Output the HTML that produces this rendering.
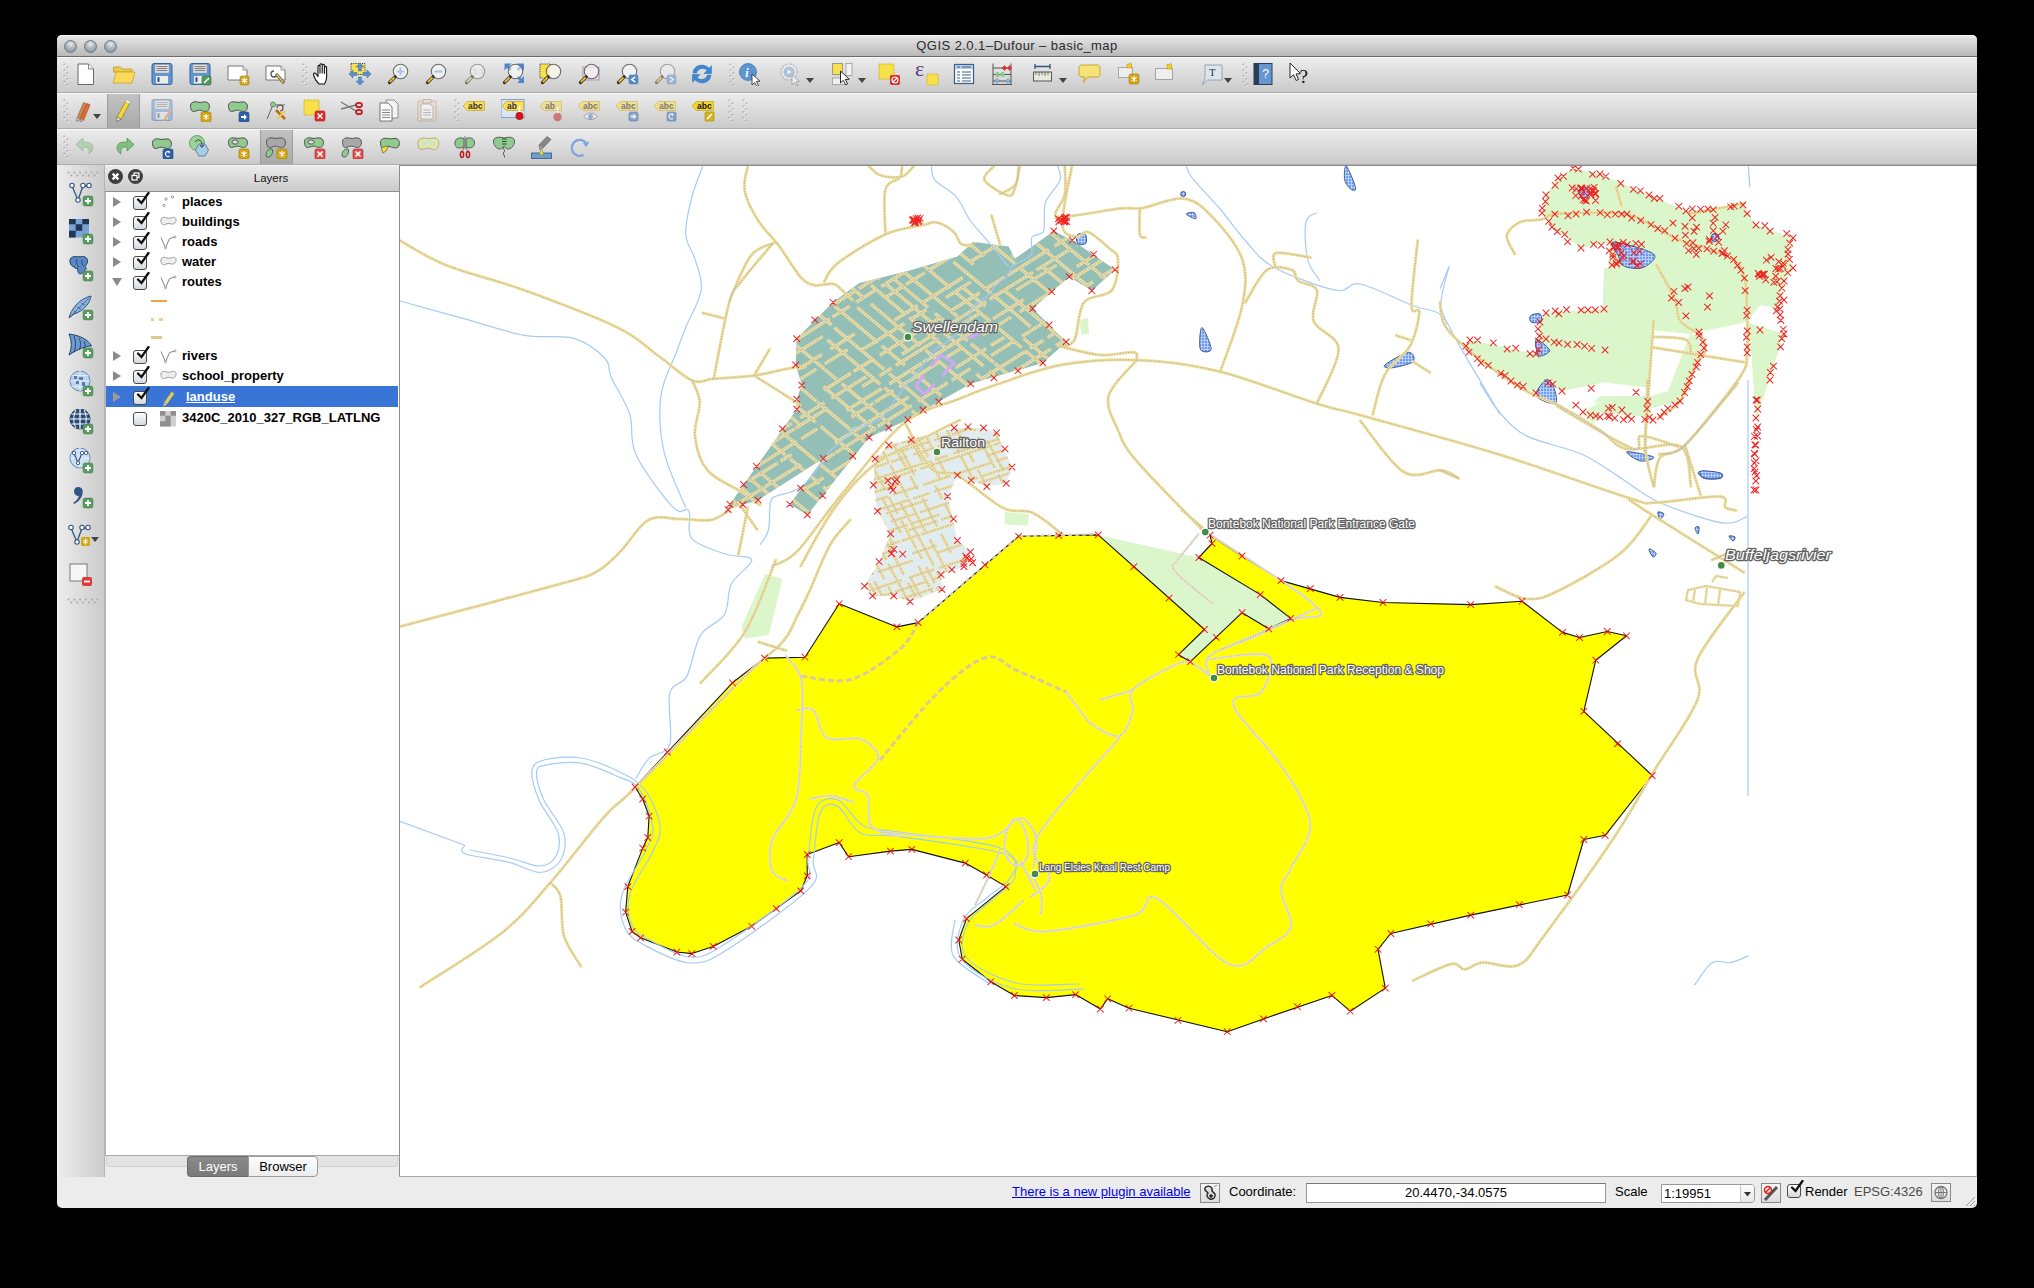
<!DOCTYPE html><html><head><meta charset="utf-8"><style>
*{margin:0;padding:0;box-sizing:border-box}
html,body{width:2034px;height:1288px;overflow:hidden}
body{background:#000;position:relative;font-family:"Liberation Sans", sans-serif;color:#000}
.a{position:absolute}
.tb{position:absolute;left:57px;width:1920px;height:36px;border-top:1px solid #f7f7f7;border-bottom:1px solid #adadad;background:linear-gradient(#ececec,#cacaca)}
.grip{position:absolute;width:4px;height:22px;background-image:radial-gradient(circle at 1px 1px,#9a9a9a 0.9px,transparent 1.1px);background-size:3px 3px}
.ico{position:absolute;width:26px;height:26px;overflow:visible}
.lay{position:absolute;left:182px;font-weight:bold;font-size:13px;line-height:16px;color:#000;white-space:nowrap}
.chk{position:absolute;left:133px;width:14px;height:14px;border:1px solid #6f6f6f;border-radius:3px;background:linear-gradient(#fdfdfd,#d9d9d9)}
.tri{position:absolute;left:113px;width:0;height:0;border-top:5px solid transparent;border-bottom:5px solid transparent;border-left:8px solid #8a8a8a}
.lbl{position:absolute;white-space:nowrap;color:#6d6d6d;text-shadow:0 0 1px #fff,0 0 1px #fff,1px 0 0 #fff,-1px 0 0 #fff,0 1px 0 #fff,0 -1px 0 #fff,1px 1px 1px #777,-1px -1px 1px #777}
</style></head><body><div class="a" style="left:57px;top:35px;width:1920px;height:1173px;background:#ececec;border-radius:5px"></div>
<div class="a" style="left:57px;top:35px;width:1920px;height:22px;border-radius:5px 5px 0 0;border-top:1px solid #f8f8f8;border-bottom:1px solid #6b6b6b;background:linear-gradient(#e6e6e6,#b8b8b8)"></div>
<div class="a" style="left:64px;top:40px;width:13px;height:13px;border-radius:50%;border:1px solid #6f7880;background:radial-gradient(circle at 50% 30%,#e9eef2 0,#aeb6bd 45%,#7d8790 100%)"></div>
<div class="a" style="left:84px;top:40px;width:13px;height:13px;border-radius:50%;border:1px solid #6f7880;background:radial-gradient(circle at 50% 30%,#e9eef2 0,#aeb6bd 45%,#7d8790 100%)"></div>
<div class="a" style="left:104px;top:40px;width:13px;height:13px;border-radius:50%;border:1px solid #6f7880;background:radial-gradient(circle at 50% 30%,#e9eef2 0,#aeb6bd 45%,#7d8790 100%)"></div>
<div class="a" style="left:57px;top:38px;width:1920px;text-align:center;font-size:13px;letter-spacing:0.44px;line-height:16px;color:#2a2a2a">QGIS 2.0.1&#8211;Dufour &#8211; basic_map</div>
<div class="tb" style="top:57px"></div>
<div class="tb" style="top:93px"></div>
<div class="tb" style="top:129px"></div>
<div class="a" style="left:107px;top:94px;width:33px;height:34px;background:linear-gradient(#c2c2c2,#a9a9a9);border-left:1px solid #9c9c9c;border-right:1px solid #9c9c9c"></div>
<div class="a" style="left:260px;top:130px;width:33px;height:34px;background:linear-gradient(#c2c2c2,#a9a9a9);border-left:1px solid #9c9c9c;border-right:1px solid #9c9c9c"></div>
<svg class="a" style="left:63px;top:63px" width="8" height="24" viewBox="0 0 8 24"><rect x="0.6" y="0.6" width="1.8" height="1.8" fill="#a9a9a9"/><rect x="1.4" y="1.6" width="1.4" height="1.4" fill="#fff" opacity=".8"/><rect x="3.6" y="3.5000000000000004" width="1.8" height="1.8" fill="#a9a9a9"/><rect x="4.4" y="4.5" width="1.4" height="1.4" fill="#fff" opacity=".8"/><rect x="0.6" y="6.3999999999999995" width="1.8" height="1.8" fill="#a9a9a9"/><rect x="1.4" y="7.3999999999999995" width="1.4" height="1.4" fill="#fff" opacity=".8"/><rect x="3.6" y="9.299999999999999" width="1.8" height="1.8" fill="#a9a9a9"/><rect x="4.4" y="10.299999999999999" width="1.4" height="1.4" fill="#fff" opacity=".8"/><rect x="0.6" y="12.2" width="1.8" height="1.8" fill="#a9a9a9"/><rect x="1.4" y="13.2" width="1.4" height="1.4" fill="#fff" opacity=".8"/><rect x="3.6" y="15.1" width="1.8" height="1.8" fill="#a9a9a9"/><rect x="4.4" y="16.1" width="1.4" height="1.4" fill="#fff" opacity=".8"/><rect x="0.6" y="18.0" width="1.8" height="1.8" fill="#a9a9a9"/><rect x="1.4" y="19.0" width="1.4" height="1.4" fill="#fff" opacity=".8"/><rect x="3.6" y="20.900000000000002" width="1.8" height="1.8" fill="#a9a9a9"/><rect x="4.4" y="21.900000000000002" width="1.4" height="1.4" fill="#fff" opacity=".8"/></svg>
<svg class="a" style="left:302px;top:63px" width="8" height="24" viewBox="0 0 8 24"><rect x="0.6" y="0.6" width="1.8" height="1.8" fill="#a9a9a9"/><rect x="1.4" y="1.6" width="1.4" height="1.4" fill="#fff" opacity=".8"/><rect x="3.6" y="3.5000000000000004" width="1.8" height="1.8" fill="#a9a9a9"/><rect x="4.4" y="4.5" width="1.4" height="1.4" fill="#fff" opacity=".8"/><rect x="0.6" y="6.3999999999999995" width="1.8" height="1.8" fill="#a9a9a9"/><rect x="1.4" y="7.3999999999999995" width="1.4" height="1.4" fill="#fff" opacity=".8"/><rect x="3.6" y="9.299999999999999" width="1.8" height="1.8" fill="#a9a9a9"/><rect x="4.4" y="10.299999999999999" width="1.4" height="1.4" fill="#fff" opacity=".8"/><rect x="0.6" y="12.2" width="1.8" height="1.8" fill="#a9a9a9"/><rect x="1.4" y="13.2" width="1.4" height="1.4" fill="#fff" opacity=".8"/><rect x="3.6" y="15.1" width="1.8" height="1.8" fill="#a9a9a9"/><rect x="4.4" y="16.1" width="1.4" height="1.4" fill="#fff" opacity=".8"/><rect x="0.6" y="18.0" width="1.8" height="1.8" fill="#a9a9a9"/><rect x="1.4" y="19.0" width="1.4" height="1.4" fill="#fff" opacity=".8"/><rect x="3.6" y="20.900000000000002" width="1.8" height="1.8" fill="#a9a9a9"/><rect x="4.4" y="21.900000000000002" width="1.4" height="1.4" fill="#fff" opacity=".8"/></svg>
<svg class="a" style="left:729px;top:63px" width="8" height="24" viewBox="0 0 8 24"><rect x="0.6" y="0.6" width="1.8" height="1.8" fill="#a9a9a9"/><rect x="1.4" y="1.6" width="1.4" height="1.4" fill="#fff" opacity=".8"/><rect x="3.6" y="3.5000000000000004" width="1.8" height="1.8" fill="#a9a9a9"/><rect x="4.4" y="4.5" width="1.4" height="1.4" fill="#fff" opacity=".8"/><rect x="0.6" y="6.3999999999999995" width="1.8" height="1.8" fill="#a9a9a9"/><rect x="1.4" y="7.3999999999999995" width="1.4" height="1.4" fill="#fff" opacity=".8"/><rect x="3.6" y="9.299999999999999" width="1.8" height="1.8" fill="#a9a9a9"/><rect x="4.4" y="10.299999999999999" width="1.4" height="1.4" fill="#fff" opacity=".8"/><rect x="0.6" y="12.2" width="1.8" height="1.8" fill="#a9a9a9"/><rect x="1.4" y="13.2" width="1.4" height="1.4" fill="#fff" opacity=".8"/><rect x="3.6" y="15.1" width="1.8" height="1.8" fill="#a9a9a9"/><rect x="4.4" y="16.1" width="1.4" height="1.4" fill="#fff" opacity=".8"/><rect x="0.6" y="18.0" width="1.8" height="1.8" fill="#a9a9a9"/><rect x="1.4" y="19.0" width="1.4" height="1.4" fill="#fff" opacity=".8"/><rect x="3.6" y="20.900000000000002" width="1.8" height="1.8" fill="#a9a9a9"/><rect x="4.4" y="21.900000000000002" width="1.4" height="1.4" fill="#fff" opacity=".8"/></svg>
<svg class="a" style="left:1242px;top:63px" width="8" height="24" viewBox="0 0 8 24"><rect x="0.6" y="0.6" width="1.8" height="1.8" fill="#a9a9a9"/><rect x="1.4" y="1.6" width="1.4" height="1.4" fill="#fff" opacity=".8"/><rect x="3.6" y="3.5000000000000004" width="1.8" height="1.8" fill="#a9a9a9"/><rect x="4.4" y="4.5" width="1.4" height="1.4" fill="#fff" opacity=".8"/><rect x="0.6" y="6.3999999999999995" width="1.8" height="1.8" fill="#a9a9a9"/><rect x="1.4" y="7.3999999999999995" width="1.4" height="1.4" fill="#fff" opacity=".8"/><rect x="3.6" y="9.299999999999999" width="1.8" height="1.8" fill="#a9a9a9"/><rect x="4.4" y="10.299999999999999" width="1.4" height="1.4" fill="#fff" opacity=".8"/><rect x="0.6" y="12.2" width="1.8" height="1.8" fill="#a9a9a9"/><rect x="1.4" y="13.2" width="1.4" height="1.4" fill="#fff" opacity=".8"/><rect x="3.6" y="15.1" width="1.8" height="1.8" fill="#a9a9a9"/><rect x="4.4" y="16.1" width="1.4" height="1.4" fill="#fff" opacity=".8"/><rect x="0.6" y="18.0" width="1.8" height="1.8" fill="#a9a9a9"/><rect x="1.4" y="19.0" width="1.4" height="1.4" fill="#fff" opacity=".8"/><rect x="3.6" y="20.900000000000002" width="1.8" height="1.8" fill="#a9a9a9"/><rect x="4.4" y="21.900000000000002" width="1.4" height="1.4" fill="#fff" opacity=".8"/></svg>
<svg class="a" style="left:63px;top:99px" width="8" height="24" viewBox="0 0 8 24"><rect x="0.6" y="0.6" width="1.8" height="1.8" fill="#a9a9a9"/><rect x="1.4" y="1.6" width="1.4" height="1.4" fill="#fff" opacity=".8"/><rect x="3.6" y="3.5000000000000004" width="1.8" height="1.8" fill="#a9a9a9"/><rect x="4.4" y="4.5" width="1.4" height="1.4" fill="#fff" opacity=".8"/><rect x="0.6" y="6.3999999999999995" width="1.8" height="1.8" fill="#a9a9a9"/><rect x="1.4" y="7.3999999999999995" width="1.4" height="1.4" fill="#fff" opacity=".8"/><rect x="3.6" y="9.299999999999999" width="1.8" height="1.8" fill="#a9a9a9"/><rect x="4.4" y="10.299999999999999" width="1.4" height="1.4" fill="#fff" opacity=".8"/><rect x="0.6" y="12.2" width="1.8" height="1.8" fill="#a9a9a9"/><rect x="1.4" y="13.2" width="1.4" height="1.4" fill="#fff" opacity=".8"/><rect x="3.6" y="15.1" width="1.8" height="1.8" fill="#a9a9a9"/><rect x="4.4" y="16.1" width="1.4" height="1.4" fill="#fff" opacity=".8"/><rect x="0.6" y="18.0" width="1.8" height="1.8" fill="#a9a9a9"/><rect x="1.4" y="19.0" width="1.4" height="1.4" fill="#fff" opacity=".8"/><rect x="3.6" y="20.900000000000002" width="1.8" height="1.8" fill="#a9a9a9"/><rect x="4.4" y="21.900000000000002" width="1.4" height="1.4" fill="#fff" opacity=".8"/></svg>
<svg class="a" style="left:454px;top:99px" width="8" height="24" viewBox="0 0 8 24"><rect x="0.6" y="0.6" width="1.8" height="1.8" fill="#a9a9a9"/><rect x="1.4" y="1.6" width="1.4" height="1.4" fill="#fff" opacity=".8"/><rect x="3.6" y="3.5000000000000004" width="1.8" height="1.8" fill="#a9a9a9"/><rect x="4.4" y="4.5" width="1.4" height="1.4" fill="#fff" opacity=".8"/><rect x="0.6" y="6.3999999999999995" width="1.8" height="1.8" fill="#a9a9a9"/><rect x="1.4" y="7.3999999999999995" width="1.4" height="1.4" fill="#fff" opacity=".8"/><rect x="3.6" y="9.299999999999999" width="1.8" height="1.8" fill="#a9a9a9"/><rect x="4.4" y="10.299999999999999" width="1.4" height="1.4" fill="#fff" opacity=".8"/><rect x="0.6" y="12.2" width="1.8" height="1.8" fill="#a9a9a9"/><rect x="1.4" y="13.2" width="1.4" height="1.4" fill="#fff" opacity=".8"/><rect x="3.6" y="15.1" width="1.8" height="1.8" fill="#a9a9a9"/><rect x="4.4" y="16.1" width="1.4" height="1.4" fill="#fff" opacity=".8"/><rect x="0.6" y="18.0" width="1.8" height="1.8" fill="#a9a9a9"/><rect x="1.4" y="19.0" width="1.4" height="1.4" fill="#fff" opacity=".8"/><rect x="3.6" y="20.900000000000002" width="1.8" height="1.8" fill="#a9a9a9"/><rect x="4.4" y="21.900000000000002" width="1.4" height="1.4" fill="#fff" opacity=".8"/></svg>
<svg class="a" style="left:728px;top:99px" width="8" height="24" viewBox="0 0 8 24"><rect x="0.6" y="0.6" width="1.8" height="1.8" fill="#a9a9a9"/><rect x="1.4" y="1.6" width="1.4" height="1.4" fill="#fff" opacity=".8"/><rect x="3.6" y="3.5000000000000004" width="1.8" height="1.8" fill="#a9a9a9"/><rect x="4.4" y="4.5" width="1.4" height="1.4" fill="#fff" opacity=".8"/><rect x="0.6" y="6.3999999999999995" width="1.8" height="1.8" fill="#a9a9a9"/><rect x="1.4" y="7.3999999999999995" width="1.4" height="1.4" fill="#fff" opacity=".8"/><rect x="3.6" y="9.299999999999999" width="1.8" height="1.8" fill="#a9a9a9"/><rect x="4.4" y="10.299999999999999" width="1.4" height="1.4" fill="#fff" opacity=".8"/><rect x="0.6" y="12.2" width="1.8" height="1.8" fill="#a9a9a9"/><rect x="1.4" y="13.2" width="1.4" height="1.4" fill="#fff" opacity=".8"/><rect x="3.6" y="15.1" width="1.8" height="1.8" fill="#a9a9a9"/><rect x="4.4" y="16.1" width="1.4" height="1.4" fill="#fff" opacity=".8"/><rect x="0.6" y="18.0" width="1.8" height="1.8" fill="#a9a9a9"/><rect x="1.4" y="19.0" width="1.4" height="1.4" fill="#fff" opacity=".8"/><rect x="3.6" y="20.900000000000002" width="1.8" height="1.8" fill="#a9a9a9"/><rect x="4.4" y="21.900000000000002" width="1.4" height="1.4" fill="#fff" opacity=".8"/></svg>
<svg class="a" style="left:742px;top:99px" width="8" height="24" viewBox="0 0 8 24"><rect x="0.6" y="0.6" width="1.8" height="1.8" fill="#a9a9a9"/><rect x="1.4" y="1.6" width="1.4" height="1.4" fill="#fff" opacity=".8"/><rect x="3.6" y="3.5000000000000004" width="1.8" height="1.8" fill="#a9a9a9"/><rect x="4.4" y="4.5" width="1.4" height="1.4" fill="#fff" opacity=".8"/><rect x="0.6" y="6.3999999999999995" width="1.8" height="1.8" fill="#a9a9a9"/><rect x="1.4" y="7.3999999999999995" width="1.4" height="1.4" fill="#fff" opacity=".8"/><rect x="3.6" y="9.299999999999999" width="1.8" height="1.8" fill="#a9a9a9"/><rect x="4.4" y="10.299999999999999" width="1.4" height="1.4" fill="#fff" opacity=".8"/><rect x="0.6" y="12.2" width="1.8" height="1.8" fill="#a9a9a9"/><rect x="1.4" y="13.2" width="1.4" height="1.4" fill="#fff" opacity=".8"/><rect x="3.6" y="15.1" width="1.8" height="1.8" fill="#a9a9a9"/><rect x="4.4" y="16.1" width="1.4" height="1.4" fill="#fff" opacity=".8"/><rect x="0.6" y="18.0" width="1.8" height="1.8" fill="#a9a9a9"/><rect x="1.4" y="19.0" width="1.4" height="1.4" fill="#fff" opacity=".8"/><rect x="3.6" y="20.900000000000002" width="1.8" height="1.8" fill="#a9a9a9"/><rect x="4.4" y="21.900000000000002" width="1.4" height="1.4" fill="#fff" opacity=".8"/></svg>
<svg class="a" style="left:63px;top:135px" width="8" height="24" viewBox="0 0 8 24"><rect x="0.6" y="0.6" width="1.8" height="1.8" fill="#a9a9a9"/><rect x="1.4" y="1.6" width="1.4" height="1.4" fill="#fff" opacity=".8"/><rect x="3.6" y="3.5000000000000004" width="1.8" height="1.8" fill="#a9a9a9"/><rect x="4.4" y="4.5" width="1.4" height="1.4" fill="#fff" opacity=".8"/><rect x="0.6" y="6.3999999999999995" width="1.8" height="1.8" fill="#a9a9a9"/><rect x="1.4" y="7.3999999999999995" width="1.4" height="1.4" fill="#fff" opacity=".8"/><rect x="3.6" y="9.299999999999999" width="1.8" height="1.8" fill="#a9a9a9"/><rect x="4.4" y="10.299999999999999" width="1.4" height="1.4" fill="#fff" opacity=".8"/><rect x="0.6" y="12.2" width="1.8" height="1.8" fill="#a9a9a9"/><rect x="1.4" y="13.2" width="1.4" height="1.4" fill="#fff" opacity=".8"/><rect x="3.6" y="15.1" width="1.8" height="1.8" fill="#a9a9a9"/><rect x="4.4" y="16.1" width="1.4" height="1.4" fill="#fff" opacity=".8"/><rect x="0.6" y="18.0" width="1.8" height="1.8" fill="#a9a9a9"/><rect x="1.4" y="19.0" width="1.4" height="1.4" fill="#fff" opacity=".8"/><rect x="3.6" y="20.900000000000002" width="1.8" height="1.8" fill="#a9a9a9"/><rect x="4.4" y="21.900000000000002" width="1.4" height="1.4" fill="#fff" opacity=".8"/></svg>
<svg class="a" style="left:74px;top:62px" width="24" height="24" viewBox="0 0 24 24"><path d="M4 2h10.5l5 5V22.5H4z" fill="#fff" stroke="#6a6a6a"/><path d="M14.5 2v5h5" fill="#f2f2f2" stroke="#6a6a6a" stroke-width=".8"/></svg>
<svg class="a" style="left:112px;top:62px" width="24" height="24" viewBox="0 0 24 24"><path d="M1.5 5h7l1.8 2H20v3H1.5z" fill="#efc846" stroke="#c39c2e" stroke-width=".8"/><path d="M1 21l3.2-11H23l-3 11z" fill="#fcd95a" stroke="#c9a234" stroke-width=".8"/></svg>
<svg class="a" style="left:150px;top:62px" width="24" height="24" viewBox="0 0 24 24"><rect x="2" y="1.5" width="20" height="21" rx="2" fill="#6196d6" stroke="#35649f"/><rect x="5" y="2.5" width="14" height="8.5" fill="#e9e9e9" stroke="#8a8a8a" stroke-width=".5"/><path d="M6.5 4.6h11M6.5 6.6h11M6.5 8.6h11" stroke="#555" stroke-width=".8"/><rect x="6" y="14" width="12" height="7.5" fill="#ececec"/><rect x="7.5" y="15.3" width="2" height="4.6" fill="#2b4f80"/></svg>
<svg class="a" style="left:188px;top:62px" width="24" height="24" viewBox="0 0 24 24"><rect x="2" y="1.5" width="20" height="21" rx="2" fill="#6196d6" stroke="#35649f"/><rect x="5" y="2.5" width="14" height="8.5" fill="#e9e9e9" stroke="#8a8a8a" stroke-width=".5"/><path d="M6.5 4.6h11M6.5 6.6h11M6.5 8.6h11" stroke="#555" stroke-width=".8"/><rect x="6" y="14" width="12" height="7.5" fill="#ececec"/><rect x="7.5" y="15.3" width="2" height="4.6" fill="#2b4f80"/><rect x="14" y="14" width="9" height="9" rx="1.6" fill="#4f9a58" stroke="#357040" stroke-width=".6"/><path d="M16.0 21.0L21.0 16.0" stroke="#fff" stroke-width="1.6"/></svg>
<svg class="a" style="left:226px;top:62px" width="24" height="24" viewBox="0 0 24 24"><path d="M2 4h15l4 4v10H2z" fill="#fff" stroke="#6a6a6a" stroke-width=".9"/><path d="M17 4v4h4" fill="#eee" stroke="#6a6a6a" stroke-width=".7"/><rect x="14" y="14" width="9" height="9" rx="1.6" fill="#d4a514" stroke="#a88000" stroke-width=".6"/><path d="M18.5 15.5V21.5M15.9 17.0L21.1 20.0M15.9 20.0L21.1 17.0" stroke="#fff" stroke-width="1.1"/><circle cx="18.5" cy="18.5" r="1.2" fill="#fff"/></svg>
<svg class="a" style="left:264px;top:62px" width="24" height="24" viewBox="0 0 24 24"><path d="M2 4h15l4 4v10H2z" fill="#fff" stroke="#6a6a6a" stroke-width=".9"/><path d="M17 4v4h4" fill="#eee" stroke="#6a6a6a" stroke-width=".7"/><path d="M10 9a3 3 0 1 0 3 3" fill="none" stroke="#555" stroke-width="1.3"/><path d="M12 12L20 21" stroke="#444" stroke-width="3"/><path d="M12.5 12.5L19.5 20.5" stroke="#e8c44a" stroke-width="1.8"/></svg>
<svg class="a" style="left:311px;top:62px" width="24" height="24" viewBox="0 0 24 24"><path d="M8 22C5 19 3 15 2.5 12.5C2.3 11 4 10.5 5 11.8L7 14.5V4.5C7 3 9 3 9 4.5V11V2.8C9 1.3 11.2 1.3 11.2 2.8V11V3.5C11.2 2 13.4 2 13.4 3.5V11.5V5.5C13.4 4 15.6 4 15.6 5.5V15C15.6 18.5 14 20.5 13.5 22Z" fill="#fff" stroke="#111" stroke-width="1.1" stroke-linejoin="round"/></svg>
<svg class="a" style="left:348px;top:62px" width="24" height="24" viewBox="0 0 24 24"><rect x="3" y="1.5" width="14" height="11" fill="#f7e04a" stroke="#222" stroke-width=".8" stroke-dasharray="1.2 1"/><path d="M12 1l4 4h-2.5v4h-3V5H8z M12 23l4-4h-2.5v-4h-3v4H8z M1 12l4-4v2.5h4v3H5V16z M23 12l-4-4v2.5h-4v3h4V16z" fill="#5b8fce" stroke="#3d6eaa" stroke-width=".5"/></svg>
<svg class="a" style="left:386px;top:62px" width="24" height="24" viewBox="0 0 24 24"><g opacity="1"><path d="M14.5 5.5v8M10.5 9.5h8" stroke="#4a7fc4" stroke-width="2.2"/><circle cx="14.5" cy="9.5" r="7.2" fill="#fff" fill-opacity=".55" stroke="#6b6b6b" stroke-width="1.1"/><path d="M9.2 14.8L3.5 20.5" stroke="#333" stroke-width="3.2" stroke-linecap="round"/><path d="M8.5 15.5L3.8 20.2" stroke="#f2c21f" stroke-width="1.8"/></g></svg>
<svg class="a" style="left:424px;top:62px" width="24" height="24" viewBox="0 0 24 24"><g opacity="1"><path d="M10.5 9.5h8" stroke="#4a7fc4" stroke-width="2.2"/><circle cx="14.5" cy="9.5" r="7.2" fill="#fff" fill-opacity=".55" stroke="#6b6b6b" stroke-width="1.1"/><path d="M9.2 14.8L3.5 20.5" stroke="#333" stroke-width="3.2" stroke-linecap="round"/><path d="M8.5 15.5L3.8 20.2" stroke="#f2c21f" stroke-width="1.8"/></g></svg>
<svg class="a" style="left:463px;top:62px" width="24" height="24" viewBox="0 0 24 24"><g opacity="0.6"><text x="10" y="12.3" font-family="Liberation Sans" font-size="7.5" font-weight="bold" fill="#999">1:1</text><circle cx="14.5" cy="9.5" r="7.2" fill="#fff" fill-opacity=".55" stroke="#6b6b6b" stroke-width="1.1"/><path d="M9.2 14.8L3.5 20.5" stroke="#333" stroke-width="3.2" stroke-linecap="round"/><path d="M8.5 15.5L3.8 20.2" stroke="#e8d08a" stroke-width="1.8"/></g></svg>
<svg class="a" style="left:501px;top:62px" width="24" height="24" viewBox="0 0 24 24"><path d="M3.5 1.5h7l-2.5 2.5 3 3-2 2-3-3-2.5 2.5z M23 1.5v7l-2.5-2.5-3 3-2-2 3-3-2.5-2.5z M23 21v-7l-2.5 2.5-3-3-2 2 3 3-2.5 2.5z" fill="#4f86cc"/><g opacity="1"><circle cx="14.5" cy="9.5" r="7.2" fill="#fff" fill-opacity=".55" stroke="#6b6b6b" stroke-width="1.1"/><path d="M9.2 14.8L3.5 20.5" stroke="#333" stroke-width="3.2" stroke-linecap="round"/><path d="M8.5 15.5L3.8 20.2" stroke="#f2c21f" stroke-width="1.8"/></g></svg>
<svg class="a" style="left:539px;top:62px" width="24" height="24" viewBox="0 0 24 24"><rect x="1" y="2" width="11" height="14" fill="#f7e04a" stroke="#222" stroke-width=".8" stroke-dasharray="1.2 1"/><g opacity="1"><rect x="11" y="4" width="8" height="10" fill="#e8e4cc" /><circle cx="14.5" cy="9.5" r="7.2" fill="#fff" fill-opacity=".55" stroke="#6b6b6b" stroke-width="1.1"/><path d="M9.2 14.8L3.5 20.5" stroke="#333" stroke-width="3.2" stroke-linecap="round"/><path d="M8.5 15.5L3.8 20.2" stroke="#f2c21f" stroke-width="1.8"/></g></svg>
<svg class="a" style="left:577px;top:62px" width="24" height="24" viewBox="0 0 24 24"><rect x="6" y="5" width="16" height="13" fill="#e3d6e3" stroke="#9b8a9b" stroke-width=".8"/><g opacity="1"><circle cx="14.5" cy="9.5" r="7.2" fill="#fff" fill-opacity=".55" stroke="#6b6b6b" stroke-width="1.1"/><path d="M9.2 14.8L3.5 20.5" stroke="#333" stroke-width="3.2" stroke-linecap="round"/><path d="M8.5 15.5L3.8 20.2" stroke="#f2c21f" stroke-width="1.8"/></g></svg>
<svg class="a" style="left:615px;top:62px" width="24" height="24" viewBox="0 0 24 24"><g opacity="1"><circle cx="14.5" cy="9.5" r="7.2" fill="#fff" fill-opacity=".55" stroke="#6b6b6b" stroke-width="1.1"/><path d="M9.2 14.8L3.5 20.5" stroke="#333" stroke-width="3.2" stroke-linecap="round"/><path d="M8.5 15.5L3.8 20.2" stroke="#f2c21f" stroke-width="1.8"/></g><rect x="14" y="13" width="9" height="9" rx="1.6" fill="#4f86cc" stroke="#6080b0" stroke-width=".6"/><path d="M20.3 14.8L16.8 17.5L20.3 20.2" fill="none" stroke="#fff" stroke-width="1.5"/></svg>
<svg class="a" style="left:653px;top:62px" width="24" height="24" viewBox="0 0 24 24"><g opacity=".55"><g opacity="1"><circle cx="14.5" cy="9.5" r="7.2" fill="#fff" fill-opacity=".55" stroke="#6b6b6b" stroke-width="1.1"/><path d="M9.2 14.8L3.5 20.5" stroke="#333" stroke-width="3.2" stroke-linecap="round"/><path d="M8.5 15.5L3.8 20.2" stroke="#f2c21f" stroke-width="1.8"/></g><rect x="14" y="13" width="9" height="9" rx="1.6" fill="#6b96d0" stroke="#6080b0" stroke-width=".6"/><path d="M16.8 14.8L20.3 17.5L16.8 20.2" fill="none" stroke="#fff" stroke-width="1.5"/></g></svg>
<svg class="a" style="left:690px;top:62px" width="24" height="24" viewBox="0 0 24 24"><path d="M3 11C3.5 5 9 2 14.5 3.5C16.5 4 18 5 19 6.2L21.5 3.8V11.5H14L17 8.5C15 6.2 11 5.8 8.5 8C7.3 9 6.8 10.2 6.8 11Z" fill="#3f86d4" stroke="#2f6fb5" stroke-width=".5"/><path d="M21 13C20.5 19 15 22 9.5 20.5C7.5 20 6 19 5 17.8L2.5 20.2V12.5H10L7 15.5C9 17.8 13 18.2 15.5 16C16.7 15 17.2 13.8 17.2 13Z" fill="#3f86d4" stroke="#2f6fb5" stroke-width=".5"/></svg>
<svg class="a" style="left:738px;top:62px" width="24" height="24" viewBox="0 0 24 24"><circle cx="10" cy="10" r="8.5" fill="#5d94d2" stroke="#3b6fae" stroke-width=".7"/><text x="7.3" y="15" font-family="Liberation Serif" font-size="12" font-style="italic" font-weight="bold" fill="#fff">i</text><path d="M14 12L14 23L16.6 20.4L18.8 24.5L20.6 23.6L18.5 19.5L22 19.2Z" fill="#fff" stroke="#222" stroke-width=".8"/></svg>
<svg class="a" style="left:779px;top:62px" width="24" height="24" viewBox="0 0 24 24"><g opacity=".6"><circle cx="10" cy="10" r="8" fill="#eee" stroke="#999" stroke-width="1.2" stroke-dasharray="2 1"/><circle cx="10" cy="10" r="5" fill="#8fb2dd" stroke="#6c90c0" stroke-width=".7"/><path d="M8.5 7.5v5l4-2.5z" fill="#fff"/><path d="M13 13L13 23L15.5 20.5L17.5 24L19 23.2L17 19.7L20.5 19.5Z" fill="#fff" stroke="#777" stroke-width=".8"/></g></svg>
<svg class="a" style="left:831px;top:62px" width="24" height="24" viewBox="0 0 24 24"><rect x="1.5" y="1.5" width="10" height="11" fill="#f7e04a" stroke="#8a8a8a" stroke-width=".8"/><rect x="15" y="1.5" width="6" height="12" fill="#f2f2f2" stroke="#9a9a9a" stroke-width=".8"/><rect x="1.5" y="16" width="13" height="6.5" fill="#f2f2f2" stroke="#9a9a9a" stroke-width=".8"/><path d="M9.5 9L9.5 21L12.3 18.4L14.6 22.8L16.6 21.8L14.4 17.6L18.2 17.2Z" fill="#fff" stroke="#111" stroke-width=".9"/></svg>
<svg class="a" style="left:877px;top:62px" width="24" height="24" viewBox="0 0 24 24"><rect x="2" y="2" width="15" height="15" fill="#f7e04a" stroke="#c8a800" stroke-width=".9" stroke-dasharray="1.3 1"/><rect x="13" y="13" width="10" height="10" rx="1.8" fill="#dd2a2a"/><circle cx="18" cy="18" r="3" fill="none" stroke="#fff" stroke-width="1.2"/><path d="M16 20L20 16" stroke="#fff" stroke-width="1.2"/></svg>
<svg class="a" style="left:915px;top:62px" width="24" height="24" viewBox="0 0 24 24"><text x="0" y="14" font-family="Liberation Serif" font-size="22" fill="#5c3a80">&#949;</text><rect x="12" y="12" width="11" height="11" fill="#f7e04a" stroke="#c8a800" stroke-width=".8" stroke-dasharray="1.2 1"/></svg>
<svg class="a" style="left:952px;top:62px" width="24" height="24" viewBox="0 0 24 24"><rect x="2.5" y="2.5" width="19" height="19" fill="#fff" stroke="#3d6288" stroke-width="1.3"/><rect x="3" y="3" width="18" height="4" fill="#b5cde6"/><path d="M5 5h3M10 5h9M5 10h3M10 10h9M5 13h3M10 13h9M5 16h3M10 16h9M5 19h3M10 19h9" stroke="#3d6288" stroke-width="1.1"/></svg>
<svg class="a" style="left:990px;top:62px" width="24" height="24" viewBox="0 0 24 24"><path d="M3 1.5V22.5M21 1.5V22.5M2 22.5h20M3 6h18M3 12.5h18M3 19h18" stroke="#555" stroke-width="1"/><path d="M14.5 3.5l2.3 2.5-2.3 2.5-2.3-2.5zM19.5 3.5l2 2.5-2 2.5-2-2.5z" fill="#e33" stroke="#900" stroke-width=".4"/><path d="M7.5 10l2.3 2.5-2.3 2.5-2.3-2.5zM12.5 10l2.3 2.5-2.3 2.5-2.3-2.5z" fill="#8fd28f" stroke="#3a8a3a" stroke-width=".4"/><path d="M7 16.5l2.3 2.5-2.3 2.5-2.3-2.5zM18 16.5l2.3 2.5-2.3 2.5-2.3-2.5z" fill="#8fb8e6" stroke="#3a6aa8" stroke-width=".4"/></svg>
<svg class="a" style="left:1032px;top:62px" width="24" height="24" viewBox="0 0 24 24"><path d="M3 4.5h15M3 2v5M18 2v5" stroke="#2f5580" stroke-width="1.3"/><rect x="1.5" y="10" width="18" height="9" fill="#e8e8dd" stroke="#555" stroke-width="1"/><path d="M4 10v3M7 10v4M10 10v3M13 10v4M16 10v3" stroke="#555" stroke-width=".8"/></svg>
<svg class="a" style="left:1078px;top:62px" width="24" height="24" viewBox="0 0 24 24"><path d="M4 3h15c2 0 3 1 3 3v6c0 2-1 3-3 3H10L5.5 20.5L7 15H4c-2 0-3-1-3-3V6c0-2 1-3 3-3z" fill="#f5e27a" stroke="#c9a726" stroke-width="1"/></svg>
<svg class="a" style="left:1117px;top:62px" width="24" height="24" viewBox="0 0 24 24"><rect x="1.5" y="5.5" width="14" height="10" fill="#eee" stroke="#444" stroke-width=".8" stroke-dasharray="1 1"/><path d="M10 2h2.5l1-1.2 1 1.2V6h-4.5z" fill="#f1cf2e" stroke="#a88a00" stroke-width=".5"/><rect x="12" y="12" width="10" height="10" rx="1.6" fill="#d4a514" stroke="#a88000" stroke-width=".6"/><path d="M17.0 14.0V20.0M14.4 15.5L19.6 18.5M14.4 18.5L19.6 15.5" stroke="#fff" stroke-width="1.1"/><circle cx="17.0" cy="17.0" r="1.2" fill="#fff"/></svg>
<svg class="a" style="left:1154px;top:62px" width="24" height="24" viewBox="0 0 24 24"><rect x="1.5" y="6.5" width="17" height="11" fill="#eee" stroke="#444" stroke-width=".8" stroke-dasharray="1 1"/><path d="M13 2.5h2.5l1-1.2 1 1.2V7h-4.5z" fill="#f1cf2e" stroke="#a88a00" stroke-width=".5"/></svg>
<svg class="a" style="left:1200px;top:62px" width="24" height="24" viewBox="0 0 24 24"><path d="M5 3h17v15H7.5L2.5 22.5L4.5 17.5H5z" fill="#dde6ee" stroke="#8c9cab" stroke-width=".9"/><text x="9" y="14" font-family="Liberation Serif" font-size="11" fill="#333">T</text></svg>
<svg class="a" style="left:1251px;top:62px" width="24" height="24" viewBox="0 0 24 24"><rect x="3" y="1.5" width="18" height="21" fill="#6696d0" stroke="#2b3e58" stroke-width="1"/><rect x="3" y="1.5" width="5" height="21" fill="#2b3e58"/><text x="11.3" y="16" font-family="Liberation Sans" font-size="12" fill="#fff">?</text></svg>
<svg class="a" style="left:1288px;top:62px" width="24" height="24" viewBox="0 0 24 24"><path d="M2 1L2 16L5.5 12.8L8.2 18.5L10.5 17.4L8 12L12.5 11.6Z" fill="#fff" stroke="#111" stroke-width=".9"/><text x="11.5" y="21" font-family="Liberation Serif" font-size="19" fill="#111">?</text></svg>
<svg class="a" style="left:74px;top:98px" width="24" height="24" viewBox="0 0 24 24"><path d="M3 20L9.5 4.5L12.5 5.8L6 21.5Z" fill="#c9875a" stroke="#8a5a3a" stroke-width=".6"/><path d="M6.5 21L13 5.5L16 6.8L9.5 22.5Z" fill="#e8692d" stroke="#9a4a1a" stroke-width=".6"/><path d="M3 20L2.5 23.5L6 21.5M6.5 21L6 24L9.5 22.5" fill="#ccc" stroke="#666" stroke-width=".6"/></svg>
<svg class="a" style="left:111px;top:98px" width="24" height="24" viewBox="0 0 24 24"><path d="M6 19L14.5 3.5L18.5 5.7L10 21.2Z" fill="#f1da3a" stroke="#8a7a20" stroke-width=".7"/><path d="M6 19L5.5 23.5L10 21.2Z" fill="#eee" stroke="#555" stroke-width=".6"/><path d="M14.5 3.5L15.5 1.8L19.5 4L18.5 5.7" fill="#fff" stroke="#999" stroke-width=".5"/></svg>
<svg class="a" style="left:150px;top:98px" width="24" height="24" viewBox="0 0 24 24"><g opacity=".45"><rect x="2" y="1.5" width="20" height="21" rx="2" fill="#6196d6" stroke="#35649f"/><rect x="5" y="2.5" width="14" height="8.5" fill="#e9e9e9" stroke="#8a8a8a" stroke-width=".5"/><path d="M6.5 4.6h11M6.5 6.6h11M6.5 8.6h11" stroke="#555" stroke-width=".8"/><rect x="6" y="14" width="12" height="7.5" fill="#ececec"/><rect x="7.5" y="15.3" width="2" height="4.6" fill="#2b4f80"/><path d="M13 22L20 11L22 12.2L15 23.2Z" fill="#e87d3a"/></g></svg>
<svg class="a" style="left:188px;top:98px" width="24" height="24" viewBox="0 0 24 24"><path d="M2.5 7.5C2 3.5 6 2 10 3.2C13 4 15 2.5 18 3C21.5 3.8 22 7.5 20.8 10.5C19.5 13 16.5 12.8 13.5 11.5C10.5 10.2 8 12.5 5.5 12.5C3.5 12.5 2.8 10.5 2.5 7.5Z" fill="#8fca8f" stroke="#505050" stroke-width="1" transform="translate(0,1)"/><rect x="13" y="14" width="10" height="10" rx="1.6" fill="#d4a514" stroke="#a88000" stroke-width=".6"/><path d="M18.0 16.0V22.0M15.4 17.5L20.6 20.5M15.4 20.5L20.6 17.5" stroke="#fff" stroke-width="1.1"/><circle cx="18.0" cy="19.0" r="1.2" fill="#fff"/></svg>
<svg class="a" style="left:226px;top:98px" width="24" height="24" viewBox="0 0 24 24"><path d="M2.5 7.5C2 3.5 6 2 10 3.2C13 4 15 2.5 18 3C21.5 3.8 22 7.5 20.8 10.5C19.5 13 16.5 12.8 13.5 11.5C10.5 10.2 8 12.5 5.5 12.5C3.5 12.5 2.8 10.5 2.5 7.5Z" fill="#8fca8f" stroke="#505050" stroke-width="1" transform="translate(0,1)"/><rect x="13" y="14" width="10" height="10" rx="1.6" fill="#2f5fa8" stroke="#1f447d" stroke-width=".6"/><path d="M15.0 18.0h3v-2l3 3l-3 3v-2h-3z" fill="#fff"/></svg>
<svg class="a" style="left:264px;top:98px" width="24" height="24" viewBox="0 0 24 24"><path d="M3 21L9 7L21 7" fill="none" stroke="#444" stroke-width=".8"/><circle cx="9" cy="6.5" r="2.5" fill="#8fca8f" stroke="#4a7a4a" stroke-width=".7"/><path d="M12 12L21 21" stroke="#c06a10" stroke-width="2.5"/><path d="M21 13L13 21" stroke="#e8d24a" stroke-width="2.2"/><path d="M13 10a3 3 0 1 1 3 3" fill="none" stroke="#555" stroke-width="1.2"/></svg>
<svg class="a" style="left:302px;top:98px" width="24" height="24" viewBox="0 0 24 24"><rect x="2" y="2" width="15" height="15" fill="#f7e04a" stroke="#c8a800" stroke-width=".9" stroke-dasharray="1.3 1"/><rect x="13" y="13" width="10" height="10" rx="1.6" fill="#dd2a2a" stroke="#b01c1c" stroke-width=".6"/><path d="M15.5 15.5L20.5 20.5M20.5 15.5L15.5 20.5" stroke="#fff" stroke-width="1.6"/></svg>
<svg class="a" style="left:340px;top:98px" width="24" height="24" viewBox="0 0 24 24"><path d="M1 4L16 13M1 11L16 7" stroke="#777" stroke-width="1.4"/><ellipse cx="19" cy="7" rx="3" ry="2.2" fill="none" stroke="#c4161c" stroke-width="1.8"/><ellipse cx="19" cy="14" rx="3" ry="2.2" fill="none" stroke="#c4161c" stroke-width="1.8"/></svg>
<svg class="a" style="left:377px;top:98px" width="24" height="24" viewBox="0 0 24 24"><path d="M9 2h8l4 4v14H9z" fill="#f4f4f4" stroke="#777" stroke-width=".8"/><path d="M3 5h8l4 4v14H3z" fill="#fff" stroke="#666" stroke-width=".9"/><path d="M5 12h8M5 14.5h8M5 17h8M5 19.5h8" stroke="#666" stroke-width=".8"/></svg>
<svg class="a" style="left:415px;top:98px" width="24" height="24" viewBox="0 0 24 24"><g opacity=".6"><rect x="3" y="3" width="18" height="20" rx="1" fill="#e8dccb" stroke="#b8946a" stroke-width=".9"/><rect x="8" y="1.5" width="8" height="3.5" fill="#e8dccb" stroke="#b8946a" stroke-width=".9"/><path d="M6 6h9l3 3v12H6z" fill="#fff" stroke="#777" stroke-width=".7"/><path d="M8 12h8M8 14.5h8M8 17h8" stroke="#777" stroke-width=".7"/></g></svg>
<svg class="a" style="left:462px;top:98px" width="24" height="24" viewBox="0 0 24 24"><g opacity="1"><path d="M1 8L5.5 3.5H22.5V12.5H5.5Z" fill="#f9df5a" stroke="#c9a726" stroke-width=".8"/><text x="6" y="11.3" font-family="Liberation Sans" font-size="8.5" font-weight="bold" fill="#333">abc</text></g></svg>
<svg class="a" style="left:501px;top:98px" width="24" height="24" viewBox="0 0 24 24"><rect x="0" y="1.5" width="24" height="18" fill="#dbe3ec" stroke="#7aa0d8" stroke-width="1"/><g opacity="1"><path d="M1 8L5.5 3.5H22.5V12.5H5.5Z" fill="#f9df5a" stroke="#c9a726" stroke-width=".8"/><text x="6" y="11.3" font-family="Liberation Sans" font-size="8.5" font-weight="bold" fill="#333">ab</text></g><circle cx="18.5" cy="18" r="4" fill="#c81a1a"/><path d="M18.5 14V8" stroke="#fff" stroke-width="1.5"/></svg>
<svg class="a" style="left:539px;top:98px" width="24" height="24" viewBox="0 0 24 24"><g opacity=".6"><g opacity="1"><path d="M1 8L5.5 3.5H22.5V12.5H5.5Z" fill="#f9df5a" stroke="#c9a726" stroke-width=".8"/><text x="6" y="11.3" font-family="Liberation Sans" font-size="8.5" font-weight="bold" fill="#333">ab</text></g><circle cx="18.5" cy="19" r="4.2" fill="#c83a3a"/><path d="M18.5 15V9" stroke="#fff" stroke-width="1.5"/></g></svg>
<svg class="a" style="left:577px;top:98px" width="24" height="24" viewBox="0 0 24 24"><g opacity=".6"><g opacity="1"><path d="M1 8L5.5 3.5H22.5V12.5H5.5Z" fill="#f9df5a" stroke="#c9a726" stroke-width=".8"/><text x="6" y="11.3" font-family="Liberation Sans" font-size="8.5" font-weight="bold" fill="#333">abc</text></g><path d="M7 18.5C10 14 17 14 20 18.5C17 22.5 10 22.5 7 18.5Z" fill="#fff" stroke="#555" stroke-width=".8"/><circle cx="13.5" cy="18.5" r="2.5" fill="#5b8fd0"/></g></svg>
<svg class="a" style="left:615px;top:98px" width="24" height="24" viewBox="0 0 24 24"><g opacity=".6"><g opacity="1"><path d="M1 8L5.5 3.5H22.5V12.5H5.5Z" fill="#f9df5a" stroke="#c9a726" stroke-width=".8"/><text x="6" y="11.3" font-family="Liberation Sans" font-size="8.5" font-weight="bold" fill="#333">abc</text></g><rect x="14" y="14" width="9" height="9" rx="1.6" fill="#4f7fc0" stroke="#1f447d" stroke-width=".6"/><path d="M15.5 17.5h3v-2l3 3l-3 3v-2h-3z" fill="#fff"/></g></svg>
<svg class="a" style="left:653px;top:98px" width="24" height="24" viewBox="0 0 24 24"><g opacity=".6"><g opacity="1"><path d="M1 8L5.5 3.5H22.5V12.5H5.5Z" fill="#f9df5a" stroke="#c9a726" stroke-width=".8"/><text x="6" y="11.3" font-family="Liberation Sans" font-size="8.5" font-weight="bold" fill="#333">abc</text></g><rect x="14" y="14" width="9" height="9" rx="1.6" fill="#4f7fc0" stroke="#1f447d" stroke-width=".6"/><path d="M20.5 17.0A2.5 2.5 0 1 0 20.0 20.5" fill="none" stroke="#fff" stroke-width="1.1"/><path d="M17.5 16.0h2v2" fill="none" stroke="#fff" stroke-width=".9"/></g></svg>
<svg class="a" style="left:691px;top:98px" width="24" height="24" viewBox="0 0 24 24"><g opacity="1"><path d="M1 8L5.5 3.5H22.5V12.5H5.5Z" fill="#f5d62a" stroke="#c9a726" stroke-width=".8"/><text x="6" y="11.3" font-family="Liberation Sans" font-size="8.5" font-weight="bold" fill="#111">abc</text></g><rect x="14" y="14" width="9" height="9" rx="1" fill="#d8b41a" stroke="#a88a00" stroke-width=".6"/><path d="M16 21L21 16" stroke="#fff" stroke-width="1.6"/></svg>
<svg class="a" style="left:74px;top:135px" width="24" height="24" viewBox="0 0 24 24"><g opacity=".45"><path d="M9 3L2 9.5L9 16V12C14 11.5 16 13.5 15 19C19.5 16 20 11 17 8.5C15 7 12 7 9 7.2Z" fill="#7cc27c" stroke="#4a8a4a" stroke-width=".7"/></g></svg>
<svg class="a" style="left:112px;top:135px" width="24" height="24" viewBox="0 0 24 24"><path d="M15 3L22 9.5L15 16V12C10 11.5 8 13.5 9 19C4.5 16 4 11 7 8.5C9 7 12 7 15 7.2Z" fill="#7cc27c" stroke="#4a8a4a" stroke-width=".7"/></svg>
<svg class="a" style="left:150px;top:135px" width="24" height="24" viewBox="0 0 24 24"><path d="M2.5 7.5C2 3.5 6 2 10 3.2C13 4 15 2.5 18 3C21.5 3.8 22 7.5 20.8 10.5C19.5 13 16.5 12.8 13.5 11.5C10.5 10.2 8 12.5 5.5 12.5C3.5 12.5 2.8 10.5 2.5 7.5Z" fill="#8fca8f" stroke="#505050" stroke-width="1" transform="translate(0,1)"/><rect x="13" y="14" width="10" height="10" rx="1.6" fill="#2f5fa8" stroke="#1f447d" stroke-width=".6"/><path d="M20.0 17.5A2.5 2.5 0 1 0 19.5 21.0" fill="none" stroke="#fff" stroke-width="1.1"/><path d="M17.0 16.5h2v2" fill="none" stroke="#fff" stroke-width=".9"/></svg>
<svg class="a" style="left:188px;top:135px" width="24" height="24" viewBox="0 0 24 24"><circle cx="9" cy="8" r="7.5" fill="#9ad49a" stroke="#5a8a5a" stroke-width=".8"/><path d="M11 9L17 9L20.5 15L17 21L11 21L7.5 15Z" fill="#a9cbe3" stroke="#4d7ea8" stroke-width=".9"/><path d="M7 7C10 3 15 5 14 12" fill="none" stroke="#333" stroke-width=".9"/><path d="M12 10l2 2.5 2-2.5" fill="none" stroke="#333" stroke-width=".9"/></svg>
<svg class="a" style="left:226px;top:135px" width="24" height="24" viewBox="0 0 24 24"><path d="M2.5 7.5C2 3.5 6 2 10 3.2C13 4 15 2.5 18 3C21.5 3.8 22 7.5 20.8 10.5C19.5 13 16.5 12.8 13.5 11.5C10.5 10.2 8 12.5 5.5 12.5C3.5 12.5 2.8 10.5 2.5 7.5ZM6 7C6 5 9 4.5 11 5.5C13 6.5 12 9 9.5 9C7 9 6 8.5 6 7Z" fill="#8fca8f" fill-rule="evenodd" stroke="#505050" stroke-width="1"/><rect x="13" y="14" width="10" height="10" rx="1.6" fill="#d4a514" stroke="#a88000" stroke-width=".6"/><path d="M18.0 16.0V22.0M15.4 17.5L20.6 20.5M15.4 20.5L20.6 17.5" stroke="#fff" stroke-width="1.1"/><circle cx="18.0" cy="19.0" r="1.2" fill="#fff"/></svg>
<svg class="a" style="left:264px;top:135px" width="24" height="24" viewBox="0 0 24 24"><path d="M2.5 7.5C2 3.5 6 2 10 3.2C13 4 15 2.5 18 3C21.5 3.8 22 7.5 20.8 10.5C19.5 13 16.5 12.8 13.5 11.5C10.5 10.2 8 12.5 5.5 12.5C3.5 12.5 2.8 10.5 2.5 7.5Z" fill="#a8a8a8" stroke="#555" stroke-width="1" transform=""/><path d="M2 20C2 16 5 13.5 8 14C9.5 16 8 21 5 22C3 22.5 2 21.5 2 20Z" fill="#8fca8f" stroke="#505050" stroke-width=".9"/><rect x="13" y="14" width="10" height="10" rx="1.6" fill="#d4a514" stroke="#a88000" stroke-width=".6"/><path d="M18.0 16.0V22.0M15.4 17.5L20.6 20.5M15.4 20.5L20.6 17.5" stroke="#fff" stroke-width="1.1"/><circle cx="18.0" cy="19.0" r="1.2" fill="#fff"/></svg>
<svg class="a" style="left:302px;top:135px" width="24" height="24" viewBox="0 0 24 24"><path d="M2.5 7.5C2 3.5 6 2 10 3.2C13 4 15 2.5 18 3C21.5 3.8 22 7.5 20.8 10.5C19.5 13 16.5 12.8 13.5 11.5C10.5 10.2 8 12.5 5.5 12.5C3.5 12.5 2.8 10.5 2.5 7.5ZM6 7C6 5 9 4.5 11 5.5C13 6.5 12 9 9.5 9C7 9 6 8.5 6 7Z" fill="#8fca8f" fill-rule="evenodd" stroke="#505050" stroke-width="1"/><rect x="13" y="14" width="10" height="10" rx="1.6" fill="#e05050" stroke="#b01c1c" stroke-width=".6"/><path d="M15.5 16.5L20.5 21.5M20.5 16.5L15.5 21.5" stroke="#fff" stroke-width="1.6"/></svg>
<svg class="a" style="left:340px;top:135px" width="24" height="24" viewBox="0 0 24 24"><path d="M2.5 7.5C2 3.5 6 2 10 3.2C13 4 15 2.5 18 3C21.5 3.8 22 7.5 20.8 10.5C19.5 13 16.5 12.8 13.5 11.5C10.5 10.2 8 12.5 5.5 12.5C3.5 12.5 2.8 10.5 2.5 7.5Z" fill="#a8a8a8" stroke="#555" stroke-width="1" transform=""/><path d="M2 20C2 16 5 13.5 8 14C9.5 16 8 21 5 22C3 22.5 2 21.5 2 20Z" fill="#8fca8f" stroke="#505050" stroke-width=".9"/><rect x="13" y="14" width="10" height="10" rx="1.6" fill="#e05050" stroke="#b01c1c" stroke-width=".6"/><path d="M15.5 16.5L20.5 21.5M20.5 16.5L15.5 21.5" stroke="#fff" stroke-width="1.6"/></svg>
<svg class="a" style="left:378px;top:135px" width="24" height="24" viewBox="0 0 24 24"><path d="M2.5 8C2 4 6 2.5 10 3.7C13 4.5 15 3 18 3.5C21.5 4.3 22 8 20.8 11C19.5 13.5 16.5 13.3 13.5 12C10.5 10.7 8 13 5.5 13C3.5 13 2.8 11 2.5 8Z" fill="#8fca8f" stroke="#505050" stroke-width="1"/><path d="M3 12.5L11 10.8L8 16L5 18Z" fill="#f4e02a" stroke="#555" stroke-width=".7"/></svg>
<svg class="a" style="left:416px;top:135px" width="24" height="24" viewBox="0 0 24 24"><path d="M2 9C1.5 4 6 2 11 3.5C14 4.5 16 2.5 19 3C23 3.8 23.5 8.5 22 12C20.5 15 17 15 14 13.5C10.5 12 8 14.5 5 14.5C3 14.5 2.2 12 2 9Z" fill="#f0e39a" stroke="#999" stroke-width=".8"/><path d="M4.5 8.5C4.5 6 8 5 11 6C13.5 7 15.5 5.5 18 5.8C20.5 6.3 20.5 9 19.5 10.5C18 12 16 11.5 13.5 10.5C10.5 9.5 8 11.5 6 11.5C5 11.5 4.5 10 4.5 8.5Z" fill="#c9e6c9"/></svg>
<svg class="a" style="left:453px;top:135px" width="24" height="24" viewBox="0 0 24 24"><path d="M2 8C2 3 7 2 11 3.5V12C8 13 5.5 13.5 4 12.5C2.5 11.5 2 10 2 8Z" fill="#8fca8f" stroke="#505050" stroke-width=".9"/><path d="M13 3.5C16 2 21 3 21.5 7C22 10.5 19.5 13 16 13L13 12Z" fill="#8fca8f" stroke="#505050" stroke-width=".9"/><path d="M12 1V14M9.5 16L11.5 11M14.5 16L12.5 11" stroke="#777" stroke-width="1"/><ellipse cx="9" cy="19.5" rx="1.6" ry="3" fill="none" stroke="#c4161c" stroke-width="1.5"/><ellipse cx="15" cy="19.5" rx="1.6" ry="3" fill="none" stroke="#c4161c" stroke-width="1.5"/></svg>
<svg class="a" style="left:492px;top:135px" width="24" height="24" viewBox="0 0 24 24"><path d="M1.5 6C1.5 2 7 1.5 12 3C17 1.5 22.5 2 22.5 6C22.5 11 19 14 16 14C14 14 12.5 12 12 11C11.5 12 10 14 8 14C5 14 1.5 11 1.5 6Z" fill="#8fca8f" stroke="#505050" stroke-width=".9"/><path d="M10 4h4.5M10 6.5h4.5M10 9h4.5M11.5 12C10 14 14 15 12 17C10 19 13 20 12.5 22.5" fill="none" stroke="#333" stroke-width=".9"/></svg>
<svg class="a" style="left:530px;top:135px" width="24" height="24" viewBox="0 0 24 24"><path d="M9 10L17 1.5L21 4.5L13 13Z" fill="#888" stroke="#555" stroke-width=".6"/><path d="M9 10L10 15L13 13" fill="#aaa" stroke="#555" stroke-width=".6"/><rect x="1.5" y="18" width="20" height="5.5" fill="#6f9ec8" stroke="#2f5580" stroke-width=".8"/><path d="M11.5 14.5L13.5 18.5L11.5 20.5L9.5 18.5Z" fill="#f4e02a" stroke="#555" stroke-width=".4"/></svg>
<svg class="a" style="left:568px;top:135px" width="24" height="24" viewBox="0 0 24 24"><path d="M18.5 8.5A8 8 0 1 0 15.5 20" fill="none" stroke="#7fa6e0" stroke-width="2.4"/><path d="M21.5 6.5L18.5 12L14.5 8.5Z" fill="#7fa6e0"/></svg>
<svg class="a" style="left:806px;top:78px" width="8" height="6" viewBox="0 0 8 6"><path d="M0 0h8l-4 5z" fill="#444"/></svg>
<svg class="a" style="left:858px;top:78px" width="8" height="6" viewBox="0 0 8 6"><path d="M0 0h8l-4 5z" fill="#444"/></svg>
<svg class="a" style="left:1059px;top:78px" width="8" height="6" viewBox="0 0 8 6"><path d="M0 0h8l-4 5z" fill="#444"/></svg>
<svg class="a" style="left:1224px;top:78px" width="8" height="6" viewBox="0 0 8 6"><path d="M0 0h8l-4 5z" fill="#444"/></svg>
<svg class="a" style="left:93px;top:114px" width="8" height="6" viewBox="0 0 8 6"><path d="M0 0h8l-4 5z" fill="#444"/></svg>
<div class="a" style="left:57px;top:165px;width:48px;height:1012px;border-left:1px solid #f5f5f5;border-right:1px solid #b3b3b3;background:linear-gradient(to right,#ececec,#cbcbcb)"></div>
<svg class="a" style="left:67px;top:171px" width="32" height="8" viewBox="0 0 32 8"><rect x="0.6" y="0.6" width="1.8" height="1.8" fill="#a9a9a9"/><rect x="3.5000000000000004" y="3.6" width="1.8" height="1.8" fill="#a9a9a9"/><rect x="6.3999999999999995" y="0.6" width="1.8" height="1.8" fill="#a9a9a9"/><rect x="9.299999999999999" y="3.6" width="1.8" height="1.8" fill="#a9a9a9"/><rect x="12.2" y="0.6" width="1.8" height="1.8" fill="#a9a9a9"/><rect x="15.1" y="3.6" width="1.8" height="1.8" fill="#a9a9a9"/><rect x="18.0" y="0.6" width="1.8" height="1.8" fill="#a9a9a9"/><rect x="20.900000000000002" y="3.6" width="1.8" height="1.8" fill="#a9a9a9"/><rect x="23.8" y="0.6" width="1.8" height="1.8" fill="#a9a9a9"/><rect x="26.7" y="3.6" width="1.8" height="1.8" fill="#a9a9a9"/><rect x="29.6" y="0.6" width="1.8" height="1.8" fill="#a9a9a9"/><rect x="32.5" y="3.6" width="1.8" height="1.8" fill="#a9a9a9"/><rect x="35.4" y="0.6" width="1.8" height="1.8" fill="#a9a9a9"/><rect x="38.3" y="3.6" width="1.8" height="1.8" fill="#a9a9a9"/></svg>
<svg class="a" style="left:68px;top:181px" width="26" height="26" viewBox="0 0 26 26"><path d="M4 5L10 19L15 5L21 5" fill="none" stroke="#2f5580" stroke-width="1.3"/><circle cx="4" cy="4.5" r="2.2" fill="#fff" stroke="#2f5580" stroke-width="1.1"/><circle cx="15" cy="4.5" r="2.2" fill="#fff" stroke="#2f5580" stroke-width="1.1"/><circle cx="21" cy="4.5" r="2.2" fill="#fff" stroke="#2f5580" stroke-width="1.1"/><circle cx="10" cy="19" r="2.2" fill="#fff" stroke="#2f5580" stroke-width="1.1"/>
<rect x="15" y="15" width="10" height="10" rx="2" fill="#5b9a60" stroke="#4a7f4e" stroke-width=".5"/><path d="M20 17V23M17 20H23" stroke="#fff" stroke-width="1.8"/>
</svg>
<svg class="a" style="left:68px;top:219px" width="26" height="26" viewBox="0 0 26 26"><rect x="1" y="-1.5" width="20" height="20" fill="#7aa2d2"/><path d="M1 -1.5h6.7v6.7H1zM14.3 -1.5H21v6.7h-6.7zM7.7 5.2h6.6v6.6H7.7zM1 11.8h6.7v6.7H1z" fill="#1f3656"/><path d="M14.3 11.8H21v6.7h-6.7z" fill="#7aa2d2"/>
<rect x="15" y="15" width="10" height="10" rx="2" fill="#5b9a60" stroke="#4a7f4e" stroke-width=".5"/><path d="M20 17V23M17 20H23" stroke="#fff" stroke-width="1.8"/>
</svg>
<svg class="a" style="left:68px;top:256px" width="26" height="26" viewBox="0 0 26 26"><path d="M2 6C1 1.5 6 -0.5 10 1C13 -0.5 19 0 19.5 4.5C20 8 17.5 9 17 11C19 12 19 13.5 17 13.5C15.5 17 13 18.5 11 17.5C9.5 16.5 10 14 9.5 12C8 13 6.5 12.5 6.5 11C4 10.5 2.5 9 2 6Z" fill="#5b88c2" stroke="#1e3f66" stroke-width="1"/><path d="M9 3C8 6 8.5 9 11 11M14 4C13.5 7 14 9 16 10" fill="none" stroke="#1e3f66" stroke-width=".8"/>
<rect x="15" y="15" width="10" height="10" rx="2" fill="#5b9a60" stroke="#4a7f4e" stroke-width=".5"/><path d="M20 17V23M17 20H23" stroke="#fff" stroke-width="1.8"/>
</svg>
<svg class="a" style="left:68px;top:295px" width="26" height="26" viewBox="0 0 26 26"><path d="M1 23C3 15 10 4 23 1C22 8 16 16 6 19Z" fill="#8eb2e0" stroke="#2f5580" stroke-width="1"/><path d="M1.5 22.5L21 3M6 16L9 18M9 12L13 14M13 8L17 10" stroke="#2f5580" stroke-width=".7"/>
<rect x="15" y="15" width="10" height="10" rx="2" fill="#5b9a60" stroke="#4a7f4e" stroke-width=".5"/><path d="M20 17V23M17 20H23" stroke="#fff" stroke-width="1.8"/>
</svg>
<svg class="a" style="left:68px;top:333px" width="26" height="26" viewBox="0 0 26 26"><path d="M1 1C10 2 20 6 23.5 13C18 13 10 16 1 22C4 15 4 8 1 1Z" fill="#6f9ad0" stroke="#1e3f66" stroke-width="1"/><path d="M6 3C8 8 8 14 6 19M11 5C13 9 13 14 11 17M16 8C17.5 11 17.5 13 16 15" fill="none" stroke="#1e3f66" stroke-width=".9"/>
<rect x="15" y="15" width="10" height="10" rx="2" fill="#5b9a60" stroke="#4a7f4e" stroke-width=".5"/><path d="M20 17V23M17 20H23" stroke="#fff" stroke-width="1.8"/>
</svg>
<svg class="a" style="left:68px;top:371px" width="26" height="26" viewBox="0 0 26 26"><circle cx="12" cy="10" r="10" fill="#bcd3ee" stroke="#5b88c0" stroke-width="1"/><path d="M2 10h20M12 0v20M4 4.5h16M4 15.5h16" stroke="#eef4fb" stroke-width=".8"/><path d="M6 5h3v3H6zM11 6h4v3h-4zM8 10h3v3H8zM14 11h3v4h-3z" fill="#3a5f90" opacity=".75"/>
<rect x="15" y="15" width="10" height="10" rx="2" fill="#5b9a60" stroke="#4a7f4e" stroke-width=".5"/><path d="M20 17V23M17 20H23" stroke="#fff" stroke-width="1.8"/>
</svg>
<svg class="a" style="left:68px;top:409px" width="26" height="26" viewBox="0 0 26 26"><circle cx="12" cy="10" r="10" fill="#2a4c7a" stroke="#1e3f66" stroke-width="1"/><path d="M2 10h20M12 0v20M3.5 5h17M3.5 15h17" stroke="#fff" stroke-width="1.2"/><path d="M8 1C5 6 5 14 8 19M16 1C19 6 19 14 16 19" fill="none" stroke="#fff" stroke-width="1"/>
<rect x="15" y="15" width="10" height="10" rx="2" fill="#5b9a60" stroke="#4a7f4e" stroke-width=".5"/><path d="M20 17V23M17 20H23" stroke="#fff" stroke-width="1.8"/>
</svg>
<svg class="a" style="left:68px;top:448px" width="26" height="26" viewBox="0 0 26 26"><circle cx="12" cy="10" r="10" fill="#cfe0f3" stroke="#5b88c0" stroke-width="1"/><path d="M2 10h20M12 0v20" stroke="#eef4fb" stroke-width=".8"/><path d="M6 5L10 15L14 5L18 5" fill="none" stroke="#2f5580" stroke-width="1.2"/><circle cx="6" cy="5" r="1.7" fill="#fff" stroke="#2f5580" stroke-width=".9"/><circle cx="14" cy="5" r="1.7" fill="#fff" stroke="#2f5580" stroke-width=".9"/><circle cx="18" cy="5" r="1.7" fill="#fff" stroke="#2f5580" stroke-width=".9"/><circle cx="10" cy="15" r="1.7" fill="#fff" stroke="#2f5580" stroke-width=".9"/>
<rect x="15" y="15" width="10" height="10" rx="2" fill="#5b9a60" stroke="#4a7f4e" stroke-width=".5"/><path d="M20 17V23M17 20H23" stroke="#fff" stroke-width="1.8"/>
</svg>
<svg class="a" style="left:68px;top:483px" width="26" height="26" viewBox="0 0 26 26"><path d="M10 4C13.5 4 15.5 6.5 14.5 11C13.5 15.5 10 19 6 21L5.3 19.8C8.5 17.8 10.5 15.3 10.8 13C8 13 6 11.2 6 8.5C6 5.8 7.8 4 10 4Z" fill="#2f5580"/>
<rect x="15" y="15" width="10" height="10" rx="2" fill="#5b9a60" stroke="#4a7f4e" stroke-width=".5"/><path d="M20 17V23M17 20H23" stroke="#fff" stroke-width="1.8"/>
</svg>
<svg class="a" style="left:68px;top:523px" width="26" height="26" viewBox="0 0 26 26"><path d="M3 5L9 19L14 5L20 5" fill="none" stroke="#2f5580" stroke-width="1.3"/><circle cx="3" cy="4.5" r="2.2" fill="#fff" stroke="#2f5580" stroke-width="1.1"/><circle cx="14" cy="4.5" r="2.2" fill="#fff" stroke="#2f5580" stroke-width="1.1"/><circle cx="20" cy="4.5" r="2.2" fill="#fff" stroke="#2f5580" stroke-width="1.1"/><circle cx="9" cy="19" r="2.2" fill="#fff" stroke="#2f5580" stroke-width="1.1"/>
<rect x="13" y="14" width="9" height="9" rx="1.5" fill="#d4a514"/><path d="M17.5 15.5V21.5M15 17L20 20M15 20L20 17" stroke="#fff" stroke-width="1"/>
</svg>
<svg class="a" style="left:68px;top:562px" width="26" height="26" viewBox="0 0 26 26"><rect x="2" y="2" width="17" height="17" fill="#f6f6f6" stroke="#7a7a7a" stroke-width="1"/>
<rect x="14" y="15" width="10" height="9" rx="2" fill="#dd3a3a"/><path d="M16 19.5h6" stroke="#fff" stroke-width="1.8"/>
</svg>
<svg class="a" style="left:91px;top:537px" width="8" height="6" viewBox="0 0 8 6"><path d="M0 0h8l-4 5z" fill="#444"/></svg>
<svg class="a" style="left:67px;top:598px" width="32" height="8" viewBox="0 0 32 8"><rect x="0.6" y="0.6" width="1.8" height="1.8" fill="#a9a9a9"/><rect x="3.5000000000000004" y="3.6" width="1.8" height="1.8" fill="#a9a9a9"/><rect x="6.3999999999999995" y="0.6" width="1.8" height="1.8" fill="#a9a9a9"/><rect x="9.299999999999999" y="3.6" width="1.8" height="1.8" fill="#a9a9a9"/><rect x="12.2" y="0.6" width="1.8" height="1.8" fill="#a9a9a9"/><rect x="15.1" y="3.6" width="1.8" height="1.8" fill="#a9a9a9"/><rect x="18.0" y="0.6" width="1.8" height="1.8" fill="#a9a9a9"/><rect x="20.900000000000002" y="3.6" width="1.8" height="1.8" fill="#a9a9a9"/><rect x="23.8" y="0.6" width="1.8" height="1.8" fill="#a9a9a9"/><rect x="26.7" y="3.6" width="1.8" height="1.8" fill="#a9a9a9"/><rect x="29.6" y="0.6" width="1.8" height="1.8" fill="#a9a9a9"/><rect x="32.5" y="3.6" width="1.8" height="1.8" fill="#a9a9a9"/><rect x="35.4" y="0.6" width="1.8" height="1.8" fill="#a9a9a9"/><rect x="38.3" y="3.6" width="1.8" height="1.8" fill="#a9a9a9"/></svg>
<div class="a" style="left:105px;top:165px;width:295px;height:1012px;background:#ececec"></div>
<div class="a" style="left:105px;top:165px;width:294px;height:27px;border-top:1px solid #f6f6f6;border-bottom:1px solid #8f8f8f;background:linear-gradient(#ebebeb,#cbcbcb)"></div>
<div class="a" style="left:108px;top:169px;width:15px;height:15px;border-radius:50%;background:#3f3f3f"></div>
<svg class="a" style="left:108px;top:169px" width="15" height="15"><path d="M4.6 4.6L10.4 10.4M10.4 4.6L4.6 10.4" stroke="#fff" stroke-width="2.2"/></svg>
<div class="a" style="left:128px;top:169px;width:15px;height:15px;border-radius:50%;background:#3f3f3f"></div>
<svg class="a" style="left:128px;top:169px" width="15" height="15"><rect x="6" y="4" width="5" height="4.5" fill="none" stroke="#fff" stroke-width="1.2"/><rect x="4" y="6.5" width="5" height="4.5" fill="#3f3f3f" stroke="#fff" stroke-width="1.2"/></svg>
<div class="a" style="left:105px;top:171px;width:294px;text-align:center;font-size:11.5px;line-height:14px;color:#111;padding-left:38px">Layers</div>
<div class="a" style="left:105px;top:192px;width:294px;height:964px;background:#fff;border-left:1px solid #b9b9b9;border-bottom:1px solid #a9a9a9"></div>
<div class="a" style="left:106px;top:1156px;width:292px;height:11px;background:#e3e3e3;border:1px solid #d0d0d0;border-top:none;border-radius:0 0 4px 4px"></div>
<div class="a" style="left:187px;top:1156px;width:61px;height:21px;border:1px solid #6a6a6a;border-right:none;border-radius:4px 0 0 4px;background:linear-gradient(#8a8a8a,#7a7a7a);color:#fff;font-size:13px;line-height:19px;text-align:center">Layers</div>
<div class="a" style="left:248px;top:1156px;width:70px;height:21px;border:1px solid #9a9a9a;border-radius:0 4px 4px 0;background:linear-gradient(#fefefe,#ececec);color:#000;font-size:13px;line-height:19px;text-align:center">Browser</div>
<div class="a" style="left:106px;top:386px;width:292px;height:21px;background:#3875d7"></div>
<svg class="a" style="left:113px;top:197px" width="8" height="10"><path d="M0 0v10l8-5z" fill="#8a8a8a"/></svg>
<div class="a" style="left:133px;top:196px;width:14px;height:14px;border:1px solid #4a4a4a;border-radius:3px;background:linear-gradient(#ffffff,#d3d8de)"></div>
<svg class="a" style="left:135px;top:192px" width="15" height="14" viewBox="0 0 15 14"><path d="M3 7.5L6.5 11L13.5 1" fill="none" stroke="#111" stroke-width="2.3" stroke-linecap="round"/></svg>
<svg class="a" style="left:160px;top:195px" width="18" height="17" viewBox="0 0 18 16"><circle cx="4" cy="10" r="1.2" fill="none" stroke="#777" stroke-width=".7"/><circle cx="6" cy="3.5" r="1.2" fill="none" stroke="#777" stroke-width=".7"/><circle cx="12.5" cy="1.5" r="1.2" fill="none" stroke="#777" stroke-width=".7"/></svg>
<div class="lay" style="top:194px">places</div>
<svg class="a" style="left:113px;top:217px" width="8" height="10"><path d="M0 0v10l8-5z" fill="#8a8a8a"/></svg>
<div class="a" style="left:133px;top:216px;width:14px;height:14px;border:1px solid #4a4a4a;border-radius:3px;background:linear-gradient(#ffffff,#d3d8de)"></div>
<svg class="a" style="left:135px;top:212px" width="15" height="14" viewBox="0 0 15 14"><path d="M3 7.5L6.5 11L13.5 1" fill="none" stroke="#111" stroke-width="2.3" stroke-linecap="round"/></svg>
<svg class="a" style="left:160px;top:215px" width="18" height="17" viewBox="0 0 18 16"><path d="M1 6C0 2 4 1 7 2.5C10 3.5 13 0.5 15.5 2.5C17 4 15.5 8 13.5 8.5C11 9 9 7 6 8.5C3.5 10 1.5 9 1 6Z" fill="#eee" stroke="#888" stroke-width=".8"/></svg>
<div class="lay" style="top:214px">buildings</div>
<svg class="a" style="left:113px;top:237px" width="8" height="10"><path d="M0 0v10l8-5z" fill="#8a8a8a"/></svg>
<div class="a" style="left:133px;top:236px;width:14px;height:14px;border:1px solid #4a4a4a;border-radius:3px;background:linear-gradient(#ffffff,#d3d8de)"></div>
<svg class="a" style="left:135px;top:232px" width="15" height="14" viewBox="0 0 15 14"><path d="M3 7.5L6.5 11L13.5 1" fill="none" stroke="#111" stroke-width="2.3" stroke-linecap="round"/></svg>
<svg class="a" style="left:160px;top:235px" width="18" height="17" viewBox="0 0 18 16"><path d="M1 2L5.5 12.5L9.5 3L15 1.5" fill="none" stroke="#777" stroke-width=".9"/><circle cx="15" cy="1.5" r="1" fill="#fff" stroke="#777" stroke-width=".6"/><circle cx="5.5" cy="12.5" r="1" fill="#fff" stroke="#777" stroke-width=".6"/></svg>
<div class="lay" style="top:234px">roads</div>
<svg class="a" style="left:113px;top:257px" width="8" height="10"><path d="M0 0v10l8-5z" fill="#8a8a8a"/></svg>
<div class="a" style="left:133px;top:256px;width:14px;height:14px;border:1px solid #4a4a4a;border-radius:3px;background:linear-gradient(#ffffff,#d3d8de)"></div>
<svg class="a" style="left:135px;top:252px" width="15" height="14" viewBox="0 0 15 14"><path d="M3 7.5L6.5 11L13.5 1" fill="none" stroke="#111" stroke-width="2.3" stroke-linecap="round"/></svg>
<svg class="a" style="left:160px;top:255px" width="18" height="17" viewBox="0 0 18 16"><path d="M1 6C0 2 4 1 7 2.5C10 3.5 13 0.5 15.5 2.5C17 4 15.5 8 13.5 8.5C11 9 9 7 6 8.5C3.5 10 1.5 9 1 6Z" fill="#eee" stroke="#888" stroke-width=".8"/></svg>
<div class="lay" style="top:254px">water</div>
<svg class="a" style="left:112px;top:278px" width="10" height="8"><path d="M0 0h10l-5 8z" fill="#8a8a8a"/></svg>
<div class="a" style="left:133px;top:276px;width:14px;height:14px;border:1px solid #4a4a4a;border-radius:3px;background:linear-gradient(#ffffff,#d3d8de)"></div>
<svg class="a" style="left:135px;top:272px" width="15" height="14" viewBox="0 0 15 14"><path d="M3 7.5L6.5 11L13.5 1" fill="none" stroke="#111" stroke-width="2.3" stroke-linecap="round"/></svg>
<svg class="a" style="left:160px;top:275px" width="18" height="17" viewBox="0 0 18 16"><path d="M1 2L5.5 12.5L9.5 3L15 1.5" fill="none" stroke="#777" stroke-width=".9"/><circle cx="15" cy="1.5" r="1" fill="#fff" stroke="#777" stroke-width=".6"/><circle cx="5.5" cy="12.5" r="1" fill="#fff" stroke="#777" stroke-width=".6"/></svg>
<div class="lay" style="top:274px">routes</div>
<svg class="a" style="left:113px;top:351px" width="8" height="10"><path d="M0 0v10l8-5z" fill="#8a8a8a"/></svg>
<div class="a" style="left:133px;top:350px;width:14px;height:14px;border:1px solid #4a4a4a;border-radius:3px;background:linear-gradient(#ffffff,#d3d8de)"></div>
<svg class="a" style="left:135px;top:346px" width="15" height="14" viewBox="0 0 15 14"><path d="M3 7.5L6.5 11L13.5 1" fill="none" stroke="#111" stroke-width="2.3" stroke-linecap="round"/></svg>
<svg class="a" style="left:160px;top:349px" width="18" height="17" viewBox="0 0 18 16"><path d="M1 2L5.5 12.5L9.5 3L15 1.5" fill="none" stroke="#777" stroke-width=".9"/><circle cx="15" cy="1.5" r="1" fill="#fff" stroke="#777" stroke-width=".6"/><circle cx="5.5" cy="12.5" r="1" fill="#fff" stroke="#777" stroke-width=".6"/></svg>
<div class="lay" style="top:348px">rivers</div>
<svg class="a" style="left:113px;top:371px" width="8" height="10"><path d="M0 0v10l8-5z" fill="#8a8a8a"/></svg>
<div class="a" style="left:133px;top:370px;width:14px;height:14px;border:1px solid #4a4a4a;border-radius:3px;background:linear-gradient(#ffffff,#d3d8de)"></div>
<svg class="a" style="left:135px;top:366px" width="15" height="14" viewBox="0 0 15 14"><path d="M3 7.5L6.5 11L13.5 1" fill="none" stroke="#111" stroke-width="2.3" stroke-linecap="round"/></svg>
<svg class="a" style="left:160px;top:369px" width="18" height="17" viewBox="0 0 18 16"><path d="M1 6C0 2 4 1 7 2.5C10 3.5 13 0.5 15.5 2.5C17 4 15.5 8 13.5 8.5C11 9 9 7 6 8.5C3.5 10 1.5 9 1 6Z" fill="#eee" stroke="#888" stroke-width=".8"/></svg>
<div class="lay" style="top:368px">school_property</div>
<svg class="a" style="left:113px;top:392px" width="8" height="10"><path d="M0 0v10l8-5z" fill="#9a9a9a"/></svg>
<div class="a" style="left:133px;top:391px;width:14px;height:14px;border:1px solid #4a4a4a;border-radius:3px;background:linear-gradient(#ffffff,#d3d8de)"></div>
<svg class="a" style="left:135px;top:387px" width="15" height="14" viewBox="0 0 15 14"><path d="M3 7.5L6.5 11L13.5 1" fill="none" stroke="#111" stroke-width="2.3" stroke-linecap="round"/></svg>
<svg class="a" style="left:160px;top:390px" width="18" height="17" viewBox="0 0 18 16"><path d="M4 12L11.5 1L14.5 3L7 14Z" fill="#d8d070" stroke="#8a8040" stroke-width=".6"/><path d="M4 12L3 16L7 14Z" fill="#ddd" stroke="#777" stroke-width=".5"/></svg>
<div class="lay" style="left:186px;top:389px;color:#fff;text-decoration:underline">landuse</div>
<div class="a" style="left:133px;top:412px;width:14px;height:14px;border:1px solid #4a4a4a;border-radius:3px;background:linear-gradient(#ffffff,#d3d8de)"></div>
<svg class="a" style="left:160px;top:411px" width="18" height="17" viewBox="0 0 18 16"><g transform="translate(0,-1)"><rect x="0" y="0" width="16" height="16" fill="#cfcfcf"/><path d="M0 0h5.3v5.3H0zM10.7 0H16v5.3h-5.3zM5.3 5.3h5.4v5.4H5.3zM0 10.7h5.3V16H0zM5.3 10.7h5.4V16H5.3z" fill="#8f8f8f"/></g></svg>
<div class="lay" style="top:410px">3420C_2010_327_RGB_LATLNG</div>
<div class="a" style="left:151px;top:300px;width:16px;height:1.5px;background:#eba44a"></div>
<div class="a" style="left:151px;top:318px;width:3px;height:3px;background:#e3d29a"></div><div class="a" style="left:159px;top:318px;width:4px;height:3px;background:#e3d29a"></div>
<div class="a" style="left:151px;top:336px;width:11px;height:3px;background:#dccb8e"></div>
<div class="a" style="left:399px;top:165px;width:1578px;height:1012px;background:#8e8e8e"></div>
<svg class="a" style="left:400px;top:166px" width="1577" height="1010" viewBox="400 166 1577 1010">
<defs><pattern id="hatch" width="3" height="3" patternUnits="userSpaceOnUse"><rect width="3" height="3" fill="#6f9ef0"/><path d="M0 1.5H3M1.5 0V3" stroke="#d9e6ff" stroke-width="0.6"/></pattern></defs>
<rect x="400" y="166" width="1577" height="1010" fill="#fff"/>
<polygon points="1573.0,168.0 1600.0,174.0 1649.0,195.0 1686.0,211.0 1743.0,205.0 1756.0,225.0 1793.0,238.0 1788.0,254.0 1793.0,268.0 1784.0,281.0 1780.0,309.0 1760.0,305.0 1747.0,322.0 1690.0,334.0 1650.0,330.0 1610.0,330.0 1608.0,273.0 1610.0,242.0 1581.0,248.0 1552.0,227.0 1542.0,213.0 1546.0,195.0 1558.0,178.0" fill="#dcf6cc"/>
<polygon points="1604.0,268.0 1651.0,268.0 1651.0,388.0 1600.0,382.0" fill="#dcf6cc"/>
<polygon points="1546.0,313.0 1604.0,309.0 1601.0,383.0 1562.0,391.0 1548.0,383.0 1536.0,393.0 1511.0,381.0 1481.0,363.0 1466.0,346.0 1470.0,340.0 1536.0,354.0 1540.0,322.0" fill="#dcf6cc"/>
<polygon points="1583.0,412.0 1593.0,402.0 1651.0,408.0 1678.0,402.0 1702.0,350.0 1698.0,336.0 1690.0,334.0 1668.0,391.0 1651.0,396.0 1600.0,396.0" fill="#dcf6cc"/>
<polygon points="1583.0,412.0 1600.0,402.0 1651.0,406.0 1651.0,417.0 1600.0,413.0 1593.0,424.0" fill="#dcf6cc"/>
<polygon points="1747.0,322.0 1784.0,334.0 1756.0,420.0 1751.0,350.0" fill="#dcf6cc"/>
<polygon points="765.4,573.7 782.5,578.8 768.9,635.1 744.9,638.6 741.5,626.6" fill="#dcf6cc"/>
<polygon points="1004.7,511.9 1029.2,514.4 1027.5,525.8 1004.7,524.2" fill="#dcf6cc"/>
<polygon points="980.8,358.2 993.2,344.2 1007.2,353.6 996.3,363.7 987.0,363.7" fill="#dcf6cc"/>
<polygon points="1098.2,534.9 1198.8,557.5 1260.3,594.6 1290.7,618.4 1268.7,628.8 1242.1,612.7 1190.4,661.7 1178.5,654.7 1204.4,629.5" fill="#dcf6cc"/>
<polygon points="888.9,445.1 954.2,427.9 983.5,427.9 996.6,432.8 1012.0,467.1 1006.3,483.4 986.8,486.6 957.4,475.2 947.6,496.4 957.4,540.5 970.5,551.9 963.9,566.6 941.1,574.7 941.9,589.4 910.1,601.6 893.8,595.9 872.6,595.9 864.5,586.1 879.1,561.7 890.6,533.9 877.5,511.1 873.4,485.0 875.1,458.9" fill="#e0ecf0"/>
<polygon points="859.3,283.1 907.7,271.0 957.5,256.5 973.0,241.7 1008.7,246.4 1014.9,258.8 1053.8,230.9 1072.4,240.2 1115.1,269.7 1091.8,290.7 1069.3,276.7 1032.8,308.5 1066.2,341.9 1042.9,362.9 970.7,383.8 938.8,401.7 907.8,419.7 869.1,437.4 807.4,514.9 789.8,504.3 823.3,458.5 758.1,500.1 728.1,509.6 729.9,504.3 796.8,409.2 796.7,399.2 801.8,385.1 795.7,364.9 796.7,338.6 833.0,302.3" fill="#93bfb7"/>
<clipPath id="cteal"><polygon points="859.3,283.1 907.7,271.0 957.5,256.5 973.0,241.7 1008.7,246.4 1014.9,258.8 1053.8,230.9 1072.4,240.2 1115.1,269.7 1091.8,290.7 1069.3,276.7 1032.8,308.5 1066.2,341.9 1042.9,362.9 970.7,383.8 938.8,401.7 907.8,419.7 869.1,437.4 807.4,514.9 789.8,504.3 823.3,458.5 758.1,500.1 728.1,509.6 729.9,504.3 796.8,409.2 796.7,399.2 801.8,385.1 795.7,364.9 796.7,338.6 833.0,302.3"/></clipPath>
<clipPath id="crail"><polygon points="888.9,445.1 954.2,427.9 983.5,427.9 996.6,432.8 1012.0,467.1 1006.3,483.4 986.8,486.6 957.4,475.2 947.6,496.4 957.4,540.5 970.5,551.9 963.9,566.6 941.1,574.7 941.9,589.4 910.1,601.6 893.8,595.9 872.6,595.9 864.5,586.1 879.1,561.7 890.6,533.9 877.5,511.1 873.4,485.0 875.1,458.9"/></clipPath>
<g clip-path="url(#cteal)"><path d="M892.3 26.6L946.6 72.1 M948.4 73.6L986.5 105.6 M1042.7 152.8L1096.5 197.9 M1101.7 202.3L1117.1 215.2 M1122.1 219.4L1147.9 241.1 M1174.6 263.5L1233.1 312.5 M883.0 37.7L909.0 59.6 M910.5 60.8L947.0 91.4 M947.1 91.5L1001.0 136.7 M1005.4 140.4L1029.3 160.4 M1035.2 165.4L1056.1 182.9 M1061.0 187.1L1109.0 227.4 M1112.0 229.8L1165.4 274.7 M1167.5 276.5L1209.8 312.0 M1215.7 316.9L1254.2 349.2 M1254.5 349.4L1280.9 371.6 M875.6 46.5L923.2 86.5 M925.8 88.7L961.3 118.5 M966.7 123.0L1006.0 155.9 M1030.9 176.8L1091.4 227.6 M1094.1 229.9L1117.2 249.3 M1124.0 255.0L1174.7 297.5 M1180.7 302.5L1206.7 324.3 M1213.2 329.8L1255.1 365.0 M865.7 58.4L881.3 71.5 M886.9 76.2L943.0 123.2 M948.5 127.9L987.7 160.8 M990.6 163.2L1008.5 178.3 M1012.5 181.6L1037.0 202.1 M1040.3 204.9L1072.0 231.5 M1075.8 234.7L1119.7 271.6 M1122.9 274.2L1139.5 288.1 M1140.7 289.2L1182.9 324.6 M1188.4 329.2L1240.4 372.8 M875.5 85.8L925.5 127.8 M926.3 128.4L970.3 165.4 M970.8 165.8L993.5 184.8 M994.6 185.7L1022.5 209.1 M1025.6 211.7L1055.7 237.0 M1055.9 237.2L1089.0 264.9 M1090.3 266.0L1110.6 283.1 M1114.1 286.0L1139.1 306.9 M1215.2 370.8L1261.7 409.8 M845.2 82.8L884.2 115.6 M888.7 119.3L922.2 147.4 M970.8 188.2L1030.6 238.4 M1032.7 240.2L1087.5 286.1 M1094.0 291.6L1143.5 333.1 M1145.2 334.6L1160.9 347.7 M1161.2 348.0L1214.2 392.4 M1218.1 395.7L1241.3 415.2 M836.4 93.3L869.1 120.7 M870.5 121.9L916.8 160.8 M918.1 161.9L938.2 178.8 M940.3 180.5L978.6 212.6 M1042.6 266.4L1073.0 291.9 M1114.0 326.3L1167.8 371.4 M1170.2 373.4L1226.0 420.3 M938.5 199.5L981.5 235.5 M984.0 237.7L1014.9 263.6 M1020.9 268.7L1064.0 304.8 M1070.1 309.9L1091.7 328.0 M1115.5 348.0L1167.0 391.2 M1169.4 393.2L1213.0 429.8 M817.3 116.0L836.4 132.0 M842.5 137.2L883.8 171.8 M887.0 174.4L915.0 198.0 M920.7 202.8L936.6 216.1 M937.3 216.6L957.9 233.9 M958.1 234.2L984.5 256.3 M1065.5 324.2L1098.2 351.7 M1104.4 356.9L1133.3 381.1 M1136.6 383.9L1156.5 400.6 M1156.8 400.8L1172.6 414.1 M1174.6 415.8L1217.4 451.7 M808.8 126.2L868.7 176.5 M869.4 177.1L894.6 198.3 M901.4 203.9L941.7 237.7 M946.2 241.5L973.5 264.4 M1004.2 290.2L1064.7 340.9 M1069.2 344.7L1114.1 382.4 M1116.8 384.6L1146.2 409.3 M1148.4 411.2L1202.6 456.7 M801.8 134.5L843.7 169.7 M845.4 171.2L861.6 184.8 M903.3 219.8L947.8 257.1 M953.3 261.7L991.3 293.6 M992.4 294.5L1030.7 326.7 M1095.6 381.1L1156.1 431.9 M1158.3 433.8L1178.6 450.7 M793.1 144.9L814.9 163.2 M815.1 163.4L845.0 188.4 M850.5 193.1L907.5 240.9 M962.7 287.2L985.3 306.2 M1023.4 338.2L1075.9 382.2 M1079.6 385.3L1134.1 431.0 M1136.8 433.3L1167.7 459.2 M1167.9 459.4L1212.9 497.2 M811.1 171.0L864.6 215.8 M867.3 218.2L910.8 254.6 M910.9 254.7L950.5 287.9 M955.0 291.7L990.4 321.4 M995.5 325.7L1021.7 347.7 M1025.0 350.5L1050.7 372.0 M1054.6 375.3L1111.6 423.1 M1159.0 462.9L1197.8 495.5 M776.5 164.7L806.1 189.5 M812.0 194.4L844.4 221.6 M849.5 225.9L892.1 261.7 M898.3 266.9L957.8 316.8 M1044.6 389.6L1092.9 430.1 M1096.4 433.1L1119.3 452.3 M1119.6 452.6L1180.0 503.3 M833.5 228.2L887.5 273.6 M892.4 277.6L928.1 307.6 M934.8 313.2L967.7 340.9 M970.7 343.4L993.6 362.6 M994.5 363.3L1051.6 411.2 M1052.4 411.9L1095.3 447.9 M1096.1 448.6L1125.0 472.9 M762.9 180.9L806.0 217.1 M807.5 218.3L835.9 242.1 M837.8 243.7L880.0 279.2 M884.7 283.1L936.4 326.5 M943.1 332.1L983.5 366.0 M989.4 370.9L1040.1 413.5 M1076.7 444.2L1097.4 461.6 M1101.2 464.7L1160.8 514.8 M756.1 188.9L797.7 223.9 M801.2 226.8L832.9 253.4 M832.9 253.4L868.6 283.3 M870.7 285.1L904.4 313.4 M909.1 317.3L947.0 349.2 M976.2 373.7L1019.1 409.6 M1024.8 414.4L1063.6 446.9 M1066.8 449.6L1120.4 494.7 M1125.6 499.0L1186.3 549.9 M781.4 229.0L816.3 258.3 M822.2 263.2L864.4 298.6 M870.6 303.8L920.3 345.6 M925.4 349.9L970.2 387.4 M974.5 391.1L1008.6 419.6 M1012.9 423.3L1071.3 472.3 M1077.2 477.2L1127.8 519.6 M739.5 208.8L787.4 248.9 M791.1 252.1L813.4 270.8 M857.1 307.4L906.6 349.0 M958.1 392.2L1016.9 441.5 M1019.7 443.8L1066.6 483.3 M1068.1 484.5L1092.9 505.3 M1094.8 506.9L1113.6 522.6 M784.4 264.2L832.6 304.6 M834.4 306.1L877.8 342.5 M881.6 345.8L904.9 365.3 M910.8 370.3L941.3 395.8 M948.0 401.4L995.8 441.5 M996.0 441.7L1052.6 489.3 M1054.8 491.1L1090.0 520.6 M1095.4 525.1L1119.4 545.3 M720.2 231.7L777.5 279.8 M781.7 283.3L809.0 306.3 M810.0 307.1L831.7 325.3 M834.1 327.4L884.0 369.2 M889.0 373.3L937.3 413.9 M938.0 414.5L971.6 442.7 M1056.7 514.1L1104.4 554.1 M769.9 291.5L789.6 308.1 M827.3 339.7L880.3 384.2 M884.3 387.5L909.4 408.6 M911.6 410.5L954.3 446.2 M961.1 452.0L978.6 466.6 M984.5 471.6L1014.5 496.8 M1018.5 500.1L1076.0 548.4 M753.7 290.3L775.0 308.2 M914.9 425.6L959.6 463.0 M964.3 467.0L1018.5 512.5 M1021.2 514.7L1065.5 551.9 M695.6 261.0L738.8 297.2 M742.4 300.3L760.5 315.5 M763.3 317.8L787.8 338.4 M790.7 340.8L836.5 379.2 M841.6 383.5L890.1 424.2 M958.4 481.5L1013.0 527.3 M1013.3 527.6L1032.8 544.0 M1036.1 546.7L1068.4 573.8 M1068.7 574.1L1108.4 607.4 M746.0 321.8L765.4 338.2 M766.0 338.7L782.9 352.9 M823.2 386.6L875.6 430.6 M877.7 432.4L912.5 461.6 M916.4 464.8L946.9 490.4 M952.3 494.9L1011.5 544.7 M1012.3 545.3L1057.6 583.3 M676.5 283.8L724.1 323.7 M730.3 328.9L783.8 373.8 M784.9 374.7L817.2 401.9 M817.9 402.4L849.1 428.6 M849.4 428.9L902.2 473.1 M904.3 475.0L933.4 499.3 M935.6 501.2L985.3 542.9 M989.0 546.0L1011.1 564.6 M1050.5 597.6L1087.9 629.0 M665.9 296.5L723.7 345.1 M729.2 349.7L750.7 367.7 M754.7 371.1L815.7 422.2 M820.5 426.3L870.1 467.9 M876.6 473.4L921.5 511.0 M924.7 513.7L985.1 564.4 M986.2 565.3L1008.4 583.9 M658.2 305.7L678.0 322.4 M679.9 323.9L700.1 340.9 M744.5 378.1L798.9 423.8 M857.6 473.0L911.9 518.5 M913.8 520.2L970.1 567.4 M976.1 572.4L1032.4 619.7 M647.0 319.0L699.0 362.6 M704.6 367.3L765.8 418.7 M767.2 419.9L816.8 461.5 M820.4 464.5L858.1 496.1 M864.2 501.2L916.1 544.8 M916.4 545.0L970.8 590.7 M972.1 591.8L1001.2 616.2 M1001.2 616.2L1022.1 633.7 M637.2 330.7L677.5 364.5 M681.3 367.7L720.7 400.8 M726.4 405.5L785.5 455.2 M789.9 458.8L819.3 483.5 M822.8 486.5L865.1 521.9 M871.8 527.6L894.6 546.7 M901.5 552.5L950.6 593.7 M953.2 595.9L987.0 624.2 M993.2 629.4L1039.3 668.1 M628.5 341.0L665.2 371.8 M667.7 373.9L717.5 415.7 M794.1 480.0L821.4 502.9 M825.5 506.3L854.0 530.2 M855.8 531.7L894.7 564.4 M899.5 568.4L934.7 598.0 M938.1 600.8L986.3 641.2 M618.2 353.3L634.7 367.2 M638.0 369.9L697.1 419.5 M760.0 472.3L821.1 523.5 M824.8 526.6L856.0 552.9 M862.7 558.5L882.8 575.3 M933.7 618.0L961.8 641.6 M967.3 646.2L1022.0 692.2 M610.9 362.0L657.0 400.6 M723.3 456.3L743.5 473.2 M749.7 478.5L774.3 499.1 M777.1 501.5L833.3 548.6 M835.3 550.3L873.2 582.1 M877.0 585.3L902.2 606.4 M949.0 645.7L994.5 683.9 M602.8 371.6L638.4 401.4 M644.2 406.3L670.0 428.0 M710.5 461.9L751.6 496.4 M758.2 502.0L798.0 535.4 M799.0 536.2L833.4 565.1 M868.3 594.4L905.3 625.4 M909.4 628.9L933.1 648.7 M593.1 383.3L645.7 427.4 M647.9 429.2L685.9 461.1 M686.8 461.9L708.5 480.1 M709.2 480.7L749.2 514.3 M753.1 517.5L799.9 556.8 M801.3 558.0L842.7 592.7 M908.4 647.8L955.0 686.9 M957.3 688.9L1000.3 724.9 M586.4 391.2L613.3 413.7 M640.2 436.3L660.2 453.1 M680.7 470.2L714.3 498.5 M718.7 502.2L745.2 524.4 M747.1 526.0L786.1 558.7 M792.6 564.2L824.1 590.6 M828.6 594.3L882.6 639.7 M888.6 644.7L922.6 673.2 M926.9 676.8L966.4 710.0 M576.3 403.3L620.7 440.5 M661.2 474.6L696.5 504.2 M698.2 505.6L726.0 528.9 M765.7 562.2L811.1 600.3 M814.9 603.5L869.0 648.9 M873.7 652.8L890.4 666.9 M895.1 670.8L917.6 689.7 M630.4 268.1L671.1 242.7 M676.7 239.1L698.1 225.8 M738.3 200.7L762.8 185.3 M771.3 180.1L816.1 152.1 M840.0 137.1L867.2 120.2 M870.4 118.1L913.1 91.5 M939.4 75.0L954.5 65.6 M590.9 306.0L634.1 279.0 M640.8 274.8L663.9 260.4 M672.0 255.3L688.1 245.2 M694.2 241.4L721.2 224.6 M725.3 222.0L769.2 194.5 M776.3 190.1L799.3 175.7 M807.0 170.9L834.0 154.1 M841.8 149.2L878.3 126.3 M880.2 125.2L902.2 111.4 M954.7 78.7L976.1 65.2 M982.1 61.5L1010.7 43.6 M595.8 313.8L613.5 302.7 M661.3 272.9L698.0 250.0 M770.0 205.0L784.1 196.2 M817.9 175.0L843.5 159.1 M872.9 140.7L886.1 132.5 M966.6 82.1L1002.0 60.0 M641.7 298.0L653.0 291.0 M659.5 286.9L696.6 263.7 M703.0 259.7L744.7 233.7 M748.7 231.2L767.1 219.7 M769.7 218.0L783.6 209.3 M791.1 204.7L805.9 195.4 M846.3 170.1L865.9 157.9 M869.5 155.6L880.3 148.9 M895.1 139.6L908.8 131.1 M913.1 128.4L959.2 99.6 M967.6 94.4L986.2 82.7 M988.4 81.4L1020.1 61.5 M606.9 331.7L632.5 315.7 M632.6 315.7L644.1 308.5 M701.1 272.9L730.2 254.7 M774.1 227.2L819.4 198.9 M823.1 196.6L851.9 178.6 M852.4 178.3L877.8 162.5 M879.3 161.5L892.9 153.0 M896.0 151.1L925.1 132.9 M930.3 129.6L951.0 116.7 M954.2 114.7L965.1 107.9 M965.9 107.4L987.3 94.0 M993.0 90.5L1003.7 83.8 M611.4 338.8L635.2 323.9 M678.4 296.9L702.8 281.7 M734.8 261.7L747.9 253.5 M753.4 250.1L798.5 221.8 M798.8 221.7L833.0 200.3 M839.1 196.5L867.4 178.8 M915.1 149.0L942.7 131.8 M949.5 127.5L993.7 99.9 M996.2 98.4L1014.8 86.7 M1017.0 85.3L1042.8 69.2 M618.3 349.9L632.0 341.4 M640.4 336.1L656.0 326.4 M656.5 326.0L669.9 317.7 M714.6 289.8L733.2 278.1 M739.0 274.5L765.1 258.1 M766.1 257.6L796.0 238.9 M802.4 234.9L816.1 226.3 M822.2 222.5L841.7 210.3 M845.6 207.9L881.4 185.5 M889.9 180.2L928.6 156.0 M1007.8 106.5L1035.6 89.2 M624.9 360.4L652.3 343.2 M655.1 341.5L692.4 318.1 M745.4 285.0L770.3 269.5 M815.8 241.0L851.9 218.5 M905.4 185.1L942.2 162.1 M757.4 288.0L798.1 262.6 M804.5 258.6L832.4 241.2 M835.2 239.4L855.2 226.9 M855.4 226.8L868.5 218.6 M869.9 217.7L907.5 194.2 M910.9 192.1L945.7 170.4 M998.6 137.3L1029.1 118.3 M1032.2 116.3L1062.0 97.7 M636.4 378.9L670.3 357.7 M725.3 323.3L746.6 310.0 M753.4 305.8L787.4 284.5 M794.5 280.1L808.1 271.6 M811.4 269.5L840.9 251.1 M847.7 246.9L880.8 226.2 M964.0 174.2L988.0 159.2 M990.7 157.5L1003.7 149.3 M1039.0 127.3L1082.8 99.9 M658.6 380.1L693.5 358.3 M742.6 327.6L775.8 306.9 M782.8 302.5L805.5 288.3 M813.3 283.4L841.8 265.6 M849.9 260.6L887.1 237.3 M894.5 232.7L938.8 205.0 M947.1 199.8L967.9 186.8 M973.6 183.3L997.2 168.5 M998.7 167.6L1043.8 139.4 M647.1 396.0L670.1 381.6 M677.9 376.8L720.2 350.3 M790.8 306.2L806.4 296.4 M829.7 281.9L849.0 269.8 M875.8 253.0L908.3 232.8 M950.8 206.2L992.0 180.4 M998.6 176.3L1013.7 166.9 M1020.8 162.4L1043.3 148.4 M1048.5 145.1L1073.1 129.8 M653.8 406.8L675.6 393.2 M680.6 390.0L712.3 370.3 M720.6 365.0L766.9 336.1 M770.7 333.7L795.9 318.0 M796.3 317.8L810.4 308.9 M811.5 308.2L855.9 280.5 M863.6 275.7L876.6 267.6 M919.0 241.1L932.6 232.6 M938.1 229.2L950.1 221.7 M952.1 220.4L979.8 203.1 M1011.2 183.5L1054.9 156.2 M1059.3 153.4L1094.3 131.5 M689.9 394.3L722.8 373.7 M730.5 368.9L766.8 346.2 M833.9 304.3L854.9 291.2 M858.5 288.9L883.2 273.5 M890.1 269.2L920.8 250.0 M923.2 248.5L961.3 224.7 M963.2 223.5L999.1 201.1 M1004.6 197.6L1015.9 190.5 M1017.6 189.5L1034.9 178.7 M1040.4 175.3L1073.4 154.7 M663.7 422.5L702.0 398.5 M742.7 373.1L756.9 364.3 M761.5 361.4L778.5 350.8 M786.8 345.6L829.7 318.7 M832.2 317.2L850.0 306.1 M855.9 302.3L876.2 289.7 M881.1 286.7L906.3 270.9 M912.4 267.1L939.2 250.3 M983.7 222.5L1001.7 211.3 M1006.3 208.4L1030.8 193.1 M1038.6 188.2L1056.1 177.3 M1062.0 173.6L1100.8 149.3 M693.2 417.5L710.4 406.7 M788.6 357.9L822.8 336.5 M885.6 297.3L903.0 286.4 M905.7 284.7L925.2 272.5 M928.1 270.7L954.3 254.3 M961.4 249.9L972.2 243.1 M973.3 242.4L989.0 232.6 M992.2 230.6L1004.7 222.8 M1012.5 218.0L1046.2 196.9 M677.5 444.7L695.1 433.7 M702.5 429.0L734.3 409.2 M797.7 369.6L822.1 354.3 M830.4 349.2L854.8 333.9 M969.4 262.3L994.2 246.8 M995.0 246.3L1023.8 228.3 M1030.4 224.1L1061.8 204.5 M682.5 452.7L716.3 431.6 M782.1 390.5L816.4 369.0 M824.4 364.0L847.5 349.6 M894.3 320.4L917.7 305.7 M923.1 302.4L962.6 277.7 M1061.7 215.8L1108.3 186.6 M686.8 459.4L719.2 439.2 M762.1 412.4L793.9 392.5 M861.7 350.2L904.5 323.4 M912.2 318.6L926.4 309.7 M945.7 297.6L970.7 282.0 M1011.4 256.6L1040.8 238.2 M1048.5 233.4L1063.3 224.1 M1067.2 221.7L1091.0 206.8 M1095.9 203.8L1124.9 185.7 M733.0 447.0L747.8 437.7 M748.0 437.6L783.9 415.1 M824.0 390.1L851.1 373.1 M853.4 371.7L871.6 360.4 M879.7 355.3L919.8 330.2 M920.0 330.1L941.2 316.8 M949.5 311.7L979.6 292.8 M985.4 289.2L1004.6 277.2 M1007.7 275.3L1048.8 249.6 M1054.4 246.1L1084.9 227.1 M1088.8 224.6L1133.7 196.6 M699.9 480.5L737.3 457.1 M745.5 452.0L759.9 443.0 M765.2 439.7L792.0 423.0 M800.2 417.9L824.6 402.6 M831.1 398.5L866.6 376.3 M901.9 354.3L935.8 333.1 M940.0 330.5L986.2 301.6 M989.7 299.4L1033.1 272.3 M1036.5 270.2L1070.3 249.1 M1077.9 244.3L1112.5 222.7 M703.3 485.9L717.6 476.9 M720.7 475.0L752.9 454.8 M754.4 453.9L795.0 428.5 M795.7 428.1L827.7 408.1 M862.1 386.6L873.4 379.6 M879.4 375.8L891.5 368.2 M895.5 365.7L938.4 338.9 M945.9 334.3L979.3 313.3 M1016.3 290.2L1056.7 265.0 M709.6 496.0L728.6 484.1 M734.7 480.3L753.1 468.8 M755.1 467.5L796.8 441.5 M801.1 438.8L817.2 428.8 M846.2 410.6L881.9 388.3 M889.1 383.8L921.7 363.4 M922.8 362.7L940.7 351.6 M940.7 351.6L953.9 343.3 M955.6 342.3L972.5 331.7 M979.6 327.2L990.2 320.7 M992.7 319.0L1023.7 299.7 M1076.7 266.6L1119.0 240.2 M748.5 481.2L777.9 462.8 M780.3 461.3L791.5 454.3 M851.1 417.1L873.6 403.0 M874.9 402.2L893.4 390.7 M898.8 387.3L938.3 362.6 M945.5 358.1L961.3 348.2 M982.6 334.9L1011.2 317.0 M1019.5 311.8L1064.4 283.8 M1067.4 281.9L1112.4 253.8 M721.0 514.3L762.6 488.3 M763.8 487.6L800.9 464.4 M834.8 443.2L867.8 422.6 M868.8 421.9L908.9 396.9 M955.5 367.8L986.3 348.5 M990.8 345.7L1004.3 337.3 M1067.7 297.6L1092.9 281.9 M1099.9 277.5L1122.3 263.5 M725.6 521.6L760.7 499.6 M804.7 472.2L834.6 453.5 M835.3 453.0L875.9 427.7 M877.4 426.7L911.7 405.3 M917.7 401.5L947.5 382.9 M951.7 380.3L970.6 368.5 M991.0 355.7L1015.5 340.4 M1021.9 336.4L1041.5 324.2 M1070.9 305.8L1115.1 278.2 M757.2 519.1L781.2 504.1 M804.7 489.4L823.4 477.8 M830.3 473.5L851.7 460.1 M855.8 457.5L896.7 432.0 M905.1 426.7L921.5 416.4 M924.0 414.9L955.2 395.4 M982.1 378.6L1026.1 351.1 M1030.0 348.7L1043.4 340.3 M1047.7 337.6L1075.0 320.5 M1076.4 319.7L1094.5 308.3 M1100.7 304.5L1146.8 275.7 M826.9 488.8L863.9 465.7 M909.4 437.3L952.3 410.4 M954.9 408.8L1001.4 379.8 M1008.1 375.6L1051.0 348.8 M1055.9 345.7L1096.1 320.6 M1118.8 306.4L1151.6 285.9 M744.2 551.4L761.5 540.6 M764.0 539.0L809.1 510.9 M833.0 495.9L878.7 467.3 M999.1 392.1L1020.0 379.0 M1021.5 378.1L1060.5 353.8 M1067.5 349.4L1113.0 320.9 M1113.2 320.8L1136.7 306.1 M1142.2 302.7L1180.1 279.0 M782.3 541.7L800.0 530.6 M807.1 526.2L845.4 502.3 M857.0 495.0L888.6 475.3 M896.2 470.5L910.2 461.7 M915.9 458.2L950.1 436.8 M952.1 435.6L994.6 409.0 M1053.8 372.1L1088.3 350.5 M1141.0 317.6L1172.4 297.9 M824.4 530.2L837.6 521.9 M883.0 493.6L928.2 465.3 M954.1 449.1L988.3 427.8 M991.3 425.9L1036.6 397.6 M1045.0 392.3L1070.7 376.3 M1071.6 375.7L1101.3 357.2 M1140.1 332.9L1172.4 312.7 M760.8 578.0L794.8 556.8 M796.5 555.7L819.0 541.7 M820.2 540.9L851.8 521.1 M854.6 519.4L864.8 513.0 M886.3 499.6L930.6 471.9 M974.1 444.8L988.3 435.8 M993.4 432.7L1026.4 412.1 M1077.8 379.9L1121.5 352.6 M1122.2 352.2L1158.4 329.6 M1162.9 326.7L1182.9 314.3 M822.0 553.5L856.0 532.3 M859.9 529.8L893.6 508.8 M900.7 504.3L946.3 475.8 M949.1 474.1L961.9 466.1 M964.2 464.6L1002.1 441.0 M1003.5 440.1L1020.8 429.3 M1027.9 424.8L1069.2 399.0 M1071.5 397.6L1104.4 377.0 M1146.4 350.8L1172.7 334.3 M1178.3 330.9L1200.1 317.2 M773.3 597.9L807.8 576.3 M815.2 571.7L854.9 546.9 M907.6 514.0L937.0 495.6 M938.0 494.9L958.7 482.0 M966.2 477.3L1012.3 448.5 M1066.0 415.0L1107.8 388.8 M1110.2 387.4L1145.9 365.0 M1149.6 362.8L1186.4 339.7 M780.1 608.9L799.6 596.7 M801.1 595.8L829.5 578.0 M830.2 577.6L856.1 561.4 M950.6 502.4L979.8 484.1 M1036.3 448.8L1065.7 430.4 M785.8 618.0L818.2 597.8 M821.6 595.7L867.3 567.1 M890.3 552.8L935.3 524.6 M1004.1 481.6L1032.0 464.2 M1038.0 460.4L1069.9 440.5 M1104.3 419.0L1144.1 394.2 M1150.2 390.4L1185.1 368.5 M792.4 628.5L836.1 601.1 M839.7 598.9L872.2 578.6 M874.6 577.1L912.5 553.4 M930.9 541.9L949.0 530.6 M949.7 530.1L992.5 503.4 M1028.6 480.8L1049.7 467.7 M1056.7 463.3L1076.2 451.1 M1124.0 421.2L1153.1 403.0 M1157.8 400.1L1183.8 383.9 M1187.1 381.8L1233.6 352.8 M836.3 612.9L862.9 596.2 M865.2 594.8L908.8 567.6 M908.9 567.5L937.3 549.8 M992.2 515.5L1002.7 508.9 M1004.9 507.5L1016.0 500.6 M1024.3 495.4L1058.4 474.1 M1061.8 472.0L1081.0 460.0 M1087.9 455.7L1107.8 443.2 M1110.1 441.8L1130.0 429.4 M1147.6 418.3L1178.6 399.0 M1184.5 395.3L1227.1 368.7 M801.4 642.9L815.9 633.9 M818.2 632.4L864.3 603.6 M870.0 600.1L895.5 584.1 M927.3 564.2L967.3 539.3 M973.2 535.5L1013.1 510.6 M1016.7 508.4L1035.6 496.6 M1039.8 494.0L1059.9 481.4 M1067.3 476.8L1113.3 448.0 M1136.7 433.4L1180.4 406.1 M1202.6 392.2L1225.3 378.0 M807.3 652.3L820.2 644.2 M824.7 641.4L847.2 627.3 M854.4 622.8L872.9 611.2 M877.1 608.6L904.7 591.4 M911.3 587.2L933.8 573.2 M937.7 570.7L948.9 563.7 M953.4 560.9L970.3 550.4 M1005.6 528.3L1025.8 515.7 M1073.3 486.0L1108.8 463.8 M1113.3 461.0L1154.6 435.2 M1159.5 432.1L1185.5 415.9 M1192.3 411.7L1227.1 389.9 M847.4 636.9L884.1 614.0 M930.3 585.1L960.6 566.1 M964.0 564.0L996.0 544.0 M1003.3 539.4L1025.3 525.7 M1030.6 522.4L1065.8 500.4 M1138.1 455.2L1164.8 438.5 M1217.1 405.8L1242.7 389.9 M817.5 668.7L832.7 659.2 M903.0 615.2L940.7 591.7 M1019.7 542.3L1038.7 530.4 M1042.4 528.1L1057.6 518.6 M1057.6 518.6L1086.0 500.8 M1094.5 495.5L1139.7 467.3 M1166.3 450.7L1201.4 428.8 M1201.7 428.6L1226.7 412.9 M1230.0 410.9L1268.0 387.2 M824.0 679.0L862.9 654.7 M871.2 649.5L908.3 626.3 M915.4 621.9L947.9 601.6 M953.0 598.4L990.6 574.9 M994.5 572.5L1033.4 548.2 M1039.6 544.3L1083.2 517.1 M1129.4 488.2L1141.3 480.8 M1229.6 425.6L1245.2 415.8 M827.3 684.4L845.1 673.2 M858.1 665.1L894.9 642.1 M927.8 621.5L946.8 609.7 M955.2 604.4L974.2 592.6 M977.9 590.3L1007.5 571.7 M1049.6 545.5L1068.5 533.7 M1072.5 531.1L1104.4 511.2 M1105.4 510.6L1129.5 495.5 M1133.5 493.0L1152.5 481.1 M1160.7 476.0L1194.4 455.0 M1195.7 454.1L1223.4 436.9 M1226.1 435.2L1252.2 418.9 M833.6 694.4L877.4 667.0 M971.9 607.9L995.2 593.4 M1190.1 471.6L1221.5 452.0 M1223.6 450.7L1260.1 427.9 M874.3 682.5L895.6 669.2 M897.4 668.1L910.2 660.0 M914.9 657.1L949.6 635.4 M952.7 633.5L990.6 609.8 M991.8 609.1L1023.3 589.4 M1084.0 551.4L1108.8 535.9 M1109.9 535.3L1138.8 517.2 M1213.4 470.6L1251.9 446.5" stroke="#f6e394" stroke-width="3.2" fill="none"/><path d="M892.3 26.6L946.6 72.1 M948.4 73.6L986.5 105.6 M1042.7 152.8L1096.5 197.9 M1101.7 202.3L1117.1 215.2 M1122.1 219.4L1147.9 241.1 M1174.6 263.5L1233.1 312.5 M883.0 37.7L909.0 59.6 M910.5 60.8L947.0 91.4 M947.1 91.5L1001.0 136.7 M1005.4 140.4L1029.3 160.4 M1035.2 165.4L1056.1 182.9 M1061.0 187.1L1109.0 227.4 M1112.0 229.8L1165.4 274.7 M1167.5 276.5L1209.8 312.0 M1215.7 316.9L1254.2 349.2 M1254.5 349.4L1280.9 371.6 M875.6 46.5L923.2 86.5 M925.8 88.7L961.3 118.5 M966.7 123.0L1006.0 155.9 M1030.9 176.8L1091.4 227.6 M1094.1 229.9L1117.2 249.3 M1124.0 255.0L1174.7 297.5 M1180.7 302.5L1206.7 324.3 M1213.2 329.8L1255.1 365.0 M865.7 58.4L881.3 71.5 M886.9 76.2L943.0 123.2 M948.5 127.9L987.7 160.8 M990.6 163.2L1008.5 178.3 M1012.5 181.6L1037.0 202.1 M1040.3 204.9L1072.0 231.5 M1075.8 234.7L1119.7 271.6 M1122.9 274.2L1139.5 288.1 M1140.7 289.2L1182.9 324.6 M1188.4 329.2L1240.4 372.8 M875.5 85.8L925.5 127.8 M926.3 128.4L970.3 165.4 M970.8 165.8L993.5 184.8 M994.6 185.7L1022.5 209.1 M1025.6 211.7L1055.7 237.0 M1055.9 237.2L1089.0 264.9 M1090.3 266.0L1110.6 283.1 M1114.1 286.0L1139.1 306.9 M1215.2 370.8L1261.7 409.8 M845.2 82.8L884.2 115.6 M888.7 119.3L922.2 147.4 M970.8 188.2L1030.6 238.4 M1032.7 240.2L1087.5 286.1 M1094.0 291.6L1143.5 333.1 M1145.2 334.6L1160.9 347.7 M1161.2 348.0L1214.2 392.4 M1218.1 395.7L1241.3 415.2 M836.4 93.3L869.1 120.7 M870.5 121.9L916.8 160.8 M918.1 161.9L938.2 178.8 M940.3 180.5L978.6 212.6 M1042.6 266.4L1073.0 291.9 M1114.0 326.3L1167.8 371.4 M1170.2 373.4L1226.0 420.3 M938.5 199.5L981.5 235.5 M984.0 237.7L1014.9 263.6 M1020.9 268.7L1064.0 304.8 M1070.1 309.9L1091.7 328.0 M1115.5 348.0L1167.0 391.2 M1169.4 393.2L1213.0 429.8 M817.3 116.0L836.4 132.0 M842.5 137.2L883.8 171.8 M887.0 174.4L915.0 198.0 M920.7 202.8L936.6 216.1 M937.3 216.6L957.9 233.9 M958.1 234.2L984.5 256.3 M1065.5 324.2L1098.2 351.7 M1104.4 356.9L1133.3 381.1 M1136.6 383.9L1156.5 400.6 M1156.8 400.8L1172.6 414.1 M1174.6 415.8L1217.4 451.7 M808.8 126.2L868.7 176.5 M869.4 177.1L894.6 198.3 M901.4 203.9L941.7 237.7 M946.2 241.5L973.5 264.4 M1004.2 290.2L1064.7 340.9 M1069.2 344.7L1114.1 382.4 M1116.8 384.6L1146.2 409.3 M1148.4 411.2L1202.6 456.7 M801.8 134.5L843.7 169.7 M845.4 171.2L861.6 184.8 M903.3 219.8L947.8 257.1 M953.3 261.7L991.3 293.6 M992.4 294.5L1030.7 326.7 M1095.6 381.1L1156.1 431.9 M1158.3 433.8L1178.6 450.7 M793.1 144.9L814.9 163.2 M815.1 163.4L845.0 188.4 M850.5 193.1L907.5 240.9 M962.7 287.2L985.3 306.2 M1023.4 338.2L1075.9 382.2 M1079.6 385.3L1134.1 431.0 M1136.8 433.3L1167.7 459.2 M1167.9 459.4L1212.9 497.2 M811.1 171.0L864.6 215.8 M867.3 218.2L910.8 254.6 M910.9 254.7L950.5 287.9 M955.0 291.7L990.4 321.4 M995.5 325.7L1021.7 347.7 M1025.0 350.5L1050.7 372.0 M1054.6 375.3L1111.6 423.1 M1159.0 462.9L1197.8 495.5 M776.5 164.7L806.1 189.5 M812.0 194.4L844.4 221.6 M849.5 225.9L892.1 261.7 M898.3 266.9L957.8 316.8 M1044.6 389.6L1092.9 430.1 M1096.4 433.1L1119.3 452.3 M1119.6 452.6L1180.0 503.3 M833.5 228.2L887.5 273.6 M892.4 277.6L928.1 307.6 M934.8 313.2L967.7 340.9 M970.7 343.4L993.6 362.6 M994.5 363.3L1051.6 411.2 M1052.4 411.9L1095.3 447.9 M1096.1 448.6L1125.0 472.9 M762.9 180.9L806.0 217.1 M807.5 218.3L835.9 242.1 M837.8 243.7L880.0 279.2 M884.7 283.1L936.4 326.5 M943.1 332.1L983.5 366.0 M989.4 370.9L1040.1 413.5 M1076.7 444.2L1097.4 461.6 M1101.2 464.7L1160.8 514.8 M756.1 188.9L797.7 223.9 M801.2 226.8L832.9 253.4 M832.9 253.4L868.6 283.3 M870.7 285.1L904.4 313.4 M909.1 317.3L947.0 349.2 M976.2 373.7L1019.1 409.6 M1024.8 414.4L1063.6 446.9 M1066.8 449.6L1120.4 494.7 M1125.6 499.0L1186.3 549.9 M781.4 229.0L816.3 258.3 M822.2 263.2L864.4 298.6 M870.6 303.8L920.3 345.6 M925.4 349.9L970.2 387.4 M974.5 391.1L1008.6 419.6 M1012.9 423.3L1071.3 472.3 M1077.2 477.2L1127.8 519.6 M739.5 208.8L787.4 248.9 M791.1 252.1L813.4 270.8 M857.1 307.4L906.6 349.0 M958.1 392.2L1016.9 441.5 M1019.7 443.8L1066.6 483.3 M1068.1 484.5L1092.9 505.3 M1094.8 506.9L1113.6 522.6 M784.4 264.2L832.6 304.6 M834.4 306.1L877.8 342.5 M881.6 345.8L904.9 365.3 M910.8 370.3L941.3 395.8 M948.0 401.4L995.8 441.5 M996.0 441.7L1052.6 489.3 M1054.8 491.1L1090.0 520.6 M1095.4 525.1L1119.4 545.3 M720.2 231.7L777.5 279.8 M781.7 283.3L809.0 306.3 M810.0 307.1L831.7 325.3 M834.1 327.4L884.0 369.2 M889.0 373.3L937.3 413.9 M938.0 414.5L971.6 442.7 M1056.7 514.1L1104.4 554.1 M769.9 291.5L789.6 308.1 M827.3 339.7L880.3 384.2 M884.3 387.5L909.4 408.6 M911.6 410.5L954.3 446.2 M961.1 452.0L978.6 466.6 M984.5 471.6L1014.5 496.8 M1018.5 500.1L1076.0 548.4 M753.7 290.3L775.0 308.2 M914.9 425.6L959.6 463.0 M964.3 467.0L1018.5 512.5 M1021.2 514.7L1065.5 551.9 M695.6 261.0L738.8 297.2 M742.4 300.3L760.5 315.5 M763.3 317.8L787.8 338.4 M790.7 340.8L836.5 379.2 M841.6 383.5L890.1 424.2 M958.4 481.5L1013.0 527.3 M1013.3 527.6L1032.8 544.0 M1036.1 546.7L1068.4 573.8 M1068.7 574.1L1108.4 607.4 M746.0 321.8L765.4 338.2 M766.0 338.7L782.9 352.9 M823.2 386.6L875.6 430.6 M877.7 432.4L912.5 461.6 M916.4 464.8L946.9 490.4 M952.3 494.9L1011.5 544.7 M1012.3 545.3L1057.6 583.3 M676.5 283.8L724.1 323.7 M730.3 328.9L783.8 373.8 M784.9 374.7L817.2 401.9 M817.9 402.4L849.1 428.6 M849.4 428.9L902.2 473.1 M904.3 475.0L933.4 499.3 M935.6 501.2L985.3 542.9 M989.0 546.0L1011.1 564.6 M1050.5 597.6L1087.9 629.0 M665.9 296.5L723.7 345.1 M729.2 349.7L750.7 367.7 M754.7 371.1L815.7 422.2 M820.5 426.3L870.1 467.9 M876.6 473.4L921.5 511.0 M924.7 513.7L985.1 564.4 M986.2 565.3L1008.4 583.9 M658.2 305.7L678.0 322.4 M679.9 323.9L700.1 340.9 M744.5 378.1L798.9 423.8 M857.6 473.0L911.9 518.5 M913.8 520.2L970.1 567.4 M976.1 572.4L1032.4 619.7 M647.0 319.0L699.0 362.6 M704.6 367.3L765.8 418.7 M767.2 419.9L816.8 461.5 M820.4 464.5L858.1 496.1 M864.2 501.2L916.1 544.8 M916.4 545.0L970.8 590.7 M972.1 591.8L1001.2 616.2 M1001.2 616.2L1022.1 633.7 M637.2 330.7L677.5 364.5 M681.3 367.7L720.7 400.8 M726.4 405.5L785.5 455.2 M789.9 458.8L819.3 483.5 M822.8 486.5L865.1 521.9 M871.8 527.6L894.6 546.7 M901.5 552.5L950.6 593.7 M953.2 595.9L987.0 624.2 M993.2 629.4L1039.3 668.1 M628.5 341.0L665.2 371.8 M667.7 373.9L717.5 415.7 M794.1 480.0L821.4 502.9 M825.5 506.3L854.0 530.2 M855.8 531.7L894.7 564.4 M899.5 568.4L934.7 598.0 M938.1 600.8L986.3 641.2 M618.2 353.3L634.7 367.2 M638.0 369.9L697.1 419.5 M760.0 472.3L821.1 523.5 M824.8 526.6L856.0 552.9 M862.7 558.5L882.8 575.3 M933.7 618.0L961.8 641.6 M967.3 646.2L1022.0 692.2 M610.9 362.0L657.0 400.6 M723.3 456.3L743.5 473.2 M749.7 478.5L774.3 499.1 M777.1 501.5L833.3 548.6 M835.3 550.3L873.2 582.1 M877.0 585.3L902.2 606.4 M949.0 645.7L994.5 683.9 M602.8 371.6L638.4 401.4 M644.2 406.3L670.0 428.0 M710.5 461.9L751.6 496.4 M758.2 502.0L798.0 535.4 M799.0 536.2L833.4 565.1 M868.3 594.4L905.3 625.4 M909.4 628.9L933.1 648.7 M593.1 383.3L645.7 427.4 M647.9 429.2L685.9 461.1 M686.8 461.9L708.5 480.1 M709.2 480.7L749.2 514.3 M753.1 517.5L799.9 556.8 M801.3 558.0L842.7 592.7 M908.4 647.8L955.0 686.9 M957.3 688.9L1000.3 724.9 M586.4 391.2L613.3 413.7 M640.2 436.3L660.2 453.1 M680.7 470.2L714.3 498.5 M718.7 502.2L745.2 524.4 M747.1 526.0L786.1 558.7 M792.6 564.2L824.1 590.6 M828.6 594.3L882.6 639.7 M888.6 644.7L922.6 673.2 M926.9 676.8L966.4 710.0 M576.3 403.3L620.7 440.5 M661.2 474.6L696.5 504.2 M698.2 505.6L726.0 528.9 M765.7 562.2L811.1 600.3 M814.9 603.5L869.0 648.9 M873.7 652.8L890.4 666.9 M895.1 670.8L917.6 689.7 M630.4 268.1L671.1 242.7 M676.7 239.1L698.1 225.8 M738.3 200.7L762.8 185.3 M771.3 180.1L816.1 152.1 M840.0 137.1L867.2 120.2 M870.4 118.1L913.1 91.5 M939.4 75.0L954.5 65.6 M590.9 306.0L634.1 279.0 M640.8 274.8L663.9 260.4 M672.0 255.3L688.1 245.2 M694.2 241.4L721.2 224.6 M725.3 222.0L769.2 194.5 M776.3 190.1L799.3 175.7 M807.0 170.9L834.0 154.1 M841.8 149.2L878.3 126.3 M880.2 125.2L902.2 111.4 M954.7 78.7L976.1 65.2 M982.1 61.5L1010.7 43.6 M595.8 313.8L613.5 302.7 M661.3 272.9L698.0 250.0 M770.0 205.0L784.1 196.2 M817.9 175.0L843.5 159.1 M872.9 140.7L886.1 132.5 M966.6 82.1L1002.0 60.0 M641.7 298.0L653.0 291.0 M659.5 286.9L696.6 263.7 M703.0 259.7L744.7 233.7 M748.7 231.2L767.1 219.7 M769.7 218.0L783.6 209.3 M791.1 204.7L805.9 195.4 M846.3 170.1L865.9 157.9 M869.5 155.6L880.3 148.9 M895.1 139.6L908.8 131.1 M913.1 128.4L959.2 99.6 M967.6 94.4L986.2 82.7 M988.4 81.4L1020.1 61.5 M606.9 331.7L632.5 315.7 M632.6 315.7L644.1 308.5 M701.1 272.9L730.2 254.7 M774.1 227.2L819.4 198.9 M823.1 196.6L851.9 178.6 M852.4 178.3L877.8 162.5 M879.3 161.5L892.9 153.0 M896.0 151.1L925.1 132.9 M930.3 129.6L951.0 116.7 M954.2 114.7L965.1 107.9 M965.9 107.4L987.3 94.0 M993.0 90.5L1003.7 83.8 M611.4 338.8L635.2 323.9 M678.4 296.9L702.8 281.7 M734.8 261.7L747.9 253.5 M753.4 250.1L798.5 221.8 M798.8 221.7L833.0 200.3 M839.1 196.5L867.4 178.8 M915.1 149.0L942.7 131.8 M949.5 127.5L993.7 99.9 M996.2 98.4L1014.8 86.7 M1017.0 85.3L1042.8 69.2 M618.3 349.9L632.0 341.4 M640.4 336.1L656.0 326.4 M656.5 326.0L669.9 317.7 M714.6 289.8L733.2 278.1 M739.0 274.5L765.1 258.1 M766.1 257.6L796.0 238.9 M802.4 234.9L816.1 226.3 M822.2 222.5L841.7 210.3 M845.6 207.9L881.4 185.5 M889.9 180.2L928.6 156.0 M1007.8 106.5L1035.6 89.2 M624.9 360.4L652.3 343.2 M655.1 341.5L692.4 318.1 M745.4 285.0L770.3 269.5 M815.8 241.0L851.9 218.5 M905.4 185.1L942.2 162.1 M757.4 288.0L798.1 262.6 M804.5 258.6L832.4 241.2 M835.2 239.4L855.2 226.9 M855.4 226.8L868.5 218.6 M869.9 217.7L907.5 194.2 M910.9 192.1L945.7 170.4 M998.6 137.3L1029.1 118.3 M1032.2 116.3L1062.0 97.7 M636.4 378.9L670.3 357.7 M725.3 323.3L746.6 310.0 M753.4 305.8L787.4 284.5 M794.5 280.1L808.1 271.6 M811.4 269.5L840.9 251.1 M847.7 246.9L880.8 226.2 M964.0 174.2L988.0 159.2 M990.7 157.5L1003.7 149.3 M1039.0 127.3L1082.8 99.9 M658.6 380.1L693.5 358.3 M742.6 327.6L775.8 306.9 M782.8 302.5L805.5 288.3 M813.3 283.4L841.8 265.6 M849.9 260.6L887.1 237.3 M894.5 232.7L938.8 205.0 M947.1 199.8L967.9 186.8 M973.6 183.3L997.2 168.5 M998.7 167.6L1043.8 139.4 M647.1 396.0L670.1 381.6 M677.9 376.8L720.2 350.3 M790.8 306.2L806.4 296.4 M829.7 281.9L849.0 269.8 M875.8 253.0L908.3 232.8 M950.8 206.2L992.0 180.4 M998.6 176.3L1013.7 166.9 M1020.8 162.4L1043.3 148.4 M1048.5 145.1L1073.1 129.8 M653.8 406.8L675.6 393.2 M680.6 390.0L712.3 370.3 M720.6 365.0L766.9 336.1 M770.7 333.7L795.9 318.0 M796.3 317.8L810.4 308.9 M811.5 308.2L855.9 280.5 M863.6 275.7L876.6 267.6 M919.0 241.1L932.6 232.6 M938.1 229.2L950.1 221.7 M952.1 220.4L979.8 203.1 M1011.2 183.5L1054.9 156.2 M1059.3 153.4L1094.3 131.5 M689.9 394.3L722.8 373.7 M730.5 368.9L766.8 346.2 M833.9 304.3L854.9 291.2 M858.5 288.9L883.2 273.5 M890.1 269.2L920.8 250.0 M923.2 248.5L961.3 224.7 M963.2 223.5L999.1 201.1 M1004.6 197.6L1015.9 190.5 M1017.6 189.5L1034.9 178.7 M1040.4 175.3L1073.4 154.7 M663.7 422.5L702.0 398.5 M742.7 373.1L756.9 364.3 M761.5 361.4L778.5 350.8 M786.8 345.6L829.7 318.7 M832.2 317.2L850.0 306.1 M855.9 302.3L876.2 289.7 M881.1 286.7L906.3 270.9 M912.4 267.1L939.2 250.3 M983.7 222.5L1001.7 211.3 M1006.3 208.4L1030.8 193.1 M1038.6 188.2L1056.1 177.3 M1062.0 173.6L1100.8 149.3 M693.2 417.5L710.4 406.7 M788.6 357.9L822.8 336.5 M885.6 297.3L903.0 286.4 M905.7 284.7L925.2 272.5 M928.1 270.7L954.3 254.3 M961.4 249.9L972.2 243.1 M973.3 242.4L989.0 232.6 M992.2 230.6L1004.7 222.8 M1012.5 218.0L1046.2 196.9 M677.5 444.7L695.1 433.7 M702.5 429.0L734.3 409.2 M797.7 369.6L822.1 354.3 M830.4 349.2L854.8 333.9 M969.4 262.3L994.2 246.8 M995.0 246.3L1023.8 228.3 M1030.4 224.1L1061.8 204.5 M682.5 452.7L716.3 431.6 M782.1 390.5L816.4 369.0 M824.4 364.0L847.5 349.6 M894.3 320.4L917.7 305.7 M923.1 302.4L962.6 277.7 M1061.7 215.8L1108.3 186.6 M686.8 459.4L719.2 439.2 M762.1 412.4L793.9 392.5 M861.7 350.2L904.5 323.4 M912.2 318.6L926.4 309.7 M945.7 297.6L970.7 282.0 M1011.4 256.6L1040.8 238.2 M1048.5 233.4L1063.3 224.1 M1067.2 221.7L1091.0 206.8 M1095.9 203.8L1124.9 185.7 M733.0 447.0L747.8 437.7 M748.0 437.6L783.9 415.1 M824.0 390.1L851.1 373.1 M853.4 371.7L871.6 360.4 M879.7 355.3L919.8 330.2 M920.0 330.1L941.2 316.8 M949.5 311.7L979.6 292.8 M985.4 289.2L1004.6 277.2 M1007.7 275.3L1048.8 249.6 M1054.4 246.1L1084.9 227.1 M1088.8 224.6L1133.7 196.6 M699.9 480.5L737.3 457.1 M745.5 452.0L759.9 443.0 M765.2 439.7L792.0 423.0 M800.2 417.9L824.6 402.6 M831.1 398.5L866.6 376.3 M901.9 354.3L935.8 333.1 M940.0 330.5L986.2 301.6 M989.7 299.4L1033.1 272.3 M1036.5 270.2L1070.3 249.1 M1077.9 244.3L1112.5 222.7 M703.3 485.9L717.6 476.9 M720.7 475.0L752.9 454.8 M754.4 453.9L795.0 428.5 M795.7 428.1L827.7 408.1 M862.1 386.6L873.4 379.6 M879.4 375.8L891.5 368.2 M895.5 365.7L938.4 338.9 M945.9 334.3L979.3 313.3 M1016.3 290.2L1056.7 265.0 M709.6 496.0L728.6 484.1 M734.7 480.3L753.1 468.8 M755.1 467.5L796.8 441.5 M801.1 438.8L817.2 428.8 M846.2 410.6L881.9 388.3 M889.1 383.8L921.7 363.4 M922.8 362.7L940.7 351.6 M940.7 351.6L953.9 343.3 M955.6 342.3L972.5 331.7 M979.6 327.2L990.2 320.7 M992.7 319.0L1023.7 299.7 M1076.7 266.6L1119.0 240.2 M748.5 481.2L777.9 462.8 M780.3 461.3L791.5 454.3 M851.1 417.1L873.6 403.0 M874.9 402.2L893.4 390.7 M898.8 387.3L938.3 362.6 M945.5 358.1L961.3 348.2 M982.6 334.9L1011.2 317.0 M1019.5 311.8L1064.4 283.8 M1067.4 281.9L1112.4 253.8 M721.0 514.3L762.6 488.3 M763.8 487.6L800.9 464.4 M834.8 443.2L867.8 422.6 M868.8 421.9L908.9 396.9 M955.5 367.8L986.3 348.5 M990.8 345.7L1004.3 337.3 M1067.7 297.6L1092.9 281.9 M1099.9 277.5L1122.3 263.5 M725.6 521.6L760.7 499.6 M804.7 472.2L834.6 453.5 M835.3 453.0L875.9 427.7 M877.4 426.7L911.7 405.3 M917.7 401.5L947.5 382.9 M951.7 380.3L970.6 368.5 M991.0 355.7L1015.5 340.4 M1021.9 336.4L1041.5 324.2 M1070.9 305.8L1115.1 278.2 M757.2 519.1L781.2 504.1 M804.7 489.4L823.4 477.8 M830.3 473.5L851.7 460.1 M855.8 457.5L896.7 432.0 M905.1 426.7L921.5 416.4 M924.0 414.9L955.2 395.4 M982.1 378.6L1026.1 351.1 M1030.0 348.7L1043.4 340.3 M1047.7 337.6L1075.0 320.5 M1076.4 319.7L1094.5 308.3 M1100.7 304.5L1146.8 275.7 M826.9 488.8L863.9 465.7 M909.4 437.3L952.3 410.4 M954.9 408.8L1001.4 379.8 M1008.1 375.6L1051.0 348.8 M1055.9 345.7L1096.1 320.6 M1118.8 306.4L1151.6 285.9 M744.2 551.4L761.5 540.6 M764.0 539.0L809.1 510.9 M833.0 495.9L878.7 467.3 M999.1 392.1L1020.0 379.0 M1021.5 378.1L1060.5 353.8 M1067.5 349.4L1113.0 320.9 M1113.2 320.8L1136.7 306.1 M1142.2 302.7L1180.1 279.0 M782.3 541.7L800.0 530.6 M807.1 526.2L845.4 502.3 M857.0 495.0L888.6 475.3 M896.2 470.5L910.2 461.7 M915.9 458.2L950.1 436.8 M952.1 435.6L994.6 409.0 M1053.8 372.1L1088.3 350.5 M1141.0 317.6L1172.4 297.9 M824.4 530.2L837.6 521.9 M883.0 493.6L928.2 465.3 M954.1 449.1L988.3 427.8 M991.3 425.9L1036.6 397.6 M1045.0 392.3L1070.7 376.3 M1071.6 375.7L1101.3 357.2 M1140.1 332.9L1172.4 312.7 M760.8 578.0L794.8 556.8 M796.5 555.7L819.0 541.7 M820.2 540.9L851.8 521.1 M854.6 519.4L864.8 513.0 M886.3 499.6L930.6 471.9 M974.1 444.8L988.3 435.8 M993.4 432.7L1026.4 412.1 M1077.8 379.9L1121.5 352.6 M1122.2 352.2L1158.4 329.6 M1162.9 326.7L1182.9 314.3 M822.0 553.5L856.0 532.3 M859.9 529.8L893.6 508.8 M900.7 504.3L946.3 475.8 M949.1 474.1L961.9 466.1 M964.2 464.6L1002.1 441.0 M1003.5 440.1L1020.8 429.3 M1027.9 424.8L1069.2 399.0 M1071.5 397.6L1104.4 377.0 M1146.4 350.8L1172.7 334.3 M1178.3 330.9L1200.1 317.2 M773.3 597.9L807.8 576.3 M815.2 571.7L854.9 546.9 M907.6 514.0L937.0 495.6 M938.0 494.9L958.7 482.0 M966.2 477.3L1012.3 448.5 M1066.0 415.0L1107.8 388.8 M1110.2 387.4L1145.9 365.0 M1149.6 362.8L1186.4 339.7 M780.1 608.9L799.6 596.7 M801.1 595.8L829.5 578.0 M830.2 577.6L856.1 561.4 M950.6 502.4L979.8 484.1 M1036.3 448.8L1065.7 430.4 M785.8 618.0L818.2 597.8 M821.6 595.7L867.3 567.1 M890.3 552.8L935.3 524.6 M1004.1 481.6L1032.0 464.2 M1038.0 460.4L1069.9 440.5 M1104.3 419.0L1144.1 394.2 M1150.2 390.4L1185.1 368.5 M792.4 628.5L836.1 601.1 M839.7 598.9L872.2 578.6 M874.6 577.1L912.5 553.4 M930.9 541.9L949.0 530.6 M949.7 530.1L992.5 503.4 M1028.6 480.8L1049.7 467.7 M1056.7 463.3L1076.2 451.1 M1124.0 421.2L1153.1 403.0 M1157.8 400.1L1183.8 383.9 M1187.1 381.8L1233.6 352.8 M836.3 612.9L862.9 596.2 M865.2 594.8L908.8 567.6 M908.9 567.5L937.3 549.8 M992.2 515.5L1002.7 508.9 M1004.9 507.5L1016.0 500.6 M1024.3 495.4L1058.4 474.1 M1061.8 472.0L1081.0 460.0 M1087.9 455.7L1107.8 443.2 M1110.1 441.8L1130.0 429.4 M1147.6 418.3L1178.6 399.0 M1184.5 395.3L1227.1 368.7 M801.4 642.9L815.9 633.9 M818.2 632.4L864.3 603.6 M870.0 600.1L895.5 584.1 M927.3 564.2L967.3 539.3 M973.2 535.5L1013.1 510.6 M1016.7 508.4L1035.6 496.6 M1039.8 494.0L1059.9 481.4 M1067.3 476.8L1113.3 448.0 M1136.7 433.4L1180.4 406.1 M1202.6 392.2L1225.3 378.0 M807.3 652.3L820.2 644.2 M824.7 641.4L847.2 627.3 M854.4 622.8L872.9 611.2 M877.1 608.6L904.7 591.4 M911.3 587.2L933.8 573.2 M937.7 570.7L948.9 563.7 M953.4 560.9L970.3 550.4 M1005.6 528.3L1025.8 515.7 M1073.3 486.0L1108.8 463.8 M1113.3 461.0L1154.6 435.2 M1159.5 432.1L1185.5 415.9 M1192.3 411.7L1227.1 389.9 M847.4 636.9L884.1 614.0 M930.3 585.1L960.6 566.1 M964.0 564.0L996.0 544.0 M1003.3 539.4L1025.3 525.7 M1030.6 522.4L1065.8 500.4 M1138.1 455.2L1164.8 438.5 M1217.1 405.8L1242.7 389.9 M817.5 668.7L832.7 659.2 M903.0 615.2L940.7 591.7 M1019.7 542.3L1038.7 530.4 M1042.4 528.1L1057.6 518.6 M1057.6 518.6L1086.0 500.8 M1094.5 495.5L1139.7 467.3 M1166.3 450.7L1201.4 428.8 M1201.7 428.6L1226.7 412.9 M1230.0 410.9L1268.0 387.2 M824.0 679.0L862.9 654.7 M871.2 649.5L908.3 626.3 M915.4 621.9L947.9 601.6 M953.0 598.4L990.6 574.9 M994.5 572.5L1033.4 548.2 M1039.6 544.3L1083.2 517.1 M1129.4 488.2L1141.3 480.8 M1229.6 425.6L1245.2 415.8 M827.3 684.4L845.1 673.2 M858.1 665.1L894.9 642.1 M927.8 621.5L946.8 609.7 M955.2 604.4L974.2 592.6 M977.9 590.3L1007.5 571.7 M1049.6 545.5L1068.5 533.7 M1072.5 531.1L1104.4 511.2 M1105.4 510.6L1129.5 495.5 M1133.5 493.0L1152.5 481.1 M1160.7 476.0L1194.4 455.0 M1195.7 454.1L1223.4 436.9 M1226.1 435.2L1252.2 418.9 M833.6 694.4L877.4 667.0 M971.9 607.9L995.2 593.4 M1190.1 471.6L1221.5 452.0 M1223.6 450.7L1260.1 427.9 M874.3 682.5L895.6 669.2 M897.4 668.1L910.2 660.0 M914.9 657.1L949.6 635.4 M952.7 633.5L990.6 609.8 M991.8 609.1L1023.3 589.4 M1084.0 551.4L1108.8 535.9 M1109.9 535.3L1138.8 517.2 M1213.4 470.6L1251.9 446.5" stroke="#c3c0bc" stroke-width="1.8" stroke-dasharray="1.5 1.2" fill="none"/></g>
<g clip-path="url(#crail)"><path d="M788.1 437.4L819.1 427.3 M857.9 414.7L899.5 401.2 M901.3 400.6L948.7 385.2 M955.1 383.1L983.7 373.8 M984.9 373.4L1019.2 362.3 M791.4 447.6L805.1 443.1 M838.5 432.3L867.0 423.0 M873.7 420.8L910.9 408.7 M913.9 407.8L954.2 394.6 M1005.6 378.0L1024.8 371.7 M793.5 454.2L823.3 444.6 M825.9 443.7L858.5 433.1 M865.4 430.9L901.4 419.2 M908.0 417.1L955.2 401.7 M956.4 401.3L998.9 387.5 M1005.8 385.3L1037.8 374.9 M906.7 428.4L945.9 415.7 M985.3 402.9L1008.7 395.3 M1016.2 392.9L1045.9 383.2 M848.2 454.2L891.0 440.3 M898.2 437.9L942.1 423.7 M945.6 422.5L975.8 412.7 M980.3 411.3L1011.9 401.0 M1019.1 398.7L1048.8 389.0 M800.5 475.7L847.3 460.5 M851.4 459.2L863.3 455.3 M867.7 453.9L879.8 450.0 M884.6 448.4L898.2 444.0 M901.8 442.8L937.7 431.1 M981.6 416.9L1017.5 405.2 M1019.4 404.6L1047.3 395.5 M802.8 482.9L827.6 474.8 M829.9 474.1L854.9 465.9 M855.1 465.9L887.1 455.5 M889.5 454.7L908.9 448.4 M910.7 447.8L928.9 441.9 M934.2 440.2L949.3 435.3 M951.9 434.4L993.4 420.9 M999.9 418.8L1017.4 413.1 M1022.4 411.5L1065.8 397.4 M805.1 489.9L823.4 483.9 M829.8 481.8L847.8 476.0 M854.0 474.0L888.6 462.7 M891.2 461.9L907.3 456.6 M913.4 454.7L934.6 447.8 M937.7 446.8L964.3 438.1 M995.6 428.0L1038.8 413.9 M808.6 500.7L828.1 494.4 M834.4 492.3L869.8 480.8 M872.0 480.1L895.7 472.4 M896.3 472.2L928.9 461.6 M935.1 459.6L948.1 455.4 M953.4 453.6L998.2 439.1 M809.9 504.7L845.3 493.2 M848.4 492.1L893.8 477.4 M896.4 476.6L916.9 469.9 M920.5 468.7L960.2 455.8 M961.7 455.3L992.5 445.3 M993.8 444.9L1033.8 431.9 M812.4 512.4L846.6 501.3 M846.9 501.2L868.2 494.3 M872.2 493.0L898.9 484.3 M986.7 455.8L1009.5 448.4 M1012.2 447.5L1047.0 436.2 M814.9 520.0L830.8 514.9 M862.8 504.5L887.7 496.4 M893.6 494.5L918.8 486.3 M923.5 484.8L950.5 476.0 M954.3 474.8L991.1 462.8 M996.4 461.1L1024.5 452.0 M818.0 529.5L863.2 514.8 M870.1 512.5L910.1 499.5 M913.6 498.4L929.5 493.2 M934.5 491.6L978.0 477.5 M983.1 475.8L1021.0 463.5 M865.5 520.1L881.3 515.0 M886.4 513.3L928.0 499.8 M978.5 483.3L1008.4 473.6 M1009.3 473.4L1047.7 460.9 M822.6 543.9L864.0 530.4 M865.4 530.0L885.8 523.3 M891.5 521.5L917.2 513.1 M920.2 512.2L944.3 504.3 M944.9 504.1L974.4 494.5 M1021.2 479.3L1060.0 466.7 M869.8 537.2L908.2 524.7 M912.2 523.4L939.6 514.5 M966.5 505.8L989.3 498.4 M994.6 496.7L1040.4 481.8 M1045.8 480.0L1072.2 471.5 M826.9 556.8L839.1 552.8 M842.0 551.9L859.7 546.1 M909.0 530.1L937.8 520.8 M941.3 519.6L982.9 506.1 M987.2 504.7L1016.0 495.4 M1022.5 493.2L1048.4 484.8 M829.3 564.3L849.2 557.9 M854.3 556.2L900.4 541.2 M902.2 540.6L920.5 534.7 M921.9 534.2L958.8 522.3 M965.7 520.0L986.3 513.3 M988.7 512.6L1015.4 503.9 M1016.0 503.7L1030.8 498.9 M1033.0 498.1L1057.3 490.2 M831.3 570.5L858.5 561.6 M860.1 561.1L892.6 550.5 M1022.4 508.4L1047.3 500.3 M1053.1 498.4L1075.2 491.2 M834.1 579.0L872.7 566.4 M912.4 553.5L936.5 545.7 M836.2 585.5L873.6 573.3 M877.8 571.9L912.7 560.6 M938.3 552.3L976.9 539.7 M982.6 537.9L1007.0 530.0 M1056.7 513.8L1077.0 507.2 M838.5 592.7L869.5 582.7 M976.3 547.9L1002.8 539.3 M1009.0 537.3L1047.5 524.8 M840.8 599.8L861.3 593.2 M861.5 593.1L902.0 580.0 M909.2 577.6L934.4 569.4 M938.9 568.0L973.2 556.8 M978.4 555.1L1000.6 547.9 M1004.3 546.7L1037.5 535.9 M1037.5 535.9L1076.7 523.2 M843.7 608.5L862.1 602.5 M862.3 602.4L891.8 592.8 M895.2 591.7L927.1 581.4 M933.9 579.2L950.2 573.9 M954.9 572.3L968.2 568.0 M969.9 567.5L984.2 562.8 M991.2 560.5L1014.3 553.0 M1019.6 551.3L1035.9 546.0 M1040.5 544.6L1085.4 530.0 M846.4 616.8L891.4 602.2 M894.8 601.1L933.5 588.5 M948.8 583.5L966.1 577.9 M971.4 576.2L1002.2 566.2 M1007.2 564.6L1029.6 557.3 M1068.1 544.8L1105.5 532.6 M995.0 576.2L1021.2 567.7 M1021.5 567.6L1047.5 559.1 M850.5 629.6L884.4 618.6 M885.4 618.3L898.7 614.0 M900.7 613.3L940.6 600.3 M947.7 598.0L970.0 590.8 M972.0 590.1L1012.9 576.9 M1015.5 576.0L1030.3 571.2 M904.4 620.7L933.0 611.4 M987.7 593.6L1021.1 582.8 M1021.7 582.6L1043.8 575.4 M1044.6 575.1L1070.1 566.9 M856.0 646.6L887.4 636.4 M890.2 635.5L916.6 626.9 M922.5 625.0L951.3 615.6 M952.6 615.2L990.1 603.0 M995.5 601.3L1020.9 593.0 M1062.7 579.4L1101.5 566.8 M858.2 653.2L892.8 642.0 M899.4 639.8L927.1 630.8 M932.7 629.0L956.2 621.4 M956.7 621.2L982.6 612.8 M1015.9 602.0L1050.8 590.6 M1051.2 590.5L1068.1 585.0 M1072.6 583.6L1084.4 579.7 M860.0 658.7L886.5 650.1 M891.1 648.6L931.1 635.6 M979.4 619.9L998.0 613.8 M998.7 613.6L1026.9 604.5 M1033.2 602.4L1066.9 591.5 M1072.7 589.6L1115.6 575.6 M988.4 353.4L994.5 365.0 M995.2 366.3L1000.9 376.9 M1005.2 385.0L1021.1 415.1 M1045.8 461.4L1062.2 492.2 M1065.9 499.3L1073.3 513.2 M1076.3 518.8L1091.3 547.0 M1095.4 554.7L1101.3 565.9 M996.3 387.2L1013.2 418.9 M1014.6 421.6L1032.1 454.5 M1036.3 462.3L1052.9 493.5 M1054.9 497.2L1068.0 521.9 M1068.7 523.3L1077.7 540.2 M1077.9 540.6L1083.3 550.7 M1084.6 553.1L1096.8 576.1 M984.1 388.2L992.7 404.3 M996.2 410.9L1005.4 428.3 M1016.8 449.8L1032.3 478.9 M1044.9 502.6L1050.2 512.6 M1054.4 520.5L1072.6 554.6 M960.8 368.0L978.8 401.9 M993.5 429.6L1000.2 442.1 M1014.2 468.5L1021.3 481.9 M1065.1 564.2L1073.3 579.7 M951.5 373.0L961.9 392.7 M964.2 396.9L972.3 412.1 M987.2 440.3L1003.6 471.2 M1013.0 488.8L1021.0 503.8 M1021.7 505.0L1027.1 515.2 M1029.7 520.2L1048.4 555.3 M1052.6 563.2L1066.5 589.4 M945.9 376.0L953.6 390.4 M957.8 398.3L975.6 431.6 M978.6 437.4L994.6 467.4 M998.4 474.6L1010.5 497.5 M1013.8 503.5L1022.2 519.4 M1026.7 527.9L1032.5 538.7 M1055.3 581.6L1061.8 593.9 M939.5 379.4L953.1 405.0 M996.2 486.1L1002.5 498.0 M1006.2 504.9L1023.3 537.0 M1027.4 544.7L1034.9 558.9 M1036.5 561.8L1053.7 594.3 M931.9 383.4L937.1 393.1 M939.4 397.5L956.3 429.2 M956.9 430.4L966.7 448.8 M969.2 453.5L974.0 462.6 M977.9 469.9L983.8 481.0 M985.6 484.3L1001.4 514.0 M1002.5 516.1L1014.0 537.8 M1014.5 538.6L1020.8 550.5 M1024.9 558.3L1036.8 580.7 M924.2 387.5L940.7 418.5 M944.4 425.5L951.5 438.8 M952.3 440.4L959.1 453.1 M960.7 456.1L973.0 479.3 M976.4 485.6L981.1 494.6 M983.7 499.4L995.2 521.1 M1007.3 543.7L1017.0 562.0 M1021.6 570.7L1035.1 596.1 M914.9 392.5L926.1 413.7 M927.6 416.4L944.5 448.2 M961.9 480.9L971.7 499.4 M982.0 518.7L989.2 532.2 M990.9 535.5L1003.7 559.6 M1006.6 565.1L1012.6 576.4 M1017.0 584.7L1024.3 598.3 M905.4 397.5L921.4 427.6 M925.9 436.0L932.8 449.0 M935.1 453.4L947.9 477.4 M972.9 524.3L987.1 551.1 M990.0 556.5L1006.4 587.4 M1010.7 595.6L1021.1 615.1 M898.5 401.2L906.4 416.1 M909.4 421.6L928.1 456.9 M930.0 460.4L940.3 479.8 M953.0 503.7L965.3 526.8 M968.2 532.3L978.0 550.8 M992.4 577.8L1011.0 612.8 M904.8 428.5L922.0 460.9 M935.2 485.8L942.2 498.9 M945.4 504.9L957.8 528.2 M971.6 554.1L976.7 563.8 M977.3 564.9L982.8 575.3 M984.2 577.9L1001.4 610.3 M880.5 410.8L897.5 442.9 M900.2 447.8L914.6 475.0 M964.1 568.1L978.4 595.0 M980.0 597.9L990.1 617.0 M876.7 412.8L893.4 444.1 M894.4 446.1L906.9 469.6 M910.3 476.0L917.6 489.7 M922.3 498.5L936.9 526.0 M941.3 534.3L951.4 553.2 M971.2 590.4L988.7 623.4 M865.6 418.7L870.8 428.5 M872.0 430.7L888.8 462.3 M890.3 465.0L907.6 497.6 M909.2 500.6L925.6 531.5 M929.8 539.4L946.9 571.6 M950.2 577.8L963.4 602.6 M871.9 449.2L877.6 459.9 M901.0 503.9L917.3 534.6 M917.3 534.6L933.9 565.8 M936.8 571.3L941.8 580.6 M955.1 605.6L972.3 638.0 M866.4 454.8L884.9 489.4 M888.9 497.0L897.8 513.8 M901.5 520.8L916.1 548.2 M917.0 549.8L921.9 559.1 M926.3 567.3L934.9 583.5 M936.8 587.1L950.3 612.5 M845.6 429.3L854.4 445.7 M883.0 499.6L900.9 533.2 M918.4 566.1L929.5 587.0 M930.3 588.4L938.4 603.7 M834.8 435.1L840.5 445.9 M867.2 496.0L876.5 513.5 M881.1 522.1L894.3 547.0 M910.6 577.6L928.7 611.6 M933.3 620.3L938.8 630.6 M942.1 636.8L956.2 663.4 M830.8 437.2L842.2 458.7 M844.7 463.5L854.5 481.9 M885.0 539.3L892.5 553.3 M894.1 556.3L903.9 574.8 M908.3 583.1L915.7 597.0 M928.9 621.8L945.2 652.5 M823.2 441.2L832.2 458.2 M834.0 461.6L840.7 474.2 M842.8 478.3L852.6 496.5 M853.2 497.7L858.3 507.3 M873.7 536.3L886.3 560.0 M888.5 564.2L906.9 598.8 M907.8 600.4L921.2 625.6 M820.3 458.8L831.1 479.1 M834.1 484.7L841.2 498.1 M844.4 504.0L856.7 527.3 M861.1 535.5L869.5 551.2 M872.0 555.9L884.3 579.2 M888.4 586.8L895.9 600.9 M896.4 601.9L913.6 634.1 M918.2 642.8L924.9 655.5 M826.5 491.1L842.3 520.8 M874.6 581.5L883.2 597.8 M906.9 642.3L911.6 651.2 M821.7 493.9L839.9 528.0 M840.8 529.8L858.5 563.0 M869.4 583.5L881.4 606.0 M881.8 606.8L895.5 632.6 M898.5 638.2L910.3 660.6 M804.1 475.9L813.4 493.3 M830.7 525.8L836.4 536.5 M837.1 537.9L852.6 567.1 M854.6 570.8L863.6 587.7 M867.2 594.4L879.2 617.1 M896.2 649.0L910.0 675.0 M786.6 460.7L804.8 494.9 M808.2 501.3L826.3 535.4 M827.9 538.3L836.9 555.2 M849.7 579.4L858.5 595.9 M861.6 601.8L870.8 619.0 M874.5 626.0L883.8 643.5 M884.6 645.1L890.7 656.5 M890.8 656.8L895.6 665.7 M895.6 665.8L909.6 691.9 M820.8 548.2L825.5 557.2 M827.6 561.0L842.6 589.4 M847.2 598.0L856.7 615.9 M859.9 621.9L864.6 630.8 M868.2 637.5L881.0 661.5 M885.4 669.8L896.2 690.1" stroke="#f6e394" stroke-width="3.2" fill="none"/><path d="M788.1 437.4L819.1 427.3 M857.9 414.7L899.5 401.2 M901.3 400.6L948.7 385.2 M955.1 383.1L983.7 373.8 M984.9 373.4L1019.2 362.3 M791.4 447.6L805.1 443.1 M838.5 432.3L867.0 423.0 M873.7 420.8L910.9 408.7 M913.9 407.8L954.2 394.6 M1005.6 378.0L1024.8 371.7 M793.5 454.2L823.3 444.6 M825.9 443.7L858.5 433.1 M865.4 430.9L901.4 419.2 M908.0 417.1L955.2 401.7 M956.4 401.3L998.9 387.5 M1005.8 385.3L1037.8 374.9 M906.7 428.4L945.9 415.7 M985.3 402.9L1008.7 395.3 M1016.2 392.9L1045.9 383.2 M848.2 454.2L891.0 440.3 M898.2 437.9L942.1 423.7 M945.6 422.5L975.8 412.7 M980.3 411.3L1011.9 401.0 M1019.1 398.7L1048.8 389.0 M800.5 475.7L847.3 460.5 M851.4 459.2L863.3 455.3 M867.7 453.9L879.8 450.0 M884.6 448.4L898.2 444.0 M901.8 442.8L937.7 431.1 M981.6 416.9L1017.5 405.2 M1019.4 404.6L1047.3 395.5 M802.8 482.9L827.6 474.8 M829.9 474.1L854.9 465.9 M855.1 465.9L887.1 455.5 M889.5 454.7L908.9 448.4 M910.7 447.8L928.9 441.9 M934.2 440.2L949.3 435.3 M951.9 434.4L993.4 420.9 M999.9 418.8L1017.4 413.1 M1022.4 411.5L1065.8 397.4 M805.1 489.9L823.4 483.9 M829.8 481.8L847.8 476.0 M854.0 474.0L888.6 462.7 M891.2 461.9L907.3 456.6 M913.4 454.7L934.6 447.8 M937.7 446.8L964.3 438.1 M995.6 428.0L1038.8 413.9 M808.6 500.7L828.1 494.4 M834.4 492.3L869.8 480.8 M872.0 480.1L895.7 472.4 M896.3 472.2L928.9 461.6 M935.1 459.6L948.1 455.4 M953.4 453.6L998.2 439.1 M809.9 504.7L845.3 493.2 M848.4 492.1L893.8 477.4 M896.4 476.6L916.9 469.9 M920.5 468.7L960.2 455.8 M961.7 455.3L992.5 445.3 M993.8 444.9L1033.8 431.9 M812.4 512.4L846.6 501.3 M846.9 501.2L868.2 494.3 M872.2 493.0L898.9 484.3 M986.7 455.8L1009.5 448.4 M1012.2 447.5L1047.0 436.2 M814.9 520.0L830.8 514.9 M862.8 504.5L887.7 496.4 M893.6 494.5L918.8 486.3 M923.5 484.8L950.5 476.0 M954.3 474.8L991.1 462.8 M996.4 461.1L1024.5 452.0 M818.0 529.5L863.2 514.8 M870.1 512.5L910.1 499.5 M913.6 498.4L929.5 493.2 M934.5 491.6L978.0 477.5 M983.1 475.8L1021.0 463.5 M865.5 520.1L881.3 515.0 M886.4 513.3L928.0 499.8 M978.5 483.3L1008.4 473.6 M1009.3 473.4L1047.7 460.9 M822.6 543.9L864.0 530.4 M865.4 530.0L885.8 523.3 M891.5 521.5L917.2 513.1 M920.2 512.2L944.3 504.3 M944.9 504.1L974.4 494.5 M1021.2 479.3L1060.0 466.7 M869.8 537.2L908.2 524.7 M912.2 523.4L939.6 514.5 M966.5 505.8L989.3 498.4 M994.6 496.7L1040.4 481.8 M1045.8 480.0L1072.2 471.5 M826.9 556.8L839.1 552.8 M842.0 551.9L859.7 546.1 M909.0 530.1L937.8 520.8 M941.3 519.6L982.9 506.1 M987.2 504.7L1016.0 495.4 M1022.5 493.2L1048.4 484.8 M829.3 564.3L849.2 557.9 M854.3 556.2L900.4 541.2 M902.2 540.6L920.5 534.7 M921.9 534.2L958.8 522.3 M965.7 520.0L986.3 513.3 M988.7 512.6L1015.4 503.9 M1016.0 503.7L1030.8 498.9 M1033.0 498.1L1057.3 490.2 M831.3 570.5L858.5 561.6 M860.1 561.1L892.6 550.5 M1022.4 508.4L1047.3 500.3 M1053.1 498.4L1075.2 491.2 M834.1 579.0L872.7 566.4 M912.4 553.5L936.5 545.7 M836.2 585.5L873.6 573.3 M877.8 571.9L912.7 560.6 M938.3 552.3L976.9 539.7 M982.6 537.9L1007.0 530.0 M1056.7 513.8L1077.0 507.2 M838.5 592.7L869.5 582.7 M976.3 547.9L1002.8 539.3 M1009.0 537.3L1047.5 524.8 M840.8 599.8L861.3 593.2 M861.5 593.1L902.0 580.0 M909.2 577.6L934.4 569.4 M938.9 568.0L973.2 556.8 M978.4 555.1L1000.6 547.9 M1004.3 546.7L1037.5 535.9 M1037.5 535.9L1076.7 523.2 M843.7 608.5L862.1 602.5 M862.3 602.4L891.8 592.8 M895.2 591.7L927.1 581.4 M933.9 579.2L950.2 573.9 M954.9 572.3L968.2 568.0 M969.9 567.5L984.2 562.8 M991.2 560.5L1014.3 553.0 M1019.6 551.3L1035.9 546.0 M1040.5 544.6L1085.4 530.0 M846.4 616.8L891.4 602.2 M894.8 601.1L933.5 588.5 M948.8 583.5L966.1 577.9 M971.4 576.2L1002.2 566.2 M1007.2 564.6L1029.6 557.3 M1068.1 544.8L1105.5 532.6 M995.0 576.2L1021.2 567.7 M1021.5 567.6L1047.5 559.1 M850.5 629.6L884.4 618.6 M885.4 618.3L898.7 614.0 M900.7 613.3L940.6 600.3 M947.7 598.0L970.0 590.8 M972.0 590.1L1012.9 576.9 M1015.5 576.0L1030.3 571.2 M904.4 620.7L933.0 611.4 M987.7 593.6L1021.1 582.8 M1021.7 582.6L1043.8 575.4 M1044.6 575.1L1070.1 566.9 M856.0 646.6L887.4 636.4 M890.2 635.5L916.6 626.9 M922.5 625.0L951.3 615.6 M952.6 615.2L990.1 603.0 M995.5 601.3L1020.9 593.0 M1062.7 579.4L1101.5 566.8 M858.2 653.2L892.8 642.0 M899.4 639.8L927.1 630.8 M932.7 629.0L956.2 621.4 M956.7 621.2L982.6 612.8 M1015.9 602.0L1050.8 590.6 M1051.2 590.5L1068.1 585.0 M1072.6 583.6L1084.4 579.7 M860.0 658.7L886.5 650.1 M891.1 648.6L931.1 635.6 M979.4 619.9L998.0 613.8 M998.7 613.6L1026.9 604.5 M1033.2 602.4L1066.9 591.5 M1072.7 589.6L1115.6 575.6 M988.4 353.4L994.5 365.0 M995.2 366.3L1000.9 376.9 M1005.2 385.0L1021.1 415.1 M1045.8 461.4L1062.2 492.2 M1065.9 499.3L1073.3 513.2 M1076.3 518.8L1091.3 547.0 M1095.4 554.7L1101.3 565.9 M996.3 387.2L1013.2 418.9 M1014.6 421.6L1032.1 454.5 M1036.3 462.3L1052.9 493.5 M1054.9 497.2L1068.0 521.9 M1068.7 523.3L1077.7 540.2 M1077.9 540.6L1083.3 550.7 M1084.6 553.1L1096.8 576.1 M984.1 388.2L992.7 404.3 M996.2 410.9L1005.4 428.3 M1016.8 449.8L1032.3 478.9 M1044.9 502.6L1050.2 512.6 M1054.4 520.5L1072.6 554.6 M960.8 368.0L978.8 401.9 M993.5 429.6L1000.2 442.1 M1014.2 468.5L1021.3 481.9 M1065.1 564.2L1073.3 579.7 M951.5 373.0L961.9 392.7 M964.2 396.9L972.3 412.1 M987.2 440.3L1003.6 471.2 M1013.0 488.8L1021.0 503.8 M1021.7 505.0L1027.1 515.2 M1029.7 520.2L1048.4 555.3 M1052.6 563.2L1066.5 589.4 M945.9 376.0L953.6 390.4 M957.8 398.3L975.6 431.6 M978.6 437.4L994.6 467.4 M998.4 474.6L1010.5 497.5 M1013.8 503.5L1022.2 519.4 M1026.7 527.9L1032.5 538.7 M1055.3 581.6L1061.8 593.9 M939.5 379.4L953.1 405.0 M996.2 486.1L1002.5 498.0 M1006.2 504.9L1023.3 537.0 M1027.4 544.7L1034.9 558.9 M1036.5 561.8L1053.7 594.3 M931.9 383.4L937.1 393.1 M939.4 397.5L956.3 429.2 M956.9 430.4L966.7 448.8 M969.2 453.5L974.0 462.6 M977.9 469.9L983.8 481.0 M985.6 484.3L1001.4 514.0 M1002.5 516.1L1014.0 537.8 M1014.5 538.6L1020.8 550.5 M1024.9 558.3L1036.8 580.7 M924.2 387.5L940.7 418.5 M944.4 425.5L951.5 438.8 M952.3 440.4L959.1 453.1 M960.7 456.1L973.0 479.3 M976.4 485.6L981.1 494.6 M983.7 499.4L995.2 521.1 M1007.3 543.7L1017.0 562.0 M1021.6 570.7L1035.1 596.1 M914.9 392.5L926.1 413.7 M927.6 416.4L944.5 448.2 M961.9 480.9L971.7 499.4 M982.0 518.7L989.2 532.2 M990.9 535.5L1003.7 559.6 M1006.6 565.1L1012.6 576.4 M1017.0 584.7L1024.3 598.3 M905.4 397.5L921.4 427.6 M925.9 436.0L932.8 449.0 M935.1 453.4L947.9 477.4 M972.9 524.3L987.1 551.1 M990.0 556.5L1006.4 587.4 M1010.7 595.6L1021.1 615.1 M898.5 401.2L906.4 416.1 M909.4 421.6L928.1 456.9 M930.0 460.4L940.3 479.8 M953.0 503.7L965.3 526.8 M968.2 532.3L978.0 550.8 M992.4 577.8L1011.0 612.8 M904.8 428.5L922.0 460.9 M935.2 485.8L942.2 498.9 M945.4 504.9L957.8 528.2 M971.6 554.1L976.7 563.8 M977.3 564.9L982.8 575.3 M984.2 577.9L1001.4 610.3 M880.5 410.8L897.5 442.9 M900.2 447.8L914.6 475.0 M964.1 568.1L978.4 595.0 M980.0 597.9L990.1 617.0 M876.7 412.8L893.4 444.1 M894.4 446.1L906.9 469.6 M910.3 476.0L917.6 489.7 M922.3 498.5L936.9 526.0 M941.3 534.3L951.4 553.2 M971.2 590.4L988.7 623.4 M865.6 418.7L870.8 428.5 M872.0 430.7L888.8 462.3 M890.3 465.0L907.6 497.6 M909.2 500.6L925.6 531.5 M929.8 539.4L946.9 571.6 M950.2 577.8L963.4 602.6 M871.9 449.2L877.6 459.9 M901.0 503.9L917.3 534.6 M917.3 534.6L933.9 565.8 M936.8 571.3L941.8 580.6 M955.1 605.6L972.3 638.0 M866.4 454.8L884.9 489.4 M888.9 497.0L897.8 513.8 M901.5 520.8L916.1 548.2 M917.0 549.8L921.9 559.1 M926.3 567.3L934.9 583.5 M936.8 587.1L950.3 612.5 M845.6 429.3L854.4 445.7 M883.0 499.6L900.9 533.2 M918.4 566.1L929.5 587.0 M930.3 588.4L938.4 603.7 M834.8 435.1L840.5 445.9 M867.2 496.0L876.5 513.5 M881.1 522.1L894.3 547.0 M910.6 577.6L928.7 611.6 M933.3 620.3L938.8 630.6 M942.1 636.8L956.2 663.4 M830.8 437.2L842.2 458.7 M844.7 463.5L854.5 481.9 M885.0 539.3L892.5 553.3 M894.1 556.3L903.9 574.8 M908.3 583.1L915.7 597.0 M928.9 621.8L945.2 652.5 M823.2 441.2L832.2 458.2 M834.0 461.6L840.7 474.2 M842.8 478.3L852.6 496.5 M853.2 497.7L858.3 507.3 M873.7 536.3L886.3 560.0 M888.5 564.2L906.9 598.8 M907.8 600.4L921.2 625.6 M820.3 458.8L831.1 479.1 M834.1 484.7L841.2 498.1 M844.4 504.0L856.7 527.3 M861.1 535.5L869.5 551.2 M872.0 555.9L884.3 579.2 M888.4 586.8L895.9 600.9 M896.4 601.9L913.6 634.1 M918.2 642.8L924.9 655.5 M826.5 491.1L842.3 520.8 M874.6 581.5L883.2 597.8 M906.9 642.3L911.6 651.2 M821.7 493.9L839.9 528.0 M840.8 529.8L858.5 563.0 M869.4 583.5L881.4 606.0 M881.8 606.8L895.5 632.6 M898.5 638.2L910.3 660.6 M804.1 475.9L813.4 493.3 M830.7 525.8L836.4 536.5 M837.1 537.9L852.6 567.1 M854.6 570.8L863.6 587.7 M867.2 594.4L879.2 617.1 M896.2 649.0L910.0 675.0 M786.6 460.7L804.8 494.9 M808.2 501.3L826.3 535.4 M827.9 538.3L836.9 555.2 M849.7 579.4L858.5 595.9 M861.6 601.8L870.8 619.0 M874.5 626.0L883.8 643.5 M884.6 645.1L890.7 656.5 M890.8 656.8L895.6 665.7 M895.6 665.8L909.6 691.9 M820.8 548.2L825.5 557.2 M827.6 561.0L842.6 589.4 M847.2 598.0L856.7 615.9 M859.9 621.9L864.6 630.8 M868.2 637.5L881.0 661.5 M885.4 669.8L896.2 690.1" stroke="#c3c0bc" stroke-width="1.8" stroke-dasharray="1.5 1.2" fill="none"/></g>
<path d="M1688 590L1706 586L1740 592L1738 606L1700 604L1686 600ZM1695 590L1693 602M1707 588L1705 604M1720 590L1718 606M1712 582L1716 576L1728 578" fill="none" stroke="#f3e29a" stroke-width="2.6"/>
<path d="M1688 590L1706 586L1740 592L1738 606L1700 604L1686 600ZM1695 590L1693 602M1707 588L1705 604M1720 590L1718 606M1712 582L1716 576L1728 578" fill="none" stroke="#c2bfb6" stroke-width="1.2" stroke-dasharray="1.4 1.4"/>
<polygon points="1080,320 1088,318 1089,334 1081,334" fill="#dcf6cc"/>
<path d="M931 366L941 355L954 363L942 376M924 375L916 386L924 394L935 384M968 338L974 336L981 332" fill="none" stroke="#cfa8f6" stroke-width="3" stroke-linejoin="round"/>
<polygon points="1098.2,534.9 1204.4,629.5 1178.5,654.7 1190.4,661.7 1242.1,612.7 1268.7,628.8 1290.7,618.4 1260.3,594.6 1198.8,557.5 1212.0,543.5 1210.0,535.2 1242.0,556.0 1281.0,580.6 1340.0,597.4 1383.0,602.5 1470.7,604.6 1522.0,601.2 1562.5,632.4 1579.6,637.5 1607.3,631.5 1626.5,635.8 1595.8,660.2 1583.8,711.4 1652.2,775.5 1605.2,835.3 1583.8,839.5 1567.6,895.0 1470.7,915.1 1390.8,933.5 1378.0,949.3 1385.3,988.1 1350.2,1011.2 1331.9,995.4 1263.5,1018.9 1227.2,1031.7 1129.0,1008.2 1107.7,998.8 1100.4,1009.0 1075.6,994.6 1046.4,997.6 1014.4,995.5 990.9,981.8 962.2,959.2 958.8,940.0 966.5,918.6 1005.8,886.6 986.6,875.0 965.2,863.1 911.8,849.4 890.5,851.1 848.6,856.7 839.2,842.6 807.2,854.5 807.2,875.9 800.8,890.9 751.6,926.3 713.2,946.4 691.8,953.6 676.9,952.0 640.6,937.8 632.0,931.4 625.6,912.2 627.8,886.6 642.7,848.1 647.8,837.5 649.1,816.1 642.7,799.0 635.0,787.0 732.4,682.8 764.5,658.1 805.0,657.2 839.2,603.8 896.9,626.9 918.2,622.6 1018.6,536.3" fill="#ffff00" stroke="#111" stroke-width="1.1" stroke-linejoin="round"/>
<path d="M400.0 301.0C410.4 303.9 441.4 312.5 462.1 318.2C482.8 323.9 505.6 331.9 524.2 335.3C542.8 338.7 560.4 334.5 573.9 338.4C587.4 342.3 598.8 352.0 605.0 358.5C611.2 365.0 607.1 367.9 611.2 377.2C615.3 386.5 625.7 401.5 629.8 414.4C633.9 427.3 628.8 439.3 636.0 454.8C643.2 470.3 664.5 498.3 673.3 507.6C682.1 516.9 685.7 505.5 688.8 510.7C691.9 515.9 685.7 531.5 691.9 538.7C698.1 546.0 716.1 550.7 726.1 554.2C736.1 557.8 750.9 555.0 751.8 560.0C752.7 565.0 735.8 574.8 731.3 583.9C726.8 593.0 729.6 606.1 724.5 614.6C719.4 623.1 706.8 624.9 700.5 635.1C694.2 645.4 692.0 666.4 686.9 676.1C681.8 685.8 672.6 681.8 669.8 693.2C666.9 704.6 673.2 733.6 669.8 744.4C666.4 755.2 655.0 752.4 649.3 758.1C643.6 763.8 638.0 775.2 635.7 778.6" fill="none" stroke="#a6cbf5" stroke-width="1.2" stroke-linejoin="round"/>
<path d="M702.8 166.0C701.0 171.2 694.8 185.6 691.9 197.0C689.0 208.4 685.2 223.9 685.7 234.3C686.2 244.7 692.4 249.9 695.0 259.2C697.6 268.5 702.8 278.8 701.2 290.2C699.7 301.6 689.8 317.1 685.7 327.5C681.6 337.9 680.5 340.9 676.4 352.3C672.3 363.7 663.0 379.2 660.9 395.8C658.8 412.4 659.9 433.1 664.0 451.7C668.1 470.3 682.1 498.3 685.7 507.6" fill="none" stroke="#a6cbf5" stroke-width="1.2" stroke-linejoin="round"/>
<path d="M960.0 331.3C957.7 333.1 950.7 339.1 946.3 342.4C941.9 345.6 937.7 346.8 933.7 350.8C929.7 354.8 926.7 361.1 922.5 366.2C918.3 371.3 913.7 375.3 908.6 381.6C903.5 387.9 896.9 397.4 891.8 403.9C886.7 410.4 884.1 416.7 877.8 420.7C871.5 424.7 858.1 426.2 854.0 427.7C849.9 429.2 855.4 427.2 853.2 429.5C851.1 431.8 845.1 437.9 841.1 441.6C837.1 445.3 832.4 448.0 829.0 451.7C825.6 455.4 825.0 458.4 821.0 463.8C817.0 469.2 809.8 479.3 804.8 484.0C799.8 488.7 795.4 490.0 790.7 492.0C786.0 494.0 779.9 494.3 776.5 496.0C773.1 497.7 771.9 496.3 770.5 502.0C769.1 507.7 770.1 522.8 768.4 530.0C766.6 537.2 761.4 542.5 760.0 545.0" fill="none" stroke="#a6cbf5" stroke-width="1.2" stroke-linejoin="round"/>
<path d="M960.0 331.3C961.4 329.3 966.1 323.4 968.3 319.4C970.5 315.3 969.9 310.9 973.0 307.0C976.1 303.1 983.1 299.7 987.0 296.1C990.9 292.5 992.7 288.8 996.3 285.2C999.9 281.6 1006.1 277.5 1008.7 274.4C1011.3 271.3 1008.4 269.5 1011.8 266.6C1015.2 263.8 1025.5 259.9 1028.9 257.3C1032.3 254.7 1031.5 254.4 1032.0 251.0C1032.5 247.6 1030.2 240.1 1032.0 237.0C1033.8 233.9 1040.8 235.2 1042.9 232.4C1045.0 229.6 1043.9 225.2 1044.4 220.0C1044.9 214.8 1043.3 208.0 1045.9 201.4C1048.5 194.8 1058.0 186.1 1060.0 180.2C1062.0 174.3 1058.1 168.4 1057.7 166.0" fill="none" stroke="#a6cbf5" stroke-width="1.2" stroke-linejoin="round"/>
<path d="M931.4 166.0C932.0 168.4 930.9 175.1 935.0 180.2C939.1 185.3 950.4 190.1 956.2 196.7C962.0 203.3 964.8 212.8 969.9 220.0C975.0 227.2 982.1 234.2 987.0 240.2C991.9 246.1 995.8 251.3 999.4 255.7C1003.0 260.1 1007.2 264.8 1008.7 266.6" fill="none" stroke="#a6cbf5" stroke-width="1.2" stroke-linejoin="round"/>
<path d="M1186.3 166.0C1187.3 168.1 1186.8 171.2 1192.5 178.4C1198.2 185.7 1211.7 199.2 1220.5 209.5C1229.3 219.8 1236.5 230.9 1245.3 240.5C1254.1 250.1 1258.3 258.6 1273.3 266.9C1288.3 275.2 1320.9 287.3 1335.4 290.2C1349.9 293.1 1347.3 281.4 1360.2 284.0C1373.1 286.6 1399.5 300.6 1413.0 305.8C1426.5 311.0 1433.2 308.4 1441.0 315.1C1448.8 321.8 1449.8 329.6 1459.6 346.1C1469.4 362.7 1493.3 403.0 1500.0 414.4" fill="none" stroke="#a6cbf5" stroke-width="1.2" stroke-linejoin="round"/>
<path d="M1316.8 212.6C1315.0 214.2 1307.5 214.1 1305.9 221.9C1304.4 229.7 1305.2 249.4 1307.5 259.2C1309.8 269.0 1317.8 277.3 1319.9 280.9" fill="none" stroke="#a6cbf5" stroke-width="1.2" stroke-linejoin="round"/>
<path d="M1448.8 266.9C1447.5 272.8 1441.3 293.0 1441.0 302.6C1440.7 312.2 1446.2 320.8 1447.2 324.4" fill="none" stroke="#a6cbf5" stroke-width="1.2" stroke-linejoin="round"/>
<path d="M1449.3 266.1 L1440.0 288.8" fill="none" stroke="#a6cbf5" stroke-width="1.2" stroke-linejoin="round"/>
<path d="M1480.0 383.1C1483.1 387.8 1490.8 402.3 1498.6 411.1C1506.4 419.9 1512.6 428.7 1526.6 435.9C1540.6 443.1 1566.5 447.2 1582.5 454.5C1598.5 461.8 1610.0 471.4 1622.9 479.4C1635.8 487.4 1643.5 495.4 1660.1 502.7C1676.6 509.9 1707.7 520.6 1722.2 522.9C1736.7 525.2 1742.9 517.6 1747.1 516.6" fill="none" stroke="#a6cbf5" stroke-width="1.2" stroke-linejoin="round"/>
<path d="M1748.4 166.0 L1749.8 187.4" fill="none" stroke="#a6cbf5" stroke-width="1.2" stroke-linejoin="round"/>
<path d="M1748.0 380.0 L1748.0 796.0" fill="none" stroke="#a6cbf5" stroke-width="1.2" stroke-linejoin="round"/>
<path d="M1694.4 985.1C1697.4 981.4 1706.4 966.4 1712.4 962.6C1718.4 958.9 1724.5 963.7 1730.5 962.6C1736.5 961.5 1745.5 957.0 1748.5 955.9" fill="none" stroke="#a6cbf5" stroke-width="1.2" stroke-linejoin="round"/>
<path d="M400.0 821.3 L464.9 845.2" fill="none" stroke="#a6cbf5" stroke-width="1.2" stroke-linejoin="round"/>
<path d="M464.9 845.2C464.9 846.6 457.5 850.9 464.9 853.7C472.3 856.6 496.8 859.2 509.3 862.3C521.8 865.4 531.5 872.8 540.0 872.5C548.5 872.2 556.5 867.0 560.5 860.5C564.5 854.0 566.8 843.4 563.9 833.2C561.0 823.0 547.9 809.4 543.4 799.1C538.9 788.9 536.0 777.4 536.6 771.7C537.2 766.0 539.5 766.3 546.9 764.9C554.3 763.5 569.0 761.2 581.0 763.2C593.0 765.2 608.9 772.6 618.6 776.9C628.3 781.2 633.4 780.5 639.1 788.8C644.8 797.0 651.6 816.1 652.7 826.4C653.8 836.6 651.0 838.9 645.9 850.3C640.8 861.7 625.4 881.6 622.0 894.7C618.6 907.8 621.4 920.3 625.4 928.8C629.4 937.3 635.1 940.2 645.9 945.9C656.7 951.6 676.6 962.4 690.3 963.0C704.0 963.6 708.0 961.8 727.9 949.3C747.8 936.8 795.6 902.7 809.8 887.9C824.0 873.1 811.6 873.0 813.3 860.5C815.0 848.0 816.1 821.8 820.1 812.7C824.1 803.6 830.4 802.5 837.2 805.9C844.0 809.3 850.6 828.1 861.1 833.2C871.6 838.3 875.6 833.0 900.0 836.6C924.4 840.2 988.8 848.0 1007.2 854.8C1025.6 861.6 1013.7 870.5 1010.4 877.6C1007.1 884.7 995.5 890.1 987.6 897.2C979.7 904.3 967.6 909.7 963.2 920.0C958.9 930.3 953.1 947.7 961.5 959.1C969.9 970.5 993.3 983.5 1013.7 988.5C1034.1 993.5 1072.1 989.0 1083.8 989.1" fill="none" stroke="#a6cbf5" stroke-width="1.2" stroke-linejoin="round"/>
<path d="M470.0 850.0C476.7 851.3 498.3 855.3 510.0 858.0C521.7 860.7 532.3 866.3 540.0 866.0C547.7 865.7 553.0 861.5 556.0 856.0C559.0 850.5 560.8 842.3 558.0 833.0C555.2 823.7 543.3 810.3 539.0 800.0C534.7 789.7 531.2 777.7 532.0 771.0C532.8 764.3 535.8 762.2 544.0 760.0C552.2 757.8 568.3 756.0 581.0 758.0C593.7 760.0 609.3 766.7 620.0 772.0C630.7 777.3 638.3 781.0 645.0 790.0C651.7 799.0 658.7 815.8 660.0 826.0C661.3 836.2 658.0 839.7 653.0 851.0C648.0 862.3 633.5 881.7 630.0 894.0C626.5 906.3 628.7 917.3 632.0 925.0C635.3 932.7 640.3 934.7 650.0 940.0C659.7 945.3 677.5 956.3 690.0 957.0C702.5 957.7 706.2 955.8 725.0 944.0C743.8 932.2 789.2 900.3 803.0 886.0C816.8 871.7 805.8 871.0 808.0 858.0C810.2 845.0 811.0 817.7 816.0 808.0C821.0 798.3 830.0 797.0 838.0 800.0C846.0 803.0 853.7 820.7 864.0 826.0C874.3 831.3 877.3 828.3 900.0 832.0C922.7 835.7 980.8 840.7 1000.0 848.0C1019.2 855.3 1016.3 867.3 1015.0 876.0C1013.7 884.7 999.8 892.2 992.0 900.0C984.2 907.8 972.3 913.5 968.0 923.0C963.7 932.5 958.0 947.0 966.0 957.0C974.0 967.0 997.0 978.5 1016.0 983.0C1035.0 987.5 1069.3 983.8 1080.0 984.0" fill="none" stroke="#a6cbf5" stroke-width="1.2" stroke-linejoin="round"/>
<path d="M955.0 920.0C954.7 926.0 947.7 945.3 953.4 955.9C959.1 966.5 983.2 979.0 989.2 983.6" fill="none" stroke="#a6cbf5" stroke-width="1.2" stroke-linejoin="round"/>
<path d="M1613.6 242.1C1619.5 241.9 1648.7 249.9 1653.6 254.1C1658.5 258.3 1647.9 265.5 1643.0 267.5C1638.1 269.5 1628.4 268.2 1624.2 266.1C1620.0 264.0 1619.8 259.0 1618.0 255.0C1616.2 251.0 1607.7 242.2 1613.6 242.1Z" fill="url(#hatch)" stroke="#1f3d7a" stroke-width="0.8"/>
<path d="M1530.8 315.5C1532.3 314.2 1538.3 312.9 1540.0 314.0C1541.7 315.1 1542.5 320.7 1541.0 322.0C1539.5 323.3 1532.7 323.1 1531.0 322.0C1529.3 320.9 1529.3 316.8 1530.8 315.5Z" fill="url(#hatch)" stroke="#1f3d7a" stroke-width="0.8"/>
<path d="M1536.1 339.6C1537.9 338.7 1549.0 347.5 1549.5 350.2C1550.0 352.9 1541.0 357.4 1538.8 355.6C1536.6 353.8 1534.3 340.5 1536.1 339.6Z" fill="url(#hatch)" stroke="#1f3d7a" stroke-width="0.8"/>
<path d="M1546.8 379.6C1549.9 378.7 1553.5 386.3 1554.8 390.3C1556.1 394.3 1557.9 402.7 1554.8 403.6C1551.7 404.5 1537.4 399.6 1536.1 395.6C1534.8 391.6 1543.7 380.5 1546.8 379.6Z" fill="url(#hatch)" stroke="#1f3d7a" stroke-width="0.8"/>
<path d="M1626.9 451.7C1629.1 451.0 1651.4 455.4 1653.6 457.0C1655.8 458.6 1644.8 461.9 1640.3 461.0C1635.8 460.1 1624.7 452.4 1626.9 451.7Z" fill="url(#hatch)" stroke="#1f3d7a" stroke-width="0.8"/>
<path d="M1699.0 471.7C1701.7 470.8 1716.8 472.0 1720.4 473.1C1724.0 474.2 1723.1 477.5 1720.4 478.4C1717.7 479.3 1708.0 479.5 1704.4 478.4C1700.8 477.3 1696.3 472.6 1699.0 471.7Z" fill="url(#hatch)" stroke="#1f3d7a" stroke-width="0.8"/>
<path d="M1346.3 166.0C1348.1 167.3 1354.8 183.8 1355.6 187.7C1356.4 191.6 1352.8 190.6 1351.0 189.3C1349.2 188.0 1345.5 183.9 1344.7 180.0C1343.9 176.1 1344.5 164.7 1346.3 166.0Z" fill="url(#hatch)" stroke="#1f3d7a" stroke-width="0.8"/>
<path d="M1186.3 214.1C1186.0 213.1 1192.5 211.8 1194.1 212.6C1195.7 213.4 1197.0 218.6 1195.7 218.8C1194.4 219.1 1186.6 215.1 1186.3 214.1Z" fill="url(#hatch)" stroke="#1f3d7a" stroke-width="0.8"/>
<path d="M1201.9 327.5C1203.7 327.5 1211.5 345.6 1211.2 349.2C1210.9 352.8 1201.8 352.8 1200.3 349.2C1198.8 345.6 1200.1 327.5 1201.9 327.5Z" fill="url(#hatch)" stroke="#1f3d7a" stroke-width="0.8"/>
<path d="M1385.1 364.8C1387.9 362.2 1403.8 352.8 1408.4 352.3C1413.1 351.8 1415.8 359.1 1413.0 361.7C1410.2 364.3 1396.0 367.4 1391.3 367.9C1386.6 368.4 1382.2 367.4 1385.1 364.8Z" fill="url(#hatch)" stroke="#1f3d7a" stroke-width="0.8"/>
<path d="M1077.0 235.0C1078.2 233.3 1083.5 232.7 1085.0 234.0C1086.5 235.3 1087.2 241.3 1086.0 243.0C1084.8 244.7 1079.5 245.3 1078.0 244.0C1076.5 242.7 1075.8 236.7 1077.0 235.0Z" fill="url(#hatch)" stroke="#1f3d7a" stroke-width="0.8"/>
<path d="M1658.0 512.0C1658.7 511.2 1663.7 512.8 1664.0 514.0C1664.3 515.2 1661.0 519.3 1660.0 519.0C1659.0 518.7 1657.3 512.8 1658.0 512.0Z" fill="url(#hatch)" stroke="#1f3d7a" stroke-width="0.8"/>
<path d="M1695.0 528.0C1695.2 526.8 1698.5 526.0 1699.0 527.0C1699.5 528.0 1698.7 533.8 1698.0 534.0C1697.3 534.2 1694.8 529.2 1695.0 528.0Z" fill="url(#hatch)" stroke="#1f3d7a" stroke-width="0.8"/>
<path d="M1649.0 549.0C1649.5 548.3 1655.3 551.7 1656.0 553.0C1656.7 554.3 1654.2 557.7 1653.0 557.0C1651.8 556.3 1648.5 549.7 1649.0 549.0Z" fill="url(#hatch)" stroke="#1f3d7a" stroke-width="0.8"/>
<path d="M1729.0 536.0C1729.3 535.3 1734.3 536.2 1735.0 537.0C1735.7 537.8 1734.0 541.2 1733.0 541.0C1732.0 540.8 1728.7 536.7 1729.0 536.0Z" fill="url(#hatch)" stroke="#1f3d7a" stroke-width="0.8"/>
<path d="M1701.0 471.0C1703.7 470.2 1716.8 471.8 1720.0 473.0C1723.2 474.2 1722.7 477.2 1720.0 478.0C1717.3 478.8 1707.2 479.2 1704.0 478.0C1700.8 476.8 1698.3 471.8 1701.0 471.0Z" fill="url(#hatch)" stroke="#1f3d7a" stroke-width="0.8"/>
<circle cx="1584.2" cy="192.7" r="5" fill="url(#hatch)" stroke="#1f3d7a" stroke-width="0.8"/>
<circle cx="1715" cy="237.6" r="4" fill="url(#hatch)" stroke="#1f3d7a" stroke-width="0.8"/>
<circle cx="1183.2" cy="194" r="2.5" fill="url(#hatch)" stroke="#1f3d7a" stroke-width="0.8"/>
<path d="M400.0 240.5C407.8 244.7 425.9 257.1 446.6 265.4C467.3 273.7 495.7 279.8 524.2 290.2C552.7 300.6 595.1 316.6 617.4 327.5C639.7 338.4 645.4 346.6 657.8 355.4C670.2 364.2 682.6 376.4 691.9 380.3C701.2 384.2 703.4 379.5 713.7 378.7C724.1 377.9 741.1 377.4 754.0 375.6C766.9 373.8 782.8 369.3 791.3 367.9C799.8 366.5 802.7 367.1 805.0 367.0 M691.9 380.3C693.2 383.9 699.2 392.7 699.7 402.0C700.2 411.3 693.7 424.8 695.0 436.2C696.3 447.6 699.7 461.0 707.5 470.3C715.3 479.6 732.9 486.3 741.6 492.1C750.4 497.9 756.9 502.9 760.0 505.0 M713.7 378.7C716.3 366.0 724.6 318.9 729.2 302.6C733.9 286.3 734.4 290.7 741.6 280.9C748.9 271.1 767.5 249.8 772.7 243.6 M747.8 166.0C747.3 170.1 743.0 181.8 744.7 190.8C746.4 199.9 752.2 211.1 758.0 220.3C763.8 229.5 772.1 236.8 779.2 246.2C786.3 255.6 794.6 270.4 800.5 276.9C806.4 283.4 809.1 284.0 814.6 285.2C820.1 286.4 828.8 283.0 833.5 284.0C838.2 285.0 839.9 288.4 843.0 291.1C846.1 293.8 850.8 298.5 852.4 300.0 M754.0 375.6C760.2 379.5 783.6 394.0 791.3 398.9C799.0 403.8 798.5 404.0 800.0 405.0 M754.0 375.6 L769.6 349.2 M702.8 313.0 L723.0 318.0 M729.7 300.0C733.2 292.6 743.4 265.2 750.9 255.7C758.4 246.1 770.6 244.9 774.5 242.7 M824.1 281.6C826.5 278.5 828.0 270.7 838.2 262.8C848.4 254.9 871.2 240.7 885.4 234.4C899.6 228.1 914.6 227.0 923.2 225.0C931.9 223.0 932.2 221.4 937.3 222.6C942.4 223.8 949.9 228.5 953.9 232.1C957.9 235.7 958.2 241.8 961.0 243.9C963.8 246.1 968.8 244.8 970.4 245.0 M885.4 234.4C885.4 226.9 883.0 199.0 885.4 189.6C887.8 180.2 896.8 181.7 899.6 177.8C902.4 173.9 901.6 168.0 902.0 166.0 M868.9 166.0C870.9 167.6 875.2 173.6 880.7 175.4C886.2 177.2 896.5 178.2 902.0 176.6C907.5 175.0 911.8 167.8 913.8 166.0 M991.6 215.6 L999.9 243.9 M994.0 166.0C992.4 168.4 982.1 175.3 984.5 180.2C986.9 185.1 1003.0 194.3 1008.1 195.5C1013.2 196.7 1013.2 192.1 1015.2 187.2C1017.2 182.3 1019.1 169.5 1019.9 166.0 M1064.8 166.0C1064.8 170.7 1066.4 186.0 1064.8 194.3C1063.2 202.6 1053.7 212.1 1055.3 215.6C1056.9 219.1 1063.4 216.8 1074.2 215.6C1085.0 214.4 1108.5 209.8 1120.0 208.5C1131.5 207.2 1132.4 209.6 1142.9 207.9C1153.4 206.2 1171.8 197.3 1183.2 198.6C1194.6 199.9 1201.4 205.6 1211.2 215.7C1221.0 225.8 1237.0 244.2 1242.2 259.2C1247.4 274.2 1245.8 287.2 1242.2 305.8C1238.6 324.4 1224.1 360.1 1220.5 371.0 M1071.9 166.0C1070.3 175.8 1061.6 213.2 1062.4 225.0C1063.2 236.8 1072.3 235.6 1076.6 236.8C1080.9 238.0 1082.9 230.1 1088.4 232.1C1093.9 234.1 1104.7 244.1 1109.6 248.6C1114.5 253.1 1117.6 252.3 1118.0 259.2C1118.4 266.1 1117.5 283.0 1111.8 290.2C1106.1 297.4 1090.1 294.3 1083.9 302.6C1077.7 310.9 1078.5 332.7 1074.5 339.9C1070.5 347.1 1062.4 345.0 1060.0 346.0 M1139.8 207.9C1139.8 212.3 1138.8 229.4 1139.8 234.3C1140.8 239.2 1144.7 236.9 1145.7 237.4 M1000.0 194.0C1002.6 192.4 1012.4 189.3 1015.5 184.6C1018.6 179.9 1018.1 169.1 1018.6 166.0 M400.0 626.6C426.7 619.5 527.3 593.1 560.0 584.0C592.7 574.9 586.0 577.3 596.0 572.0C606.0 566.7 611.3 560.7 620.0 552.0C628.7 543.3 638.4 525.5 648.4 520.0C658.4 514.5 669.6 519.0 680.0 519.0C690.4 519.0 702.4 521.4 710.6 520.0C718.8 518.6 726.1 512.2 729.2 510.7 M738.5 554.2 L747.8 507.6 M757.0 529.3 L740.0 505.0 M772.7 566.0C776.8 563.5 786.1 562.8 797.5 551.0C808.9 539.2 823.4 516.4 841.0 495.2C858.6 474.0 883.3 439.9 903.0 423.8C922.7 407.8 942.8 405.6 959.0 398.9C975.2 392.2 982.8 389.1 1000.0 383.4C1017.2 377.7 1039.3 368.7 1062.1 364.8C1084.9 360.9 1110.7 359.1 1136.6 360.1C1162.5 361.1 1187.4 363.8 1217.4 371.0C1247.4 378.2 1292.5 396.1 1316.8 403.6C1341.1 411.1 1332.9 407.5 1363.4 416.0C1393.9 424.5 1455.7 441.1 1500.0 454.8C1544.3 468.5 1603.3 490.0 1629.0 498.0C1654.7 506.0 1638.9 502.9 1653.9 502.7C1668.9 502.4 1707.2 495.7 1719.1 496.5C1731.0 497.3 1722.4 505.0 1725.3 507.3C1728.2 509.6 1734.4 509.9 1736.2 510.4 M800.6 566.0C806.3 556.3 822.4 524.6 834.8 507.6C847.2 490.6 859.3 476.2 875.2 464.1C891.1 452.0 915.9 442.4 930.0 435.0C944.1 427.6 955.0 422.5 960.0 420.0 M1059.0 346.1C1065.8 347.6 1087.6 354.0 1100.0 355.0C1112.4 356.0 1127.4 351.4 1133.5 352.3C1139.6 353.2 1136.1 358.8 1136.6 360.1 M1136.6 360.1C1131.9 366.1 1111.8 384.2 1108.7 395.8C1105.6 407.4 1113.3 419.1 1118.0 430.0C1122.7 440.9 1122.1 443.9 1136.6 461.0C1151.1 478.1 1193.6 520.6 1205.0 532.5 M1245.3 302.6C1248.9 297.2 1259.3 275.4 1267.1 270.0C1274.9 264.6 1286.7 268.2 1291.9 270.0C1297.1 271.8 1293.9 277.5 1298.1 280.9C1302.2 284.3 1314.2 283.5 1316.8 290.2C1319.4 296.9 1310.1 311.5 1313.7 321.3C1317.3 331.1 1338.0 335.5 1338.5 349.2C1339.0 362.9 1320.4 394.5 1316.8 403.6 M1274.8 265.4C1275.1 263.3 1270.4 254.3 1276.4 253.0C1282.4 251.7 1304.9 256.8 1310.6 257.6 M1417.7 240.5C1416.7 251.4 1411.2 293.9 1411.5 305.8C1411.8 317.7 1419.6 305.3 1419.3 312.0C1419.0 318.7 1415.6 335.8 1409.9 346.1C1404.2 356.5 1391.3 362.7 1385.1 374.1C1378.9 385.5 1374.8 407.7 1372.7 414.4 M1396.0 335.3 L1409.9 339.9 M1413.0 361.7 L1430.1 372.5 M1360.2 420.7C1367.5 429.2 1390.2 463.6 1403.7 471.9C1417.2 480.2 1431.9 469.3 1441.0 470.3C1450.1 471.3 1455.2 476.8 1458.1 478.1 M1629.0 499.6C1632.9 502.2 1633.2 503.0 1652.4 515.1C1671.6 527.2 1728.7 562.9 1744.0 572.5 M1650.8 516.6C1645.6 522.8 1635.3 541.5 1619.8 553.9C1604.3 566.3 1573.1 583.7 1557.6 591.2C1542.1 598.7 1536.9 599.7 1526.6 598.9C1516.2 598.1 1500.7 588.6 1495.5 586.5 M1744.0 592.7C1736.2 603.8 1705.2 641.6 1697.4 659.5C1689.6 677.4 1704.7 681.3 1697.4 699.9C1690.2 718.5 1667.9 748.1 1653.9 771.2C1639.9 794.3 1631.3 811.7 1613.3 838.7C1595.3 865.7 1561.6 912.3 1545.8 933.3C1530.0 954.3 1529.2 960.0 1518.7 964.9C1508.2 969.8 1491.7 961.9 1482.7 962.6C1473.7 963.4 1470.0 969.2 1464.7 969.4C1459.5 969.6 1459.8 962.1 1451.2 964.0C1442.6 965.9 1419.3 977.8 1412.9 980.6 M1737.8 383.1C1729.0 393.5 1698.0 432.8 1685.0 445.2C1672.0 457.6 1665.3 450.6 1660.1 457.6C1654.9 464.6 1654.9 482.2 1653.9 487.1 M1685.0 445.2 L1700.5 494.9 M1557.6 406.4C1570.0 413.4 1618.2 443.4 1632.2 448.3C1646.2 453.2 1633.7 436.1 1641.5 435.9C1649.3 435.6 1672.6 445.0 1678.8 446.8 M1647.7 380.0 L1644.6 451.4 M1514.8 254.1C1513.5 251.0 1505.9 240.7 1506.8 235.4C1507.7 230.1 1514.3 224.8 1520.1 222.1C1525.9 219.4 1535.7 220.7 1541.5 219.4C1547.3 218.1 1545.0 215.2 1554.8 214.1C1564.6 213.0 1588.2 212.7 1600.2 212.7C1612.2 212.7 1618.4 212.1 1626.9 214.1C1635.4 216.1 1643.0 220.7 1651.0 224.7C1659.0 228.7 1665.7 234.1 1675.0 238.1C1684.3 242.1 1697.2 245.2 1707.0 248.8C1716.8 252.4 1727.5 254.6 1733.7 259.5C1739.9 264.4 1742.2 269.7 1744.4 278.1C1746.6 286.6 1746.6 297.7 1747.1 310.2C1747.5 322.7 1748.0 342.2 1747.1 352.9C1746.2 363.6 1748.4 363.2 1741.7 374.3C1735.0 385.4 1717.2 407.2 1707.0 419.7C1696.8 432.1 1688.3 443.2 1680.3 449.0C1672.3 454.8 1662.5 453.5 1659.0 454.4 M1616.2 187.4 L1621.6 206.1 M1688.3 214.1 L1744.4 203.4 M1656.3 264.8C1659.4 270.6 1671.0 290.1 1675.0 299.5C1679.0 308.9 1675.8 314.7 1680.3 320.9C1684.8 327.1 1697.7 331.6 1701.7 336.9C1705.7 342.2 1705.3 348.4 1704.4 352.9C1703.5 357.3 1700.3 355.6 1696.3 363.6C1692.3 371.6 1686.5 392.1 1680.3 401.0C1674.1 409.9 1662.5 414.3 1659.0 417.0 M1653.6 320.9C1652.7 333.3 1649.6 374.2 1648.3 395.6C1647.0 417.0 1644.7 433.9 1645.6 449.0C1646.5 464.1 1652.3 480.2 1653.6 486.4 M1653.6 336.9C1658.9 337.3 1679.5 336.9 1685.7 339.6C1691.9 342.3 1690.1 350.7 1691.0 352.9 M1653.6 347.6 L1744.4 362.3 M1440.0 302.2C1440.9 306.2 1440.0 317.8 1445.3 326.2C1450.6 334.6 1459.5 342.7 1472.0 352.9C1484.5 363.1 1505.4 378.7 1520.1 387.6C1534.8 396.5 1546.8 399.2 1560.2 406.3C1573.6 413.4 1589.1 423.3 1600.2 430.4C1611.3 437.5 1613.6 446.3 1626.9 449.0C1640.2 451.7 1669.6 440.2 1680.3 446.4C1691.0 452.6 1689.2 479.7 1691.0 486.4 M1440.0 470.4 L1458.7 478.4 M420.5 986.9C434.2 977.8 480.9 949.7 502.5 932.3C524.1 914.9 533.2 902.1 550.3 882.7C567.4 863.3 590.7 832.0 604.9 816.1C619.1 800.2 612.9 809.9 635.7 787.1C658.5 764.3 717.0 703.7 741.5 679.5C766.0 655.3 773.4 652.2 782.5 642.0C791.6 631.8 791.6 626.8 796.2 618.1C800.8 609.4 804.4 602.2 810.0 590.0C815.6 577.8 823.3 556.7 830.0 545.0C836.7 533.3 846.7 524.2 850.0 520.0 M550.3 882.7C552.0 885.0 558.2 887.6 560.5 896.4C562.8 905.2 560.5 924.0 563.9 935.7C567.3 947.4 578.1 961.3 581.0 966.4 M700.5 683.0C707.9 674.5 732.5 652.2 745.0 631.7C757.5 611.2 770.6 572.0 775.7 560.0 M758.6 642.0 L786.0 650.5 M1182.0 510.0 L1203.0 528.2 M905.2 423.0C909.6 430.6 922.6 460.0 931.3 468.7C940.0 477.4 945.4 468.7 957.4 475.2C969.4 481.7 990.5 501.6 1003.0 507.8C1015.5 514.1 1022.6 508.3 1032.4 512.7C1042.2 517.1 1057.1 530.5 1062.0 534.0 M1712.0 560.0 L1735.0 550.0" fill="none" stroke="#f5e28e" stroke-width="3" stroke-linejoin="round" stroke-linecap="round"/>
<path d="M400.0 240.5C407.8 244.7 425.9 257.1 446.6 265.4C467.3 273.7 495.7 279.8 524.2 290.2C552.7 300.6 595.1 316.6 617.4 327.5C639.7 338.4 645.4 346.6 657.8 355.4C670.2 364.2 682.6 376.4 691.9 380.3C701.2 384.2 703.4 379.5 713.7 378.7C724.1 377.9 741.1 377.4 754.0 375.6C766.9 373.8 782.8 369.3 791.3 367.9C799.8 366.5 802.7 367.1 805.0 367.0 M691.9 380.3C693.2 383.9 699.2 392.7 699.7 402.0C700.2 411.3 693.7 424.8 695.0 436.2C696.3 447.6 699.7 461.0 707.5 470.3C715.3 479.6 732.9 486.3 741.6 492.1C750.4 497.9 756.9 502.9 760.0 505.0 M713.7 378.7C716.3 366.0 724.6 318.9 729.2 302.6C733.9 286.3 734.4 290.7 741.6 280.9C748.9 271.1 767.5 249.8 772.7 243.6 M747.8 166.0C747.3 170.1 743.0 181.8 744.7 190.8C746.4 199.9 752.2 211.1 758.0 220.3C763.8 229.5 772.1 236.8 779.2 246.2C786.3 255.6 794.6 270.4 800.5 276.9C806.4 283.4 809.1 284.0 814.6 285.2C820.1 286.4 828.8 283.0 833.5 284.0C838.2 285.0 839.9 288.4 843.0 291.1C846.1 293.8 850.8 298.5 852.4 300.0 M754.0 375.6C760.2 379.5 783.6 394.0 791.3 398.9C799.0 403.8 798.5 404.0 800.0 405.0 M754.0 375.6 L769.6 349.2 M702.8 313.0 L723.0 318.0 M729.7 300.0C733.2 292.6 743.4 265.2 750.9 255.7C758.4 246.1 770.6 244.9 774.5 242.7 M824.1 281.6C826.5 278.5 828.0 270.7 838.2 262.8C848.4 254.9 871.2 240.7 885.4 234.4C899.6 228.1 914.6 227.0 923.2 225.0C931.9 223.0 932.2 221.4 937.3 222.6C942.4 223.8 949.9 228.5 953.9 232.1C957.9 235.7 958.2 241.8 961.0 243.9C963.8 246.1 968.8 244.8 970.4 245.0 M885.4 234.4C885.4 226.9 883.0 199.0 885.4 189.6C887.8 180.2 896.8 181.7 899.6 177.8C902.4 173.9 901.6 168.0 902.0 166.0 M868.9 166.0C870.9 167.6 875.2 173.6 880.7 175.4C886.2 177.2 896.5 178.2 902.0 176.6C907.5 175.0 911.8 167.8 913.8 166.0 M991.6 215.6 L999.9 243.9 M994.0 166.0C992.4 168.4 982.1 175.3 984.5 180.2C986.9 185.1 1003.0 194.3 1008.1 195.5C1013.2 196.7 1013.2 192.1 1015.2 187.2C1017.2 182.3 1019.1 169.5 1019.9 166.0 M1064.8 166.0C1064.8 170.7 1066.4 186.0 1064.8 194.3C1063.2 202.6 1053.7 212.1 1055.3 215.6C1056.9 219.1 1063.4 216.8 1074.2 215.6C1085.0 214.4 1108.5 209.8 1120.0 208.5C1131.5 207.2 1132.4 209.6 1142.9 207.9C1153.4 206.2 1171.8 197.3 1183.2 198.6C1194.6 199.9 1201.4 205.6 1211.2 215.7C1221.0 225.8 1237.0 244.2 1242.2 259.2C1247.4 274.2 1245.8 287.2 1242.2 305.8C1238.6 324.4 1224.1 360.1 1220.5 371.0 M1071.9 166.0C1070.3 175.8 1061.6 213.2 1062.4 225.0C1063.2 236.8 1072.3 235.6 1076.6 236.8C1080.9 238.0 1082.9 230.1 1088.4 232.1C1093.9 234.1 1104.7 244.1 1109.6 248.6C1114.5 253.1 1117.6 252.3 1118.0 259.2C1118.4 266.1 1117.5 283.0 1111.8 290.2C1106.1 297.4 1090.1 294.3 1083.9 302.6C1077.7 310.9 1078.5 332.7 1074.5 339.9C1070.5 347.1 1062.4 345.0 1060.0 346.0 M1139.8 207.9C1139.8 212.3 1138.8 229.4 1139.8 234.3C1140.8 239.2 1144.7 236.9 1145.7 237.4 M1000.0 194.0C1002.6 192.4 1012.4 189.3 1015.5 184.6C1018.6 179.9 1018.1 169.1 1018.6 166.0 M400.0 626.6C426.7 619.5 527.3 593.1 560.0 584.0C592.7 574.9 586.0 577.3 596.0 572.0C606.0 566.7 611.3 560.7 620.0 552.0C628.7 543.3 638.4 525.5 648.4 520.0C658.4 514.5 669.6 519.0 680.0 519.0C690.4 519.0 702.4 521.4 710.6 520.0C718.8 518.6 726.1 512.2 729.2 510.7 M738.5 554.2 L747.8 507.6 M757.0 529.3 L740.0 505.0 M772.7 566.0C776.8 563.5 786.1 562.8 797.5 551.0C808.9 539.2 823.4 516.4 841.0 495.2C858.6 474.0 883.3 439.9 903.0 423.8C922.7 407.8 942.8 405.6 959.0 398.9C975.2 392.2 982.8 389.1 1000.0 383.4C1017.2 377.7 1039.3 368.7 1062.1 364.8C1084.9 360.9 1110.7 359.1 1136.6 360.1C1162.5 361.1 1187.4 363.8 1217.4 371.0C1247.4 378.2 1292.5 396.1 1316.8 403.6C1341.1 411.1 1332.9 407.5 1363.4 416.0C1393.9 424.5 1455.7 441.1 1500.0 454.8C1544.3 468.5 1603.3 490.0 1629.0 498.0C1654.7 506.0 1638.9 502.9 1653.9 502.7C1668.9 502.4 1707.2 495.7 1719.1 496.5C1731.0 497.3 1722.4 505.0 1725.3 507.3C1728.2 509.6 1734.4 509.9 1736.2 510.4 M800.6 566.0C806.3 556.3 822.4 524.6 834.8 507.6C847.2 490.6 859.3 476.2 875.2 464.1C891.1 452.0 915.9 442.4 930.0 435.0C944.1 427.6 955.0 422.5 960.0 420.0 M1059.0 346.1C1065.8 347.6 1087.6 354.0 1100.0 355.0C1112.4 356.0 1127.4 351.4 1133.5 352.3C1139.6 353.2 1136.1 358.8 1136.6 360.1 M1136.6 360.1C1131.9 366.1 1111.8 384.2 1108.7 395.8C1105.6 407.4 1113.3 419.1 1118.0 430.0C1122.7 440.9 1122.1 443.9 1136.6 461.0C1151.1 478.1 1193.6 520.6 1205.0 532.5 M1245.3 302.6C1248.9 297.2 1259.3 275.4 1267.1 270.0C1274.9 264.6 1286.7 268.2 1291.9 270.0C1297.1 271.8 1293.9 277.5 1298.1 280.9C1302.2 284.3 1314.2 283.5 1316.8 290.2C1319.4 296.9 1310.1 311.5 1313.7 321.3C1317.3 331.1 1338.0 335.5 1338.5 349.2C1339.0 362.9 1320.4 394.5 1316.8 403.6 M1274.8 265.4C1275.1 263.3 1270.4 254.3 1276.4 253.0C1282.4 251.7 1304.9 256.8 1310.6 257.6 M1417.7 240.5C1416.7 251.4 1411.2 293.9 1411.5 305.8C1411.8 317.7 1419.6 305.3 1419.3 312.0C1419.0 318.7 1415.6 335.8 1409.9 346.1C1404.2 356.5 1391.3 362.7 1385.1 374.1C1378.9 385.5 1374.8 407.7 1372.7 414.4 M1396.0 335.3 L1409.9 339.9 M1413.0 361.7 L1430.1 372.5 M1360.2 420.7C1367.5 429.2 1390.2 463.6 1403.7 471.9C1417.2 480.2 1431.9 469.3 1441.0 470.3C1450.1 471.3 1455.2 476.8 1458.1 478.1 M1629.0 499.6C1632.9 502.2 1633.2 503.0 1652.4 515.1C1671.6 527.2 1728.7 562.9 1744.0 572.5 M1650.8 516.6C1645.6 522.8 1635.3 541.5 1619.8 553.9C1604.3 566.3 1573.1 583.7 1557.6 591.2C1542.1 598.7 1536.9 599.7 1526.6 598.9C1516.2 598.1 1500.7 588.6 1495.5 586.5 M1744.0 592.7C1736.2 603.8 1705.2 641.6 1697.4 659.5C1689.6 677.4 1704.7 681.3 1697.4 699.9C1690.2 718.5 1667.9 748.1 1653.9 771.2C1639.9 794.3 1631.3 811.7 1613.3 838.7C1595.3 865.7 1561.6 912.3 1545.8 933.3C1530.0 954.3 1529.2 960.0 1518.7 964.9C1508.2 969.8 1491.7 961.9 1482.7 962.6C1473.7 963.4 1470.0 969.2 1464.7 969.4C1459.5 969.6 1459.8 962.1 1451.2 964.0C1442.6 965.9 1419.3 977.8 1412.9 980.6 M1737.8 383.1C1729.0 393.5 1698.0 432.8 1685.0 445.2C1672.0 457.6 1665.3 450.6 1660.1 457.6C1654.9 464.6 1654.9 482.2 1653.9 487.1 M1685.0 445.2 L1700.5 494.9 M1557.6 406.4C1570.0 413.4 1618.2 443.4 1632.2 448.3C1646.2 453.2 1633.7 436.1 1641.5 435.9C1649.3 435.6 1672.6 445.0 1678.8 446.8 M1647.7 380.0 L1644.6 451.4 M1514.8 254.1C1513.5 251.0 1505.9 240.7 1506.8 235.4C1507.7 230.1 1514.3 224.8 1520.1 222.1C1525.9 219.4 1535.7 220.7 1541.5 219.4C1547.3 218.1 1545.0 215.2 1554.8 214.1C1564.6 213.0 1588.2 212.7 1600.2 212.7C1612.2 212.7 1618.4 212.1 1626.9 214.1C1635.4 216.1 1643.0 220.7 1651.0 224.7C1659.0 228.7 1665.7 234.1 1675.0 238.1C1684.3 242.1 1697.2 245.2 1707.0 248.8C1716.8 252.4 1727.5 254.6 1733.7 259.5C1739.9 264.4 1742.2 269.7 1744.4 278.1C1746.6 286.6 1746.6 297.7 1747.1 310.2C1747.5 322.7 1748.0 342.2 1747.1 352.9C1746.2 363.6 1748.4 363.2 1741.7 374.3C1735.0 385.4 1717.2 407.2 1707.0 419.7C1696.8 432.1 1688.3 443.2 1680.3 449.0C1672.3 454.8 1662.5 453.5 1659.0 454.4 M1616.2 187.4 L1621.6 206.1 M1688.3 214.1 L1744.4 203.4 M1656.3 264.8C1659.4 270.6 1671.0 290.1 1675.0 299.5C1679.0 308.9 1675.8 314.7 1680.3 320.9C1684.8 327.1 1697.7 331.6 1701.7 336.9C1705.7 342.2 1705.3 348.4 1704.4 352.9C1703.5 357.3 1700.3 355.6 1696.3 363.6C1692.3 371.6 1686.5 392.1 1680.3 401.0C1674.1 409.9 1662.5 414.3 1659.0 417.0 M1653.6 320.9C1652.7 333.3 1649.6 374.2 1648.3 395.6C1647.0 417.0 1644.7 433.9 1645.6 449.0C1646.5 464.1 1652.3 480.2 1653.6 486.4 M1653.6 336.9C1658.9 337.3 1679.5 336.9 1685.7 339.6C1691.9 342.3 1690.1 350.7 1691.0 352.9 M1653.6 347.6 L1744.4 362.3 M1440.0 302.2C1440.9 306.2 1440.0 317.8 1445.3 326.2C1450.6 334.6 1459.5 342.7 1472.0 352.9C1484.5 363.1 1505.4 378.7 1520.1 387.6C1534.8 396.5 1546.8 399.2 1560.2 406.3C1573.6 413.4 1589.1 423.3 1600.2 430.4C1611.3 437.5 1613.6 446.3 1626.9 449.0C1640.2 451.7 1669.6 440.2 1680.3 446.4C1691.0 452.6 1689.2 479.7 1691.0 486.4 M1440.0 470.4 L1458.7 478.4 M420.5 986.9C434.2 977.8 480.9 949.7 502.5 932.3C524.1 914.9 533.2 902.1 550.3 882.7C567.4 863.3 590.7 832.0 604.9 816.1C619.1 800.2 612.9 809.9 635.7 787.1C658.5 764.3 717.0 703.7 741.5 679.5C766.0 655.3 773.4 652.2 782.5 642.0C791.6 631.8 791.6 626.8 796.2 618.1C800.8 609.4 804.4 602.2 810.0 590.0C815.6 577.8 823.3 556.7 830.0 545.0C836.7 533.3 846.7 524.2 850.0 520.0 M550.3 882.7C552.0 885.0 558.2 887.6 560.5 896.4C562.8 905.2 560.5 924.0 563.9 935.7C567.3 947.4 578.1 961.3 581.0 966.4 M700.5 683.0C707.9 674.5 732.5 652.2 745.0 631.7C757.5 611.2 770.6 572.0 775.7 560.0 M758.6 642.0 L786.0 650.5 M1182.0 510.0 L1203.0 528.2 M905.2 423.0C909.6 430.6 922.6 460.0 931.3 468.7C940.0 477.4 945.4 468.7 957.4 475.2C969.4 481.7 990.5 501.6 1003.0 507.8C1015.5 514.1 1022.6 508.3 1032.4 512.7C1042.2 517.1 1057.1 530.5 1062.0 534.0 M1712.0 560.0 L1735.0 550.0" fill="none" stroke="#c0bdb8" stroke-width="1.6" stroke-dasharray="1.5 1.3"/>
<path d="M785.9 655.6C788.5 659.6 798.7 667.0 801.3 679.5C803.9 692.0 802.1 710.9 801.3 730.8C800.4 750.7 801.0 780.9 796.2 799.1C791.4 817.3 776.3 828.0 772.3 840.0C768.3 852.0 769.8 864.0 772.3 870.8C774.8 877.6 785.0 879.3 787.6 881.0 M796.2 710.3C799.1 710.3 808.2 705.8 813.3 710.3C818.4 714.8 818.9 732.8 826.9 737.6C834.9 742.4 852.6 735.9 861.1 739.3C869.6 742.7 879.2 750.4 878.1 758.1C877.0 765.8 855.9 779.1 854.2 785.4C852.5 791.7 865.0 788.9 867.9 795.7C870.8 802.5 865.9 819.6 871.3 826.4C876.6 833.2 895.2 834.9 900.0 836.6 M809.8 799.1C813.2 798.5 822.9 795.1 830.3 795.7C837.7 796.3 850.2 801.4 854.2 802.5 M1065.9 691.7C1067.5 693.9 1071.2 699.4 1075.6 704.8C1079.9 710.2 1084.7 719.1 1092.0 724.3C1099.3 729.5 1112.9 738.0 1119.7 735.8C1126.5 733.6 1130.5 718.9 1132.7 711.3C1134.9 703.7 1125.9 697.7 1132.7 690.1C1139.5 682.5 1164.0 670.3 1173.5 665.7C1183.0 661.1 1183.8 660.8 1189.8 662.4C1195.8 664.0 1206.0 673.2 1209.3 675.4 M1100.1 699.9 L1132.7 690.1 M1119.7 737.4C1105.8 754.2 1048.2 815.1 1036.5 838.5C1024.8 861.9 1050.7 867.8 1049.6 877.6C1048.5 887.4 1033.3 893.9 1030.0 897.2 M1317.6 607.8C1307.2 612.5 1273.0 628.3 1255.0 636.3C1237.0 644.3 1216.9 649.4 1209.3 655.9C1201.7 662.4 1209.3 672.1 1209.3 675.4 M1209.3 659.1C1219.1 658.6 1259.3 650.5 1268.0 655.9C1276.7 661.3 1266.9 684.6 1261.5 691.7C1256.1 698.8 1239.2 694.5 1235.4 698.3C1231.6 702.1 1232.2 704.8 1238.7 714.6C1245.2 724.4 1264.4 743.4 1274.6 757.0C1284.8 770.6 1294.1 783.9 1300.0 796.1C1305.9 808.3 1311.7 817.7 1310.0 830.0C1308.3 842.3 1294.8 859.9 1290.0 870.0C1285.2 880.1 1280.9 881.3 1281.1 890.7C1281.2 900.1 1293.1 917.3 1290.9 926.5C1288.7 935.7 1278.3 939.9 1268.0 946.1C1257.7 952.4 1247.4 971.9 1228.9 964.0C1210.4 956.1 1173.0 906.9 1157.2 898.8C1141.4 890.6 1152.8 909.7 1134.3 915.1C1115.8 920.5 1066.4 930.0 1046.3 931.4C1026.2 932.8 1019.1 924.6 1013.7 923.3 M880.0 832.0C897.4 833.1 961.5 840.7 984.3 838.5C1007.1 836.3 1009.4 821.1 1017.0 818.9C1024.6 816.7 1026.8 821.6 1030.0 825.4C1033.2 829.2 1036.0 834.6 1036.5 841.7C1037.0 848.8 1033.8 863.4 1033.3 867.8 M974.6 924.9C977.9 924.9 986.0 929.0 994.1 924.9C1002.2 920.8 1018.6 904.5 1023.5 900.4 M1211.4 535.2C1229.1 547.3 1304.5 593.6 1317.6 607.8C1330.6 622.0 1306.0 613.4 1289.7 620.4C1273.4 627.4 1231.5 644.9 1219.8 649.8 M1198.8 533.8C1194.8 538.7 1179.4 557.6 1175.0 563.0C1170.6 568.4 1171.4 563.5 1172.3 565.9C1173.2 568.2 1173.8 570.8 1180.6 577.1C1187.3 583.4 1207.4 599.3 1212.8 603.7" fill="none" stroke="#e9e3cf" stroke-width="2.4" stroke-linejoin="round"/>
<path d="M785.9 655.6C788.5 659.6 798.7 667.0 801.3 679.5C803.9 692.0 802.1 710.9 801.3 730.8C800.4 750.7 801.0 780.9 796.2 799.1C791.4 817.3 776.3 828.0 772.3 840.0C768.3 852.0 769.8 864.0 772.3 870.8C774.8 877.6 785.0 879.3 787.6 881.0 M796.2 710.3C799.1 710.3 808.2 705.8 813.3 710.3C818.4 714.8 818.9 732.8 826.9 737.6C834.9 742.4 852.6 735.9 861.1 739.3C869.6 742.7 879.2 750.4 878.1 758.1C877.0 765.8 855.9 779.1 854.2 785.4C852.5 791.7 865.0 788.9 867.9 795.7C870.8 802.5 865.9 819.6 871.3 826.4C876.6 833.2 895.2 834.9 900.0 836.6 M809.8 799.1C813.2 798.5 822.9 795.1 830.3 795.7C837.7 796.3 850.2 801.4 854.2 802.5 M1065.9 691.7C1067.5 693.9 1071.2 699.4 1075.6 704.8C1079.9 710.2 1084.7 719.1 1092.0 724.3C1099.3 729.5 1112.9 738.0 1119.7 735.8C1126.5 733.6 1130.5 718.9 1132.7 711.3C1134.9 703.7 1125.9 697.7 1132.7 690.1C1139.5 682.5 1164.0 670.3 1173.5 665.7C1183.0 661.1 1183.8 660.8 1189.8 662.4C1195.8 664.0 1206.0 673.2 1209.3 675.4 M1100.1 699.9 L1132.7 690.1 M1119.7 737.4C1105.8 754.2 1048.2 815.1 1036.5 838.5C1024.8 861.9 1050.7 867.8 1049.6 877.6C1048.5 887.4 1033.3 893.9 1030.0 897.2 M1317.6 607.8C1307.2 612.5 1273.0 628.3 1255.0 636.3C1237.0 644.3 1216.9 649.4 1209.3 655.9C1201.7 662.4 1209.3 672.1 1209.3 675.4 M1209.3 659.1C1219.1 658.6 1259.3 650.5 1268.0 655.9C1276.7 661.3 1266.9 684.6 1261.5 691.7C1256.1 698.8 1239.2 694.5 1235.4 698.3C1231.6 702.1 1232.2 704.8 1238.7 714.6C1245.2 724.4 1264.4 743.4 1274.6 757.0C1284.8 770.6 1294.1 783.9 1300.0 796.1C1305.9 808.3 1311.7 817.7 1310.0 830.0C1308.3 842.3 1294.8 859.9 1290.0 870.0C1285.2 880.1 1280.9 881.3 1281.1 890.7C1281.2 900.1 1293.1 917.3 1290.9 926.5C1288.7 935.7 1278.3 939.9 1268.0 946.1C1257.7 952.4 1247.4 971.9 1228.9 964.0C1210.4 956.1 1173.0 906.9 1157.2 898.8C1141.4 890.6 1152.8 909.7 1134.3 915.1C1115.8 920.5 1066.4 930.0 1046.3 931.4C1026.2 932.8 1019.1 924.6 1013.7 923.3 M880.0 832.0C897.4 833.1 961.5 840.7 984.3 838.5C1007.1 836.3 1009.4 821.1 1017.0 818.9C1024.6 816.7 1026.8 821.6 1030.0 825.4C1033.2 829.2 1036.0 834.6 1036.5 841.7C1037.0 848.8 1033.8 863.4 1033.3 867.8 M974.6 924.9C977.9 924.9 986.0 929.0 994.1 924.9C1002.2 920.8 1018.6 904.5 1023.5 900.4 M1211.4 535.2C1229.1 547.3 1304.5 593.6 1317.6 607.8C1330.6 622.0 1306.0 613.4 1289.7 620.4C1273.4 627.4 1231.5 644.9 1219.8 649.8 M1198.8 533.8C1194.8 538.7 1179.4 557.6 1175.0 563.0C1170.6 568.4 1171.4 563.5 1172.3 565.9C1173.2 568.2 1173.8 570.8 1180.6 577.1C1187.3 583.4 1207.4 599.3 1212.8 603.7" fill="none" stroke="#c4c0b8" stroke-width="1.2" stroke-dasharray="1.3 1.4"/>
<path d="M1013 820C1005 830 1000 850 1010 862C1020 872 1030 860 1028 845C1026 830 1020 815 1013 820ZM1000 850C992 870 985 885 975 905M1030 875C1040 885 1045 900 1040 915M1020 860L1035 890" fill="none" stroke="#e9e3cf" stroke-width="2.4"/><path d="M1013 820C1005 830 1000 850 1010 862C1020 872 1030 860 1028 845C1026 830 1020 815 1013 820ZM1000 850C992 870 985 885 975 905M1030 875C1040 885 1045 900 1040 915M1020 860L1035 890" fill="none" stroke="#c4c0b8" stroke-width="1.2" stroke-dasharray="1.3 1.4"/>
<path d="M801.3 676.1C809.5 676.7 834.3 684.0 850.8 679.5C867.2 675.0 888.8 658.3 900.0 648.8C911.2 639.3 915.2 627.0 918.2 622.6 M880.0 760.2C889.8 748.8 921.0 708.8 938.7 691.7C956.4 674.6 973.0 661.0 986.0 657.5C999.0 654.0 1003.7 664.8 1017.0 670.5C1030.3 676.2 1057.8 688.2 1065.9 691.7" fill="none" stroke="#d8c9a0" stroke-width="3" stroke-dasharray="6 3"/>
<path d="M918.2 622.6L1018.6 536.3L1097.6 534.2" fill="none" stroke="#d8cba8" stroke-width="2.2" stroke-dasharray="4 3"/>
<path d="M1094.9 531.6L1101.5 538.2M1101.5 531.6L1094.9 538.2 M1130.4 563.6L1137.0 570.2M1137.0 563.6L1130.4 570.2 M1165.7 594.8L1172.3 601.4M1172.3 594.8L1165.7 601.4 M1201.1 626.2L1207.7 632.8M1207.7 626.2L1201.1 632.8 M1175.2 651.4L1181.8 658.0M1181.8 651.4L1175.2 658.0 M1187.1 658.4L1193.7 665.0M1193.7 658.4L1187.1 665.0 M1213.0 634.0L1219.6 640.6M1219.6 634.0L1213.0 640.6 M1238.8 609.4L1245.4 616.0M1245.4 609.4L1238.8 616.0 M1265.4 625.5L1272.0 632.1M1272.0 625.5L1265.4 632.1 M1287.4 615.1L1294.0 621.7M1294.0 615.1L1287.4 621.7 M1257.0 591.3L1263.6 597.9M1263.6 591.3L1257.0 597.9 M1195.5 554.2L1202.1 560.8M1202.1 554.2L1195.5 560.8 M1208.7 540.2L1215.3 546.8M1215.3 540.2L1208.7 546.8 M1206.7 531.9L1213.3 538.5M1213.3 531.9L1206.7 538.5 M1238.7 552.7L1245.3 559.3M1245.3 552.7L1238.7 559.3 M1277.7 577.3L1284.3 583.9M1284.3 577.3L1277.7 583.9 M1307.0 585.3L1313.6 591.9M1313.6 585.3L1307.0 591.9 M1336.7 594.1L1343.3 600.7M1343.3 594.1L1336.7 600.7 M1379.7 599.2L1386.3 605.8M1386.3 599.2L1379.7 605.8 M1467.4 601.3L1474.0 607.9M1474.0 601.3L1467.4 607.9 M1518.7 597.9L1525.3 604.5M1525.3 597.9L1518.7 604.5 M1559.2 629.1L1565.8 635.7M1565.8 629.1L1559.2 635.7 M1576.3 634.2L1582.9 640.8M1582.9 634.2L1576.3 640.8 M1604.0 628.2L1610.6 634.8M1610.6 628.2L1604.0 634.8 M1623.2 632.5L1629.8 639.1M1629.8 632.5L1623.2 639.1 M1592.5 656.9L1599.1 663.5M1599.1 656.9L1592.5 663.5 M1580.5 708.1L1587.1 714.7M1587.1 708.1L1580.5 714.7 M1614.2 740.6L1620.8 747.2M1620.8 740.6L1614.2 747.2 M1648.9 772.2L1655.5 778.8M1655.5 772.2L1648.9 778.8 M1601.9 832.0L1608.5 838.6M1608.5 832.0L1601.9 838.6 M1580.5 836.2L1587.1 842.8M1587.1 836.2L1580.5 842.8 M1564.3 891.7L1570.9 898.3M1570.9 891.7L1564.3 898.3 M1516.0 901.4L1522.6 908.0M1522.6 901.4L1516.0 908.0 M1467.4 911.8L1474.0 918.4M1474.0 911.8L1467.4 918.4 M1427.5 920.6L1434.1 927.2M1434.1 920.6L1427.5 927.2 M1387.5 930.2L1394.1 936.8M1394.1 930.2L1387.5 936.8 M1374.7 946.0L1381.3 952.6M1381.3 946.0L1374.7 952.6 M1382.0 984.8L1388.6 991.4M1388.6 984.8L1382.0 991.4 M1346.9 1007.9L1353.5 1014.5M1353.5 1007.9L1346.9 1014.5 M1328.6 992.1L1335.2 998.7M1335.2 992.1L1328.6 998.7 M1294.1 1003.4L1300.7 1010.0M1300.7 1003.4L1294.1 1010.0 M1260.2 1015.6L1266.8 1022.2M1266.8 1015.6L1260.2 1022.2 M1223.9 1028.4L1230.5 1035.0M1230.5 1028.4L1223.9 1035.0 M1174.7 1017.0L1181.3 1023.6M1181.3 1017.0L1174.7 1023.6 M1125.7 1004.9L1132.3 1011.5M1132.3 1004.9L1125.7 1011.5 M1104.4 995.5L1111.0 1002.1M1111.0 995.5L1104.4 1002.1 M1097.1 1005.7L1103.7 1012.3M1103.7 1005.7L1097.1 1012.3 M1072.3 991.3L1078.9 997.9M1078.9 991.3L1072.3 997.9 M1043.1 994.3L1049.7 1000.9M1049.7 994.3L1043.1 1000.9 M1011.1 992.2L1017.7 998.8M1017.7 992.2L1011.1 998.8 M987.6 978.5L994.2 985.1M994.2 978.5L987.6 985.1 M958.9 955.9L965.5 962.5M965.5 955.9L958.9 962.5 M955.5 936.7L962.1 943.3M962.1 936.7L955.5 943.3 M963.2 915.3L969.8 921.9M969.8 915.3L963.2 921.9 M1002.5 883.3L1009.1 889.9M1009.1 883.3L1002.5 889.9 M983.3 871.7L989.9 878.3M989.9 871.7L983.3 878.3 M961.9 859.8L968.5 866.4M968.5 859.8L961.9 866.4 M908.5 846.1L915.1 852.7M915.1 846.1L908.5 852.7 M887.2 847.8L893.8 854.4M893.8 847.8L887.2 854.4 M845.3 853.4L851.9 860.0M851.9 853.4L845.3 860.0 M835.9 839.3L842.5 845.9M842.5 839.3L835.9 845.9 M803.9 851.2L810.5 857.8M810.5 851.2L803.9 857.8 M803.9 872.6L810.5 879.2M810.5 872.6L803.9 879.2 M797.5 887.6L804.1 894.2M804.1 887.6L797.5 894.2 M773.0 905.3L779.6 911.9M779.6 905.3L773.0 911.9 M748.3 923.0L754.9 929.6M754.9 923.0L748.3 929.6 M709.9 943.1L716.5 949.7M716.5 943.1L709.9 949.7 M688.5 950.3L695.1 956.9M695.1 950.3L688.5 956.9 M673.6 948.7L680.2 955.3M680.2 948.7L673.6 955.3 M637.3 934.5L643.9 941.1M643.9 934.5L637.3 941.1 M628.7 928.1L635.3 934.7M635.3 928.1L628.7 934.7 M622.3 908.9L628.9 915.5M628.9 908.9L622.3 915.5 M624.5 883.3L631.1 889.9M631.1 883.3L624.5 889.9 M639.4 844.8L646.0 851.4M646.0 844.8L639.4 851.4 M644.5 834.2L651.1 840.8M651.1 834.2L644.5 840.8 M645.8 812.8L652.4 819.4M652.4 812.8L645.8 819.4 M639.4 795.7L646.0 802.3M646.0 795.7L639.4 802.3 M631.7 783.7L638.3 790.3M638.3 783.7L631.7 790.3 M664.1 748.7L670.7 755.3M670.7 748.7L664.1 755.3 M729.1 679.5L735.7 686.1M735.7 679.5L729.1 686.1 M761.2 654.8L767.8 661.4M767.8 654.8L761.2 661.4 M801.7 653.9L808.3 660.5M808.3 653.9L801.7 660.5 M835.9 600.5L842.5 607.1M842.5 600.5L835.9 607.1 M893.6 623.6L900.2 630.2M900.2 623.6L893.6 630.2 M914.9 619.3L921.5 625.9M921.5 619.3L914.9 625.9 M981.6 561.6L988.2 568.2M988.2 561.6L981.6 568.2 M1015.3 533.0L1021.9 539.6M1021.9 533.0L1015.3 539.6 M1055.4 532.2L1062.0 538.8M1062.0 532.2L1055.4 538.8 M1050.5 227.6L1057.1 234.2M1057.1 227.6L1050.5 234.2 M1069.1 236.9L1075.7 243.5M1075.7 236.9L1069.1 243.5 M1090.3 251.0L1096.9 257.6M1096.9 251.0L1090.3 257.6 M1111.8 266.4L1118.4 273.0M1118.4 266.4L1111.8 273.0 M1088.5 287.4L1095.1 294.0M1095.1 287.4L1088.5 294.0 M1066.0 273.4L1072.6 280.0M1072.6 273.4L1066.0 280.0 M1048.4 288.4L1055.0 295.0M1055.0 288.4L1048.4 295.0 M1029.5 305.2L1036.1 311.8M1036.1 305.2L1029.5 311.8 M1045.9 321.7L1052.5 328.3M1052.5 321.7L1045.9 328.3 M1062.9 338.6L1069.5 345.2M1069.5 338.6L1062.9 345.2 M1039.6 359.6L1046.2 366.2M1046.2 359.6L1039.6 366.2 M1014.7 367.4L1021.3 374.0M1021.3 367.4L1014.7 374.0 M990.6 374.5L997.2 381.1M997.2 374.5L990.6 381.1 M967.4 380.5L974.0 387.1M974.0 380.5L967.4 387.1 M935.5 398.4L942.1 405.0M942.1 398.4L935.5 405.0 M919.8 406.7L926.4 413.3M926.4 406.7L919.8 413.3 M904.5 416.4L911.1 423.0M911.1 416.4L904.5 423.0 M885.4 424.6L892.0 431.2M892.0 424.6L885.4 431.2 M865.8 434.1L872.4 440.7M872.4 434.1L865.8 440.7 M849.5 452.8L856.1 459.4M856.1 452.8L849.5 459.4 M819.4 492.4L826.0 499.0M826.0 492.4L819.4 499.0 M804.1 511.6L810.7 518.2M810.7 511.6L804.1 518.2 M786.5 501.0L793.1 507.6M793.1 501.0L786.5 507.6 M797.4 484.8L804.0 491.4M804.0 484.8L797.4 491.4 M820.0 455.2L826.6 461.8M826.6 455.2L820.0 461.8 M754.8 496.8L761.4 503.4M761.4 496.8L754.8 503.4 M739.5 501.3L746.1 507.9M746.1 501.3L739.5 507.9 M724.8 506.3L731.4 512.9M731.4 506.3L724.8 512.9 M726.6 501.0L733.2 507.6M733.2 501.0L726.6 507.6 M740.3 481.2L746.9 487.8M746.9 481.2L740.3 487.8 M753.1 463.0L759.7 469.6M759.7 463.0L753.1 469.6 M779.2 425.6L785.8 432.2M785.8 425.6L779.2 432.2 M793.5 405.9L800.1 412.5M800.1 405.9L793.5 412.5 M793.4 395.9L800.0 402.5M800.0 395.9L793.4 402.5 M798.5 381.8L805.1 388.4M805.1 381.8L798.5 388.4 M792.4 361.6L799.0 368.2M799.0 361.6L792.4 368.2 M793.4 335.3L800.0 341.9M800.0 335.3L793.4 341.9 M811.6 316.6L818.2 323.2M818.2 316.6L811.6 323.2 M829.7 299.0L836.3 305.6M836.3 299.0L829.7 305.6 M885.6 441.8L892.2 448.4M892.2 441.8L885.6 448.4 M907.9 436.6L914.5 443.2M914.5 436.6L907.9 443.2 M950.9 424.6L957.5 431.2M957.5 424.6L950.9 431.2 M964.7 423.5L971.3 430.1M971.3 423.5L964.7 430.1 M980.2 424.6L986.8 431.2M986.8 424.6L980.2 431.2 M993.3 429.5L999.9 436.1M999.9 429.5L993.3 436.1 M1001.7 445.5L1008.3 452.1M1008.3 445.5L1001.7 452.1 M1008.7 463.8L1015.3 470.4M1015.3 463.8L1008.7 470.4 M1003.0 480.1L1009.6 486.7M1009.6 480.1L1003.0 486.7 M983.5 483.3L990.1 489.9M990.1 483.3L983.5 489.9 M967.9 477.0L974.5 483.6M974.5 477.0L967.9 483.6 M954.1 471.9L960.7 478.5M960.7 471.9L954.1 478.5 M944.3 493.1L950.9 499.7M950.9 493.1L944.3 499.7 M950.2 515.5L956.8 522.1M956.8 515.5L950.2 522.1 M954.1 537.2L960.7 543.8M960.7 537.2L954.1 543.8 M967.2 548.6L973.8 555.2M973.8 548.6L967.2 555.2 M960.6 563.3L967.2 569.9M967.2 563.3L960.6 569.9 M948.5 566.3L955.1 572.9M955.1 566.3L948.5 572.9 M937.8 571.4L944.4 578.0M944.4 571.4L937.8 578.0 M938.6 586.1L945.2 592.7M945.2 586.1L938.6 592.7 M906.8 598.3L913.4 604.9M913.4 598.3L906.8 604.9 M890.5 592.6L897.1 599.2M897.1 592.6L890.5 599.2 M869.3 592.6L875.9 599.2M875.9 592.6L869.3 599.2 M861.2 582.8L867.8 589.4M867.8 582.8L861.2 589.4 M875.8 558.4L882.4 565.0M882.4 558.4L875.8 565.0 M887.3 530.6L893.9 537.2M893.9 530.6L887.3 537.2 M874.2 507.8L880.8 514.4M880.8 507.8L874.2 514.4 M870.1 481.7L876.7 488.3M876.7 481.7L870.1 488.3 M871.8 455.6L878.4 462.2M878.4 455.6L871.8 462.2 M1542.7 191.7L1549.3 198.3M1549.3 191.7L1542.7 198.3 M1551.8 182.0L1558.4 188.6M1558.4 182.0L1551.8 188.6 M1554.7 174.7L1561.3 181.3M1561.3 174.7L1554.7 181.3 M1560.2 173.0L1566.8 179.6M1566.8 173.0L1560.2 179.6 M1569.7 164.7L1576.3 171.3M1576.3 164.7L1569.7 171.3 M1575.1 165.8L1581.7 172.4M1581.7 165.8L1575.1 172.4 M1589.2 171.0L1595.8 177.6M1595.8 171.0L1589.2 177.6 M1596.7 170.7L1603.3 177.3M1603.3 170.7L1596.7 177.3 M1602.5 173.0L1609.1 179.6M1609.1 173.0L1602.5 179.6 M1617.4 180.2L1624.0 186.8M1624.0 180.2L1617.4 186.8 M1630.0 186.0L1636.6 192.6M1636.6 186.0L1630.0 192.6 M1637.1 187.5L1643.7 194.1M1643.7 187.5L1637.1 194.1 M1645.7 191.7L1652.3 198.3M1652.3 191.7L1645.7 198.3 M1651.0 195.1L1657.6 201.7M1657.6 195.1L1651.0 201.7 M1656.5 195.1L1663.1 201.7M1663.1 195.1L1656.5 201.7 M1675.5 203.1L1682.1 209.7M1682.1 203.1L1675.5 209.7 M1682.7 207.7L1689.3 214.3M1689.3 207.7L1682.7 214.3 M1689.0 205.5L1695.6 212.1M1695.6 205.5L1689.0 212.1 M1697.3 206.0L1703.9 212.6M1703.9 206.0L1697.3 212.6 M1704.6 205.7L1711.2 212.3M1711.2 205.7L1704.6 212.3 M1709.9 206.4L1716.5 213.0M1716.5 206.4L1709.9 213.0 M1727.4 203.5L1734.0 210.1M1734.0 203.5L1727.4 210.1 M1731.0 202.9L1737.6 209.5M1737.6 202.9L1731.0 209.5 M1739.7 201.7L1746.3 208.3M1746.3 201.7L1739.7 208.3 M1743.8 210.3L1750.4 216.9M1750.4 210.3L1743.8 216.9 M1752.7 221.7L1759.3 228.3M1759.3 221.7L1752.7 228.3 M1761.6 222.3L1768.2 228.9M1768.2 222.3L1761.6 228.9 M1766.8 227.8L1773.4 234.4M1773.4 227.8L1766.8 234.4 M1783.4 230.3L1790.0 236.9M1790.0 230.3L1783.4 236.9 M1789.7 234.7L1796.3 241.3M1796.3 234.7L1789.7 241.3 M1786.5 239.9L1793.1 246.5M1793.1 239.9L1786.5 246.5 M1784.7 246.4L1791.3 253.0M1791.3 246.4L1784.7 253.0 M1784.7 250.7L1791.3 257.3M1791.3 250.7L1784.7 257.3 M1786.2 256.0L1792.8 262.6M1792.8 256.0L1786.2 262.6 M1789.7 264.7L1796.3 271.3M1796.3 264.7L1789.7 271.3 M1784.4 269.4L1791.0 276.0M1791.0 269.4L1784.4 276.0 M1780.7 277.7L1787.3 284.3M1787.3 277.7L1780.7 284.3 M1778.6 284.7L1785.2 291.3M1785.2 284.7L1778.6 291.3 M1776.8 292.4L1783.4 299.0M1783.4 292.4L1776.8 299.0 M1776.2 297.9L1782.8 304.5M1782.8 297.9L1776.2 304.5 M1776.7 305.7L1783.3 312.3M1783.3 305.7L1776.7 312.3 M1776.8 311.5L1783.4 318.1M1783.4 311.5L1776.8 318.1 M1777.5 317.1L1784.1 323.7M1784.1 317.1L1777.5 323.7 M1779.9 326.0L1786.5 332.6M1786.5 326.0L1779.9 332.6 M1780.7 330.7L1787.3 337.3M1787.3 330.7L1780.7 337.3 M1778.5 335.3L1785.1 341.9M1785.1 335.3L1778.5 341.9 M1777.2 343.5L1783.8 350.1M1783.8 343.5L1777.2 350.1 M1770.2 362.8L1776.8 369.4M1776.8 362.8L1770.2 369.4 M1767.1 369.2L1773.7 375.8M1773.7 369.2L1767.1 375.8 M1766.7 376.7L1773.3 383.3M1773.3 376.7L1766.7 383.3 M1542.7 191.7L1549.3 198.3M1549.3 191.7L1542.7 198.3 M1542.1 198.2L1548.7 204.8M1548.7 198.2L1542.1 204.8 M1538.9 204.9L1545.5 211.5M1545.5 204.9L1538.9 211.5 M1538.7 209.7L1545.3 216.3M1545.3 209.7L1538.7 216.3 M1545.4 218.0L1552.0 224.6M1552.0 218.0L1545.4 224.6 M1548.7 223.7L1555.3 230.3M1555.3 223.7L1548.7 230.3 M1554.0 228.2L1560.6 234.8M1560.6 228.2L1554.0 234.8 M1561.5 231.0L1568.1 237.6M1568.1 231.0L1561.5 237.6 M1564.3 238.3L1570.9 244.9M1570.9 238.3L1564.3 244.9 M1577.7 244.7L1584.3 251.3M1584.3 244.7L1577.7 251.3 M1590.3 241.0L1596.9 247.6M1596.9 241.0L1590.3 247.6 M1597.9 242.0L1604.5 248.6M1604.5 242.0L1597.9 248.6 M1606.7 238.7L1613.3 245.3M1613.3 238.7L1606.7 245.3 M1606.0 247.6L1612.6 254.2M1612.6 247.6L1606.0 254.2 M1609.7 253.8L1616.3 260.4M1616.3 253.8L1609.7 260.4 M1608.7 261.7L1615.3 268.3M1615.3 261.7L1608.7 268.3 M1551.5 210.8L1558.1 217.4M1558.1 210.8L1551.5 217.4 M1564.7 212.3L1571.3 218.9M1571.3 212.3L1564.7 218.9 M1572.7 210.7L1579.3 217.3M1579.3 210.7L1572.7 217.3 M1583.3 208.8L1589.9 215.4M1589.9 208.8L1583.3 215.4 M1596.9 209.4L1603.5 216.0M1603.5 209.4L1596.9 216.0 M1604.0 211.5L1610.6 218.1M1610.6 211.5L1604.0 218.1 M1611.9 210.9L1618.5 217.5M1618.5 210.9L1611.9 217.5 M1618.5 210.8L1625.1 217.4M1625.1 210.8L1618.5 217.4 M1623.6 210.8L1630.2 217.4M1630.2 210.8L1623.6 217.4 M1628.4 214.8L1635.0 221.4M1635.0 214.8L1628.4 221.4 M1637.4 217.2L1644.0 223.8M1644.0 217.2L1637.4 223.8 M1647.7 221.4L1654.3 228.0M1654.3 221.4L1647.7 228.0 M1654.5 225.2L1661.1 231.8M1661.1 225.2L1654.5 231.8 M1661.5 227.3L1668.1 233.9M1668.1 227.3L1661.5 233.9 M1671.7 234.8L1678.3 241.4M1678.3 234.8L1671.7 241.4 M1683.1 240.4L1689.7 247.0M1689.7 240.4L1683.1 247.0 M1689.6 239.4L1696.2 246.0M1696.2 239.4L1689.6 246.0 M1695.4 245.1L1702.0 251.7M1702.0 245.1L1695.4 251.7 M1703.7 245.5L1710.3 252.1M1710.3 245.5L1703.7 252.1 M1710.4 247.8L1717.0 254.4M1717.0 247.8L1710.4 254.4 M1718.7 250.1L1725.3 256.7M1725.3 250.1L1718.7 256.7 M1724.1 252.7L1730.7 259.3M1730.7 252.7L1724.1 259.3 M1730.4 256.2L1737.0 262.8M1737.0 256.2L1730.4 262.8 M1734.1 262.1L1740.7 268.7M1740.7 262.1L1734.1 268.7 M1737.6 267.0L1744.2 273.6M1744.2 267.0L1737.6 273.6 M1741.1 274.8L1747.7 281.4M1747.7 274.8L1741.1 281.4 M1741.9 287.3L1748.5 293.9M1748.5 287.3L1741.9 293.9 M1743.8 306.9L1750.4 313.5M1750.4 306.9L1743.8 313.5 M1743.4 312.4L1750.0 319.0M1750.0 312.4L1743.4 319.0 M1744.0 327.6L1750.6 334.2M1750.6 327.6L1744.0 334.2 M1743.2 334.1L1749.8 340.7M1749.8 334.1L1743.2 340.7 M1743.9 343.7L1750.5 350.3M1750.5 343.7L1743.9 350.3 M1743.8 349.6L1750.4 356.2M1750.4 349.6L1743.8 356.2 M1752.7 396.7L1759.3 403.3M1759.3 396.7L1752.7 403.3 M1753.1 426.4L1759.7 433.0M1759.7 426.4L1753.1 433.0 M1751.2 433.0L1757.8 439.6M1757.8 433.0L1751.2 439.6 M1751.6 441.5L1758.2 448.1M1758.2 441.5L1751.6 448.1 M1751.0 450.0L1757.6 456.6M1757.6 450.0L1751.0 456.6 M1752.8 457.6L1759.4 464.2M1759.4 457.6L1752.8 464.2 M1750.9 465.3L1757.5 471.9M1757.5 465.3L1750.9 471.9 M1753.3 472.2L1759.9 478.8M1759.9 472.2L1753.3 478.8 M1752.7 486.7L1759.3 493.3M1759.3 486.7L1752.7 493.3 M1756.7 326.7L1763.3 333.3M1763.3 326.7L1756.7 333.3 M1773.1 307.5L1779.7 314.1M1779.7 307.5L1773.1 314.1 M1774.3 303.7L1780.9 310.3M1780.9 303.7L1774.3 310.3 M1780.7 296.7L1787.3 303.3M1787.3 296.7L1780.7 303.3 M1579.7 408.7L1586.3 415.3M1586.3 408.7L1579.7 415.3 M1587.1 411.7L1593.7 418.3M1593.7 411.7L1587.1 418.3 M1592.5 412.6L1599.1 419.2M1599.1 412.6L1592.5 419.2 M1596.7 413.7L1603.3 420.3M1603.3 413.7L1596.7 420.3 M1606.1 413.2L1612.7 419.8M1612.7 413.2L1606.1 419.8 M1611.5 414.9L1618.1 421.5M1618.1 414.9L1611.5 421.5 M1620.2 416.3L1626.8 422.9M1626.8 416.3L1620.2 422.9 M1628.2 415.9L1634.8 422.5M1634.8 415.9L1628.2 422.5 M1641.6 416.1L1648.2 422.7M1648.2 416.1L1641.6 422.7 M1649.7 416.7L1656.3 423.3M1656.3 416.7L1649.7 423.3 M1657.0 413.4L1663.6 420.0M1663.6 413.4L1657.0 420.0 M1660.8 408.8L1667.4 415.4M1667.4 408.8L1660.8 415.4 M1664.5 405.1L1671.1 411.7M1671.1 405.1L1664.5 411.7 M1671.6 401.6L1678.2 408.2M1678.2 401.6L1671.6 408.2 M1676.7 397.7L1683.3 404.3M1683.3 397.7L1676.7 404.3 M1681.2 389.2L1687.8 395.8M1687.8 389.2L1681.2 395.8 M1684.0 383.3L1690.6 389.9M1690.6 383.3L1684.0 389.9 M1685.9 377.6L1692.5 384.2M1692.5 377.6L1685.9 384.2 M1688.7 371.1L1695.3 377.7M1695.3 371.1L1688.7 377.7 M1693.0 363.7L1699.6 370.3M1699.6 363.7L1693.0 370.3 M1694.3 359.2L1700.9 365.8M1700.9 359.2L1694.3 365.8 M1697.5 351.2L1704.1 357.8M1704.1 351.2L1697.5 357.8 M1700.7 344.7L1707.3 351.3M1707.3 344.7L1700.7 351.3 M1699.5 338.8L1706.1 345.4M1706.1 338.8L1699.5 345.4 M1695.9 332.4L1702.5 339.0M1702.5 332.4L1695.9 339.0 M1695.7 328.7L1702.3 335.3M1702.3 328.7L1695.7 335.3 M1542.7 309.7L1549.3 316.3M1549.3 309.7L1542.7 316.3 M1536.7 318.7L1543.3 325.3M1543.3 318.7L1536.7 325.3 M1534.7 325.5L1541.3 332.1M1541.3 325.5L1534.7 332.1 M1536.2 332.6L1542.8 339.2M1542.8 332.6L1536.2 339.2 M1535.0 337.9L1541.6 344.5M1541.6 337.9L1535.0 344.5 M1535.3 346.2L1541.9 352.8M1541.9 346.2L1535.3 352.8 M1532.7 350.7L1539.3 357.3M1539.3 350.7L1532.7 357.3 M1526.7 350.3L1533.3 356.9M1533.3 350.3L1526.7 356.9 M1512.5 344.9L1519.1 351.5M1519.1 344.9L1512.5 351.5 M1503.8 345.8L1510.4 352.4M1510.4 345.8L1503.8 352.4 M1490.0 339.5L1496.6 346.1M1496.6 339.5L1490.0 346.1 M1474.2 336.8L1480.8 343.4M1480.8 336.8L1474.2 343.4 M1466.7 336.7L1473.3 343.3M1473.3 336.7L1466.7 343.3 M1462.7 342.7L1469.3 349.3M1469.3 342.7L1462.7 349.3 M1465.7 348.8L1472.3 355.4M1472.3 348.8L1465.7 355.4 M1474.0 355.4L1480.6 362.0M1480.6 355.4L1474.0 362.0 M1477.7 359.7L1484.3 366.3M1484.3 359.7L1477.7 366.3 M1485.1 362.1L1491.7 368.7M1491.7 362.1L1485.1 368.7 M1497.5 370.0L1504.1 376.6M1504.1 370.0L1497.5 376.6 M1501.8 372.3L1508.4 378.9M1508.4 372.3L1501.8 378.9 M1507.7 377.7L1514.3 384.3M1514.3 377.7L1507.7 384.3 M1514.1 381.6L1520.7 388.2M1520.7 381.6L1514.1 388.2 M1519.8 383.2L1526.4 389.8M1526.4 383.2L1519.8 389.8 M1532.7 389.7L1539.3 396.3M1539.3 389.7L1532.7 396.3 M1544.7 379.7L1551.3 386.3M1551.3 379.7L1544.7 386.3 M1549.5 380.8L1556.1 387.4M1556.1 380.8L1549.5 387.4 M1558.7 387.7L1565.3 394.3M1565.3 387.7L1558.7 394.3 M1572.6 401.8L1579.2 408.4M1579.2 401.8L1572.6 408.4 M1579.7 408.7L1586.3 415.3M1586.3 408.7L1579.7 415.3 M1542.7 335.7L1549.3 342.3M1549.3 335.7L1542.7 342.3 M1550.9 338.9L1557.5 345.5M1557.5 338.9L1550.9 345.5 M1555.7 339.7L1562.3 346.3M1562.3 339.7L1555.7 346.3 M1564.3 341.1L1570.9 347.7M1570.9 341.1L1564.3 347.7 M1573.8 341.2L1580.4 347.8M1580.4 341.2L1573.8 347.8 M1581.2 342.9L1587.8 349.5M1587.8 342.9L1581.2 349.5 M1588.3 345.0L1594.9 351.6M1594.9 345.0L1588.3 351.6 M1601.7 346.7L1608.3 353.3M1608.3 346.7L1601.7 353.3 M1600.7 305.7L1607.3 312.3M1607.3 305.7L1600.7 312.3 M1592.0 306.6L1598.6 313.2M1598.6 306.6L1592.0 313.2 M1584.7 306.6L1591.3 313.2M1591.3 306.6L1584.7 313.2 M1577.8 306.8L1584.4 313.4M1584.4 306.8L1577.8 313.4 M1563.2 306.3L1569.8 312.9M1569.8 306.3L1563.2 312.9 M1555.6 310.6L1562.2 317.2M1562.2 310.6L1555.6 317.2 M1551.9 307.7L1558.5 314.3M1558.5 307.7L1551.9 314.3 M1542.7 309.7L1549.3 316.3M1549.3 309.7L1542.7 316.3 M1578.4 184.7L1585.0 191.3M1585.0 184.7L1578.4 191.3 M1573.0 185.5L1579.6 192.1M1579.6 185.5L1573.0 192.1 M1586.9 185.5L1593.5 192.1M1593.5 185.5L1586.9 192.1 M1577.9 192.8L1584.5 199.4M1584.5 192.8L1577.9 199.4 M1581.6 197.1L1588.2 203.7M1588.2 197.1L1581.6 203.7 M1580.4 188.4L1587.0 195.0M1587.0 188.4L1580.4 195.0 M1583.4 184.9L1590.0 191.5M1590.0 184.9L1583.4 191.5 M1590.3 187.6L1596.9 194.2M1596.9 187.6L1590.3 194.2 M1578.0 192.8L1584.6 199.4M1584.6 192.8L1578.0 199.4 M1572.4 192.4L1579.0 199.0M1579.0 192.4L1572.4 199.0 M1589.1 187.0L1595.7 193.6M1595.7 187.0L1589.1 193.6 M1591.4 190.2L1598.0 196.8M1598.0 190.2L1591.4 196.8 M1587.3 189.2L1593.9 195.8M1593.9 189.2L1587.3 195.8 M1578.4 185.8L1585.0 192.4M1585.0 185.8L1578.4 192.4 M1568.9 184.7L1575.5 191.3M1575.5 184.7L1568.9 191.3 M1592.4 190.3L1599.0 196.9M1599.0 190.3L1592.4 196.9 M1579.8 196.4L1586.4 203.0M1586.4 196.4L1579.8 203.0 M1583.2 197.7L1589.8 204.3M1589.8 197.7L1583.2 204.3 M1577.3 184.9L1583.9 191.5M1583.9 184.9L1577.3 191.5 M1590.8 184.0L1597.4 190.6M1597.4 184.0L1590.8 190.6 M1587.7 191.3L1594.3 197.9M1594.3 191.3L1587.7 197.9 M1592.3 197.2L1598.9 203.8M1598.9 197.2L1592.3 203.8 M1632.5 240.0L1639.1 246.6M1639.1 240.0L1632.5 246.6 M1609.5 251.0L1616.1 257.6M1616.1 251.0L1609.5 257.6 M1638.2 241.1L1644.8 247.7M1644.8 241.1L1638.2 247.7 M1624.0 241.3L1630.6 247.9M1630.6 241.3L1624.0 247.9 M1619.9 239.2L1626.5 245.8M1626.5 239.2L1619.9 245.8 M1620.6 252.3L1627.2 258.9M1627.2 252.3L1620.6 258.9 M1615.9 258.9L1622.5 265.5M1622.5 258.9L1615.9 265.5 M1610.7 244.4L1617.3 251.0M1617.3 244.4L1610.7 251.0 M1618.0 249.3L1624.6 255.9M1624.6 249.3L1618.0 255.9 M1636.2 248.0L1642.8 254.6M1642.8 248.0L1636.2 254.6 M1633.7 262.3L1640.3 268.9M1640.3 262.3L1633.7 268.9 M1613.4 260.9L1620.0 267.5M1620.0 260.9L1613.4 267.5 M1630.3 257.9L1636.9 264.5M1636.9 257.9L1630.3 264.5 M1630.6 249.4L1637.2 256.0M1637.2 249.4L1630.6 256.0 M1612.2 242.7L1618.8 249.3M1618.8 242.7L1612.2 249.3 M1615.0 243.6L1621.6 250.2M1621.6 243.6L1615.0 250.2 M1613.9 244.3L1620.5 250.9M1620.5 244.3L1613.9 250.9 M1628.9 258.5L1635.5 265.1M1635.5 258.5L1628.9 265.1 M1637.4 260.4L1644.0 267.0M1644.0 260.4L1637.4 267.0 M1612.9 259.8L1619.5 266.4M1619.5 259.8L1612.9 266.4 M1615.4 240.9L1622.0 247.5M1622.0 240.9L1615.4 247.5 M1619.1 253.9L1625.7 260.5M1625.7 253.9L1619.1 260.5 M1669.6 219.8L1676.2 226.4M1676.2 219.8L1669.6 226.4 M1690.6 245.2L1697.2 251.8M1697.2 245.2L1690.6 251.8 M1690.7 228.1L1697.3 234.7M1697.3 228.1L1690.7 234.7 M1689.0 214.6L1695.6 221.2M1695.6 214.6L1689.0 221.2 M1719.5 249.5L1726.1 256.1M1726.1 249.5L1719.5 256.1 M1710.0 227.4L1716.6 234.0M1716.6 227.4L1710.0 234.0 M1693.3 223.8L1699.9 230.4M1699.9 223.8L1693.3 230.4 M1706.0 238.1L1712.6 244.7M1712.6 238.1L1706.0 244.7 M1685.3 247.4L1691.9 254.0M1691.9 247.4L1685.3 254.0 M1709.9 219.9L1716.5 226.5M1716.5 219.9L1709.9 226.5 M1715.3 239.0L1721.9 245.6M1721.9 239.0L1715.3 245.6 M1681.7 223.1L1688.3 229.7M1688.3 223.1L1681.7 229.7 M1711.8 214.1L1718.4 220.7M1718.4 214.1L1711.8 220.7 M1693.0 251.2L1699.6 257.8M1699.6 251.2L1693.0 257.8 M1682.1 231.8L1688.7 238.4M1688.7 231.8L1682.1 238.4 M1721.1 247.4L1727.7 254.0M1727.7 247.4L1721.1 254.0 M1714.0 233.1L1720.6 239.7M1720.6 233.1L1714.0 239.7 M1722.5 221.5L1729.1 228.1M1729.1 221.5L1722.5 228.1 M1719.6 227.9L1726.2 234.5M1726.2 227.9L1719.6 234.5 M1706.2 236.4L1712.8 243.0M1712.8 236.4L1706.2 243.0 M1758.9 271.2L1765.5 277.8M1765.5 271.2L1758.9 277.8 M1770.5 279.0L1777.1 285.6M1777.1 279.0L1770.5 285.6 M1772.7 265.2L1779.3 271.8M1779.3 265.2L1772.7 271.8 M1762.4 276.5L1769.0 283.1M1769.0 276.5L1762.4 283.1 M1761.1 270.9L1767.7 277.5M1767.7 270.9L1761.1 277.5 M1773.7 278.4L1780.3 285.0M1780.3 278.4L1773.7 285.0 M1755.7 270.9L1762.3 277.5M1762.3 270.9L1755.7 277.5 M1754.9 270.2L1761.5 276.8M1761.5 270.2L1754.9 276.8 M1772.4 272.8L1779.0 279.4M1779.0 272.8L1772.4 279.4 M1779.9 259.9L1786.5 266.5M1786.5 259.9L1779.9 266.5 M1779.7 262.8L1786.3 269.4M1786.3 262.8L1779.7 269.4 M1763.1 256.9L1769.7 263.5M1769.7 256.9L1763.1 263.5 M1767.8 254.1L1774.4 260.7M1774.4 254.1L1767.8 260.7 M1759.9 271.0L1766.5 277.6M1766.5 271.0L1759.9 277.6 M1775.6 258.3L1782.2 264.9M1782.2 258.3L1775.6 264.9 M1777.0 265.3L1783.6 271.9M1783.6 265.3L1777.0 271.9 M1756.1 273.0L1762.7 279.6M1762.7 273.0L1756.1 279.6 M1775.3 265.9L1781.9 272.5M1781.9 265.9L1775.3 272.5 M1618.6 406.7L1625.2 413.3M1625.2 406.7L1618.6 413.3 M1624.6 412.8L1631.2 419.4M1631.2 412.8L1624.6 419.4 M1632.8 389.1L1639.4 395.7M1639.4 389.1L1632.8 395.7 M1587.9 385.1L1594.5 391.7M1594.5 385.1L1587.9 391.7 M1605.2 405.1L1611.8 411.7M1611.8 405.1L1605.2 411.7 M1644.4 398.2L1651.0 404.8M1651.0 398.2L1644.4 404.8 M1608.9 404.1L1615.5 410.7M1615.5 404.1L1608.9 410.7 M1643.6 405.4L1650.2 412.0M1650.2 405.4L1643.6 412.0 M1604.4 412.5L1611.0 419.1M1611.0 412.5L1604.4 419.1 M1646.2 414.0L1652.8 420.6M1652.8 414.0L1646.2 420.6 M1681.6 285.2L1688.2 291.8M1688.2 285.2L1681.6 291.8 M1684.7 283.7L1691.3 290.3M1691.3 283.7L1684.7 290.3 M1668.2 294.8L1674.8 301.4M1674.8 294.8L1668.2 301.4 M1704.2 303.8L1710.8 310.4M1710.8 303.8L1704.2 310.4 M1682.6 312.6L1689.2 319.2M1689.2 312.6L1682.6 319.2 M1670.6 288.0L1677.2 294.6M1677.2 288.0L1670.6 294.6 M1675.4 299.2L1682.0 305.8M1682.0 299.2L1675.4 305.8 M1706.2 292.6L1712.8 299.2M1712.8 292.6L1706.2 299.2 M1754.0 396.7L1760.6 403.3M1760.6 396.7L1754.0 403.3 M1754.4 405.7L1761.0 412.3M1761.0 405.7L1754.4 412.3 M1752.6 414.7L1759.2 421.3M1759.2 414.7L1752.6 421.3 M1754.3 423.7L1760.9 430.3M1760.9 423.7L1754.3 430.3 M1754.3 432.7L1760.9 439.3M1760.9 432.7L1754.3 439.3 M1752.6 441.7L1759.2 448.3M1759.2 441.7L1752.6 448.3 M1751.4 450.7L1758.0 457.3M1758.0 450.7L1751.4 457.3 M1751.0 459.7L1757.6 466.3M1757.6 459.7L1751.0 466.3 M1751.7 468.7L1758.3 475.3M1758.3 468.7L1751.7 475.3 M1752.5 477.7L1759.1 484.3M1759.1 477.7L1752.5 484.3 M1750.8 486.7L1757.4 493.3M1757.4 486.7L1750.8 493.3 M912.0 217.7L918.6 224.3M918.6 217.7L912.0 224.3 M912.1 219.3L918.7 225.9M918.7 219.3L912.1 225.9 M914.4 217.9L921.0 224.5M921.0 217.9L914.4 224.5 M915.0 218.3L921.6 224.9M921.6 218.3L915.0 224.9 M912.8 215.4L919.4 222.0M919.4 215.4L912.8 222.0 M914.6 214.5L921.2 221.1M921.2 214.5L914.6 221.1 M909.1 216.6L915.7 223.2M915.7 216.6L909.1 223.2 M911.0 219.5L917.6 226.1M917.6 219.5L911.0 226.1 M910.3 217.3L916.9 223.9M916.9 217.3L910.3 223.9 M915.7 217.1L922.3 223.7M922.3 217.1L915.7 223.7 M916.8 215.0L923.4 221.6M923.4 215.0L916.8 221.6 M910.4 216.1L917.0 222.7M917.0 216.1L910.4 222.7 M1058.4 217.1L1065.0 223.7M1065.0 217.1L1058.4 223.7 M1056.7 217.1L1063.3 223.7M1063.3 217.1L1056.7 223.7 M1061.7 217.8L1068.3 224.4M1068.3 217.8L1061.7 224.4 M1062.9 213.8L1069.5 220.4M1069.5 213.8L1062.9 220.4 M1061.5 218.3L1068.1 224.9M1068.1 218.3L1061.5 224.9 M1063.0 214.3L1069.6 220.9M1069.6 214.3L1063.0 220.9 M1055.6 218.5L1062.2 225.1M1062.2 218.5L1055.6 225.1 M1061.2 214.4L1067.8 221.0M1067.8 214.4L1061.2 221.0 M1063.4 218.2L1070.0 224.8M1070.0 218.2L1063.4 224.8 M1060.8 218.5L1067.4 225.1M1067.4 218.5L1060.8 225.1 M1060.8 215.6L1067.4 222.2M1067.4 215.6L1060.8 222.2 M1055.2 215.6L1061.8 222.2M1061.8 215.6L1055.2 222.2 M891.7 478.2L898.3 484.8M898.3 478.2L891.7 484.8 M884.6 477.3L891.2 483.9M891.2 477.3L884.6 483.9 M889.6 486.9L896.2 493.5M896.2 486.9L889.6 493.5 M893.4 476.2L900.0 482.8M900.0 476.2L893.4 482.8 M887.7 483.7L894.3 490.3M894.3 483.7L887.7 490.3 M888.3 550.0L894.9 556.6M894.9 550.0L888.3 556.6 M890.5 546.1L897.1 552.7M897.1 546.1L890.5 552.7 M899.4 550.9L906.0 557.5M906.0 550.9L899.4 557.5 M888.0 550.3L894.6 556.9M894.6 550.3L888.0 556.9 M969.2 559.5L975.8 566.1M975.8 559.5L969.2 566.1 M968.0 555.6L974.6 562.2M974.6 555.6L968.0 562.2 M962.5 552.9L969.1 559.5M969.1 552.9L962.5 559.5 M963.5 555.0L970.1 561.6M970.1 555.0L963.5 561.6 M960.6 560.4L967.2 567.0M967.2 560.4L960.6 567.0 M969.3 559.3L975.9 565.9M975.9 559.3L969.3 565.9" stroke="#f01010" stroke-width="1.05" fill="none" opacity=".9"/>
<circle cx="908" cy="337" r="3.9" fill="#458a47" stroke="#fff" stroke-width="1.2"/>
<circle cx="937" cy="452" r="3.9" fill="#458a47" stroke="#fff" stroke-width="1.2"/>
<circle cx="1205.3" cy="532.1" r="3.9" fill="#458a47" stroke="#fff" stroke-width="1.2"/>
<circle cx="1214" cy="678" r="3.9" fill="#458a47" stroke="#fff" stroke-width="1.2"/>
<circle cx="1035" cy="874" r="3.9" fill="#458a47" stroke="#fff" stroke-width="1.2"/>
<circle cx="1721.3" cy="565.4" r="3.9" fill="#458a47" stroke="#fff" stroke-width="1.2"/>
<text x="912" y="332" font-family="Liberation Sans" font-size="15.5" font-style="italic" textLength="86" lengthAdjust="spacingAndGlyphs" fill="#fff" stroke="#626262" stroke-width="2.6" stroke-linejoin="round" paint-order="stroke">Swellendam</text>
<text x="941" y="446.5" font-family="Liberation Sans" font-size="13.5" textLength="44" lengthAdjust="spacingAndGlyphs" fill="#fff" stroke="#626262" stroke-width="2.6" stroke-linejoin="round" paint-order="stroke">Railton</text>
<text x="1208" y="528" font-family="Liberation Sans" font-size="12" textLength="207" lengthAdjust="spacingAndGlyphs" fill="#fff" stroke="#626262" stroke-width="2.6" stroke-linejoin="round" paint-order="stroke">Bontebok National Park Entrance Gate</text>
<text x="1217" y="674" font-family="Liberation Sans" font-size="12" textLength="227" lengthAdjust="spacingAndGlyphs" fill="#fff" stroke="#626262" stroke-width="2.6" stroke-linejoin="round" paint-order="stroke">Bontebok National Park Reception &amp; Shop</text>
<text x="1039" y="870.5" font-family="Liberation Sans" font-size="10.5" textLength="131" lengthAdjust="spacingAndGlyphs" fill="#fff" stroke="#626262" stroke-width="2.6" stroke-linejoin="round" paint-order="stroke">Lang Elsies Kraal Rest Camp</text>
<text x="1725" y="560" font-family="Liberation Sans" font-size="15.5" font-style="italic" textLength="106" lengthAdjust="spacingAndGlyphs" fill="#fff" stroke="#626262" stroke-width="2.6" stroke-linejoin="round" paint-order="stroke">Buffeljagsrivier</text>
</svg>
<div class="a" style="left:1976px;top:166px;width:1px;height:1010px;background:#cfcfcf"></div>
<div class="a" style="left:399px;top:1176px;width:1578px;height:1px;background:#a8a8a8"></div>
<div class="a" style="left:1012px;top:1184px;font-size:13px;line-height:16px;color:#0000ee;text-decoration:underline;white-space:nowrap">There is a new plugin available</div>
<div class="a" style="left:1200px;top:1183px;width:20px;height:20px;border:1px solid #8a8a8a;background:linear-gradient(#f6f6f6,#dcdcdc)"></div>
<svg class="a" style="left:1201px;top:1184px" width="18" height="18" viewBox="0 0 18 18"><path d="M5 3C8 1 12 3 11 7L14 10C15 13 12 16 9 15C6 14 5 11 7 9L4 6C3.5 5 4 3.5 5 3Z" fill="#ddd" stroke="#222" stroke-width="1.4"/><circle cx="10" cy="12" r="1.8" fill="#222"/><path d="M13 3L16 1" stroke="#555" stroke-width=".7"/></svg>
<div class="a" style="left:1229px;top:1184px;font-size:13px;line-height:16px;color:#000;white-space:nowrap">Coordinate:</div>
<div class="a" style="left:1306px;top:1183px;width:300px;height:20px;border:1px solid #9a9a9a;border-top-color:#777;background:#fff;font-size:13px;line-height:18px;text-align:center;color:#000">20.4470,-34.0575</div>
<div class="a" style="left:1615px;top:1184px;font-size:13px;line-height:16px;color:#000">Scale</div>
<div class="a" style="left:1661px;top:1184px;width:94px;height:19px;border:1px solid #9a9a9a;border-radius:0 4px 4px 0;background:#fff;font-size:13px;line-height:18px;padding-left:2px;color:#000">1:19951</div>
<div class="a" style="left:1740px;top:1185px;width:14px;height:17px;border-left:1px solid #c8c8c8;background:linear-gradient(#fdfdfd,#e6e6e6);border-radius:0 3px 3px 0"></div>
<svg class="a" style="left:1744px;top:1192px" width="7" height="5"><path d="M0 0h7l-3.5 4.5z" fill="#333"/></svg>
<div class="a" style="left:1761px;top:1183px;width:20px;height:20px;border:1px solid #8a8a8a;background:linear-gradient(#f6f6f6,#dcdcdc)"></div>
<svg class="a" style="left:1762px;top:1184px" width="18" height="18" viewBox="0 0 18 18"><path d="M3 16L15 3" stroke="#555" stroke-width="3"/><circle cx="6" cy="6" r="3.5" fill="none" stroke="#d21" stroke-width="1.5"/><path d="M3.5 8.5L8.5 3.5" stroke="#d21" stroke-width="1.5"/></svg>
<div class="a" style="left:1787px;top:1184px;width:14px;height:14px;border:1px solid #4a4a4a;border-radius:3px;background:linear-gradient(#ffffff,#d3d8de)"></div>
<svg class="a" style="left:1789px;top:1180px" width="15" height="14" viewBox="0 0 15 14"><path d="M3 7.5L6.5 11L13.5 1" fill="none" stroke="#111" stroke-width="2.3" stroke-linecap="round"/></svg>
<div class="a" style="left:1805px;top:1184px;font-size:13px;line-height:16px;color:#000">Render</div>
<div class="a" style="left:1854px;top:1184px;font-size:13px;line-height:16px;color:#4a4a4a">EPSG:4326</div>
<div class="a" style="left:1931px;top:1183px;width:20px;height:19px;border:1px solid #8a8a8a;background:linear-gradient(#f6f6f6,#dcdcdc)"></div>
<svg class="a" style="left:1932px;top:1184px" width="18" height="17" viewBox="0 0 18 17"><circle cx="9" cy="8.5" r="6" fill="none" stroke="#777" stroke-width="1.3"/><ellipse cx="9" cy="8.5" rx="2.5" ry="6" fill="none" stroke="#777" stroke-width="1"/><path d="M3 8.5h12M9 2.5v12" stroke="#777" stroke-width="1"/></svg>
<svg class="a" style="left:1965px;top:1196px" width="11" height="11"><path d="M10 1L1 10M10 5L5 10M10 9L9 10" stroke="#999" stroke-width="1"/></svg></body></html>
